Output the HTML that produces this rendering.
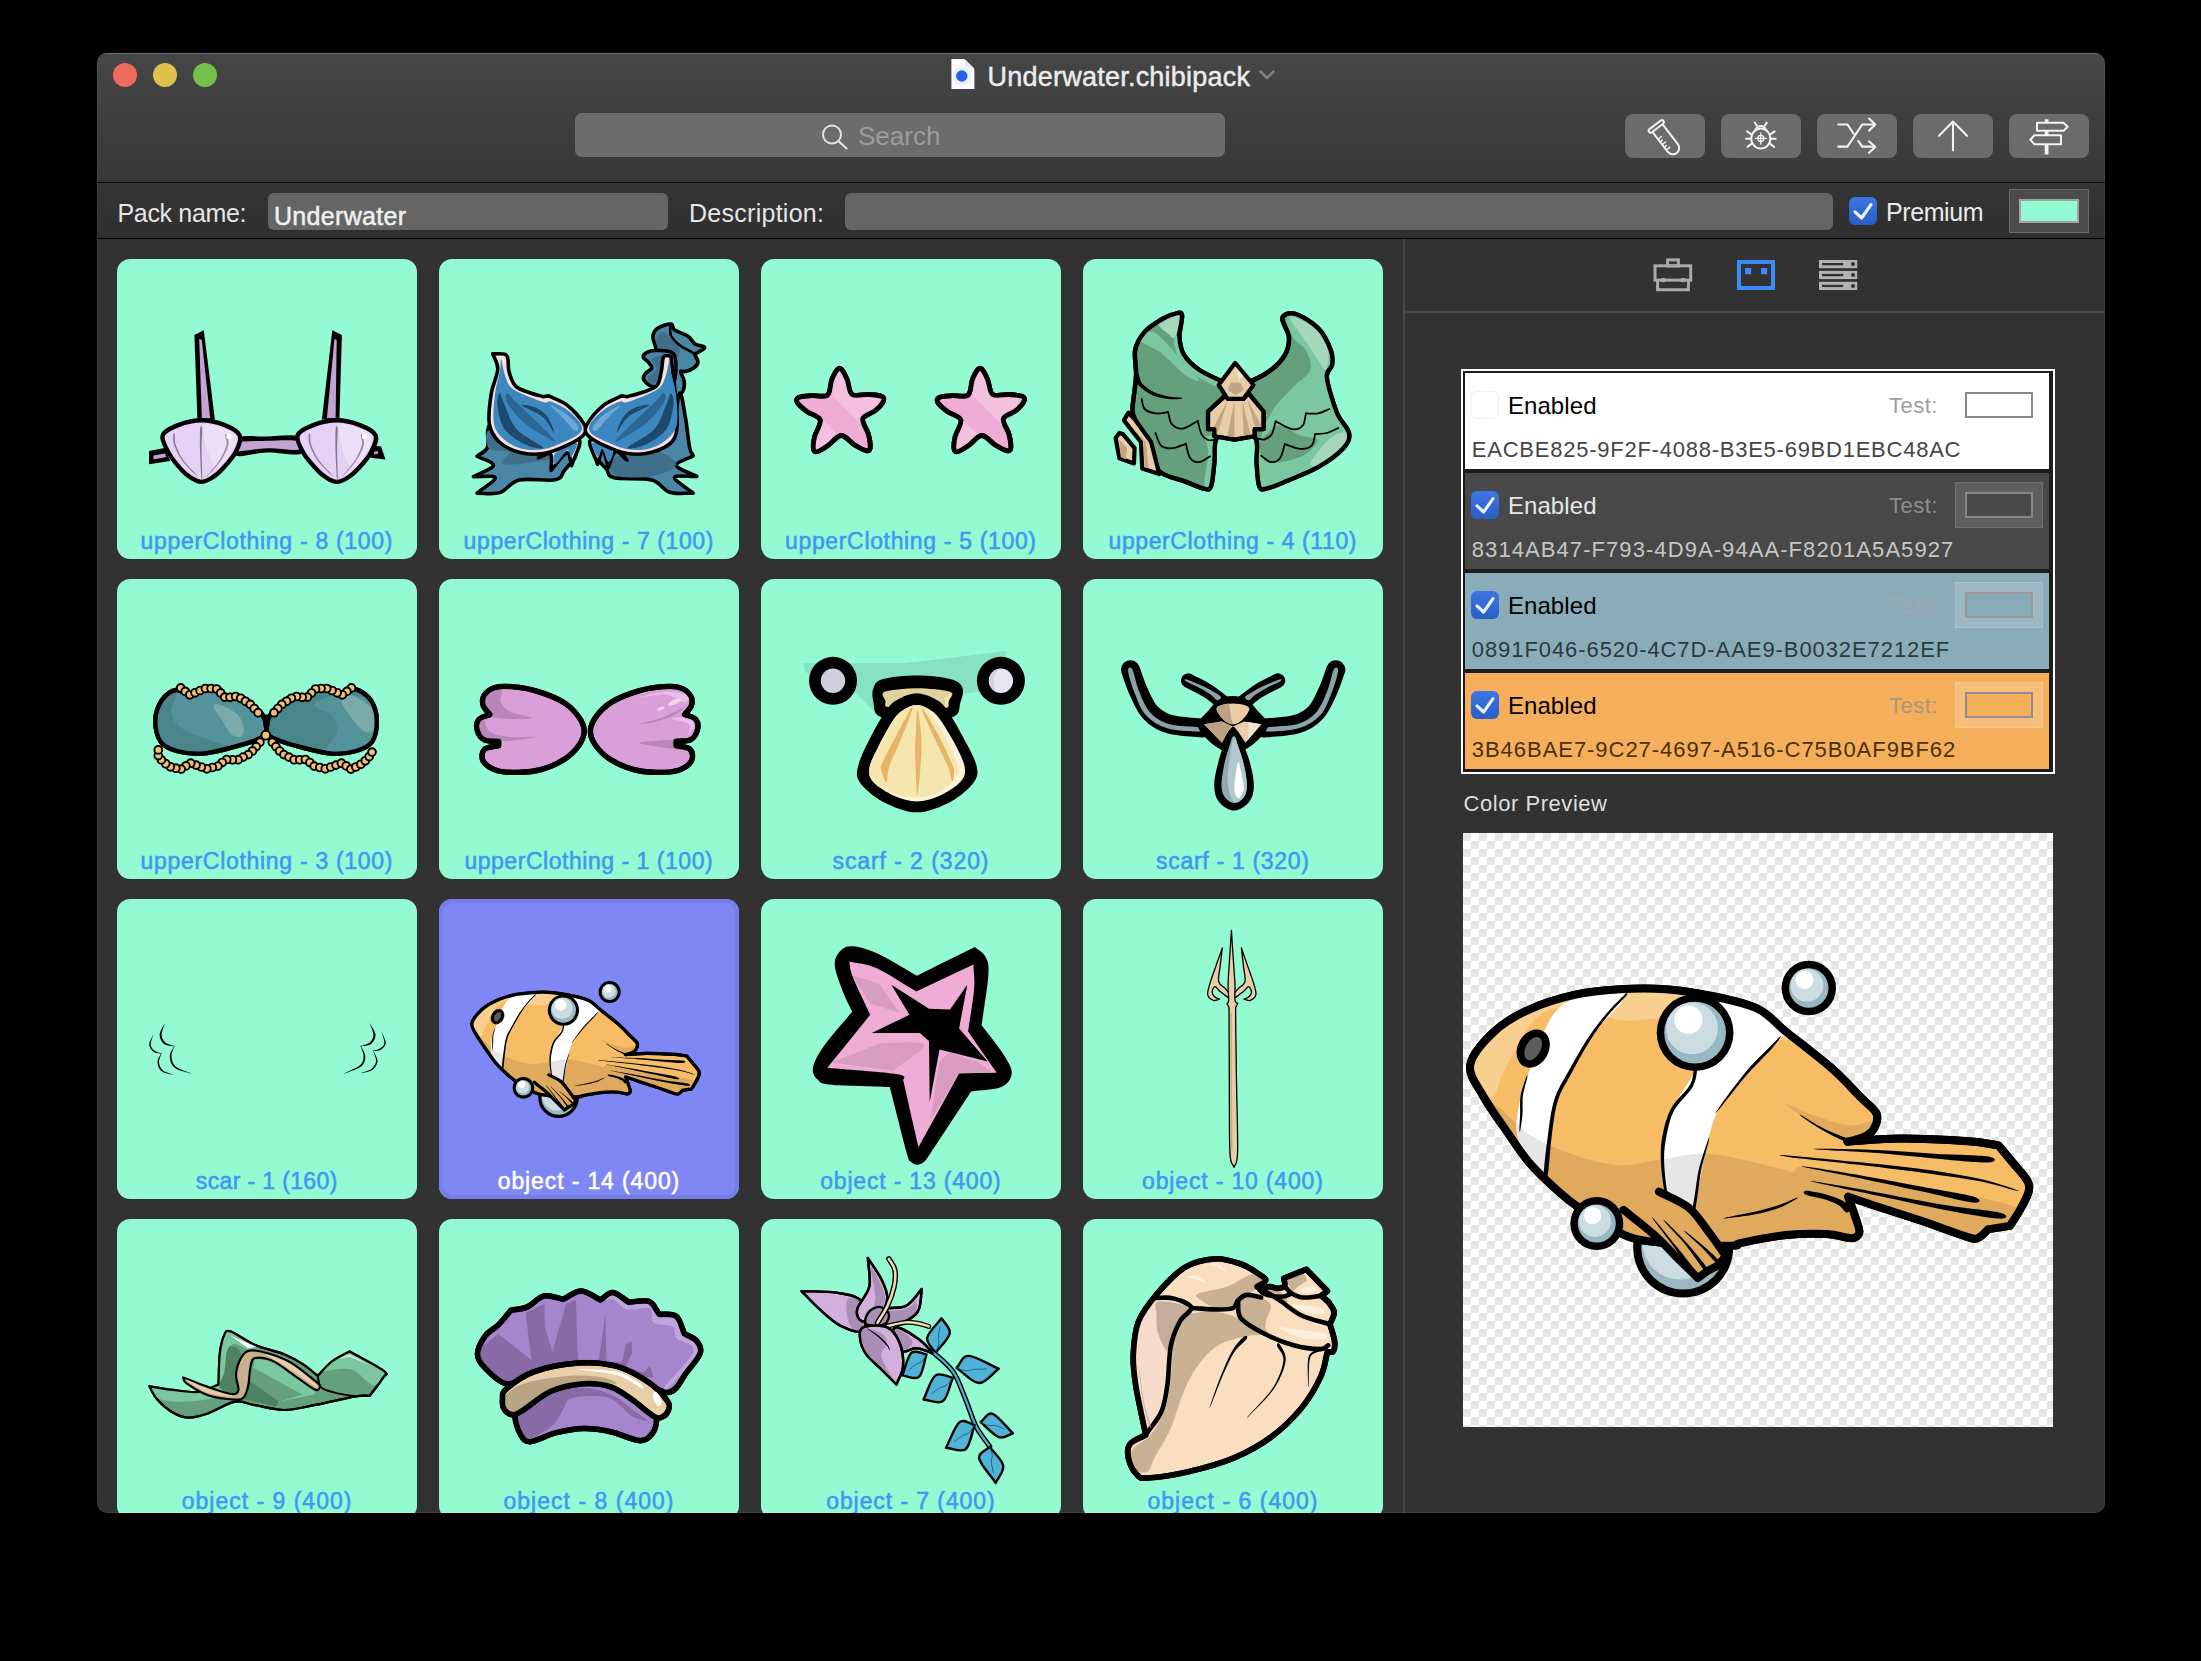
<!DOCTYPE html>
<html><head><meta charset="utf-8"><title>Underwater.chibipack</title>
<style>
html,body{margin:0;padding:0;background:#000;}
body{width:2201px;height:1661px;overflow:hidden;position:relative;font-family:"Liberation Sans",sans-serif;}
#win{position:absolute;left:97px;top:53px;width:2008px;height:1460px;overflow:hidden;border-radius:10px;background:#323232;}
#edge{left:97px;top:53px;width:2008px;height:1460px;border-radius:10px;box-shadow:inset 0 0 0 1px rgba(255,255,255,0.06);pointer-events:none;}
#pg{position:absolute;left:-97px;top:-53px;width:2201px;height:1661px;}
#pg div,#pg svg.abs,#pg>svg,.t{position:absolute;box-sizing:border-box;}
.t{white-space:pre;font-family:"Liberation Sans",sans-serif;}
#tbar{left:97px;top:53px;width:2008px;height:130px;background:linear-gradient(#464646,#373737);box-shadow:inset 0 1px 0 #6a6a6a;border-bottom:1px solid #000;}
.tl{top:63px;width:24px;height:24px;border-radius:12px;}
#search{left:575px;top:113px;width:650px;height:44px;border-radius:7px;background:#6c6c6c;}
.tbtn{top:114px;width:80px;height:44px;border-radius:8px;background:#6b6b6b;}
.tbtn svg{position:absolute;left:0;top:0;}
#prow{left:97px;top:183px;width:2008px;height:56px;background:linear-gradient(#353535,#2e2e2e);border-bottom:1px solid #000;}
.fld{top:193px;height:37px;border-radius:6px;background:#656565;}
.cb{width:28px;height:28px;border-radius:6px;background:linear-gradient(#3b76e4,#2a5dc6);}
.cb svg{position:absolute;left:0;top:0;}
.cb0{width:27px;height:27px;border-radius:6px;background:#fff;border:1px solid #f3f3f3;box-sizing:border-box;width:28px;height:28px;}
.tile{width:300px;height:300px;border-radius:13px;background:#93fad1;overflow:hidden;}
.tile.sel{background:#7f87f5;box-shadow:inset 0 0 0 4px #747de8;}
.tile svg{position:absolute;left:0;top:0;}
#vdiv{left:1403px;top:239px;width:2px;height:1274px;background:#474747;}
#rpanel{left:1405px;top:239px;width:700px;height:1274px;background:#323232;}
#hdiv{left:1405px;top:311px;width:700px;height:2px;background:#474747;}
#list{left:1461px;top:369px;width:594px;height:405px;background:#1c1c1c;box-shadow:inset 0 0 0 2px #fff;}

.row{left:1465px;width:584px;height:96px;}
#prev{left:1463px;top:833px;width:590px;height:594px;overflow:hidden;background:conic-gradient(#fff 25%,#e6e6e6 0 50%,#fff 0 75%,#e6e6e6 0) 0 0/16px 16px;}
#prev svg{position:absolute;left:0;top:0;}

</style></head>
<body>
<div id="win"><div id="pg">
<div id="tbar"></div>
<div class="tl" style="left:113px;background:#ee6a5e"></div>
<div class="tl" style="left:153px;background:#e0c04c"></div>
<div class="tl" style="left:193px;background:#74c04b"></div>
<svg class="abs" style="left:951px;top:58px" width="25" height="32" viewBox="0 0 25 32"><path d="M0.4 1.1 H12 Q13.6 1.1 14.8 2.2 L22.2 9.4 Q23.4 10.6 23.4 12.4 V31.1 H0.4 Z" fill="#fcfcfc"/><path d="M13.6 1.6 Q14.4 1.8 14.8 2.2 L22.2 9.4 Q22.8 10 23 10.8 Q19 9.6 16.2 9.2 Q14.4 9 14.2 7.2 Q14 4 13.6 1.6 Z" fill="#e9e9e9"/><circle cx="10.8" cy="18" r="9.4" fill="#2563f2" opacity="0.07"/><circle cx="10.8" cy="18" r="5.7" fill="#2360ee"/></svg>

<span class="t" style="left:987.6px;top:63.7px;font-size:27px;line-height:27px;color:#ececec;letter-spacing:0.224px;-webkit-text-stroke:0.45px #ececec;">Underwater.chibipack</span>
<svg class="abs" style="left:1258px;top:68px" width="18" height="14" viewBox="0 0 18 14"><path d="M2.5 3.5 L9 10 L15.5 3.5" fill="none" stroke="#7d7d7d" stroke-width="2.6" stroke-linecap="round" stroke-linejoin="round"/></svg>
<div id="search"></div>
<svg class="abs" style="left:818px;top:120px" width="34" height="34" viewBox="0 0 34 34"><circle cx="14" cy="14.5" r="9" fill="none" stroke="#e4e4e4" stroke-width="2"/><path d="M20.5 21 L28.5 28.5" stroke="#e4e4e4" stroke-width="2.2" stroke-linecap="round"/></svg>
<span class="t" style="left:858.0px;top:122.5px;font-size:26px;line-height:26px;color:#9c9c9c;letter-spacing:0.022px;">Search</span>
<div class="tbtn" style="left:1625px"><svg width="80" height="44" viewBox="0 0 80 44"><g transform="translate(31.4,12.6) rotate(-37.5)" fill="none" stroke="#f2f2f2" stroke-width="2" stroke-linecap="round" stroke-linejoin="round"><rect x="-9" y="-2.2" width="18" height="4" rx="2"/><path d="M-6.3 2 V27 a6.3 6.3 0 0 0 12.6 0 V2"/><path d="M-6 11 H-2 M-6 14.4 H-3.5 M-6 17.8 H-2 M-6 21.2 H-3.5 M-6 24.6 H-2" stroke-width="1.4"/></g></svg>
</div>
<div class="tbtn" style="left:1721px"><svg width="80" height="44" viewBox="0 0 80 44"><g fill="none" stroke="#f2f2f2" stroke-width="2" stroke-linecap="round"><ellipse cx="39.8" cy="24.6" rx="9.6" ry="10"/><path d="M34.6 16 A5.4 5.4 0 0 1 45 16"/><path d="M35.6 11.2 L33.8 8.6 M44 11.2 L45.8 8.6"/><path d="M30.6 20.6 L26 17.4 M30.2 24.8 H25 M31 29.4 L26.4 33"/><path d="M49 20.6 L53.6 17.4 M49.4 24.8 H54.6 M48.6 29.4 L53.2 33"/><g stroke-width="1.3"><circle cx="39.8" cy="24.4" r="3"/><path d="M39.8 19 V30 M34.3 24.4 H45.3"/></g></g></svg>
</div>
<div class="tbtn" style="left:1817px"><svg width="80" height="44" viewBox="0 0 80 44"><g fill="none" stroke="#f2f2f2" stroke-width="2.1" stroke-linecap="round" stroke-linejoin="round"><path d="M21.3 32.6 H30.5 L45.2 10.5 H58"/><path d="M21.3 10.5 H30.5 L36.6 19.6 M41.2 26.8 L45.2 32.6 H58"/><path d="M52 4.6 L58.3 10.5 L52 16.7"/><path d="M52 27.3 L58.3 33 L52 38.8"/></g></svg>
</div>
<div class="tbtn" style="left:1913px"><svg width="80" height="44" viewBox="0 0 80 44"><g fill="none" stroke="#f2f2f2" stroke-width="2.1" stroke-linecap="round" stroke-linejoin="round"><path d="M40 7.8 V36.2"/><path d="M26 21.8 L40 7.6 L54 21.8"/></g></svg>
</div>
<div class="tbtn" style="left:2009px"><svg width="80" height="44" viewBox="0 0 80 44"><g fill="none" stroke="#f2f2f2" stroke-width="2" stroke-linejoin="round"><path d="M37.6 5.3 V8.7 M37.6 16.7 V21.2 M37.6 30.3 V40.5" stroke-width="3.8"/><path d="M28 8.7 H54.5 L58.7 12.7 L54.5 16.7 H28 Z"/><path d="M52 21.2 H25.5 L21.3 25.7 L25.5 30.3 H52 Z"/></g></svg>
</div>
<div id="prow"></div>
<span class="t" style="left:117.5px;top:200.8px;font-size:25px;line-height:25px;color:#e6e6e6;letter-spacing:-0.335px;">Pack name:</span>
<div class="fld" style="left:268px;width:400px"></div>
<span class="t" style="left:274.0px;top:203.8px;font-size:25px;line-height:25px;color:#f0f0f0;letter-spacing:0.307px;-webkit-text-stroke:0.5px #f0f0f0;">Underwater</span>
<span class="t" style="left:689.0px;top:200.8px;font-size:25px;line-height:25px;color:#e6e6e6;letter-spacing:0.273px;">Description:</span>
<div class="fld" style="left:845px;width:988px"></div>
<div class="cb" style="left:1849px;top:197px"><svg width="28" height="28" viewBox="0 0 28 28"><path d="M6 14.8 L12.6 21 L22 7.6" fill="none" stroke="#eef2fd" stroke-width="3.1" stroke-linecap="round" stroke-linejoin="round"/></svg>
</div>
<span class="t" style="left:1886.0px;top:199.8px;font-size:25px;line-height:25px;color:#eaeaea;letter-spacing:-0.419px;">Premium</span>
<div class="well" style="left:2009px;top:189px;width:80px;height:44px;background:#4b4b4b;border:1px solid #6b6b6b"><div style="left:9px;top:9px;width:60px;height:24px;border:2px solid #a3a3a3;background:#93fad1"></div></div>
<div class="tile" style="left:117px;top:259px"><svg width="300" height="300" viewBox="0 0 300 300"><path d="M77.4 76.1 L86.8 71.3 L97.9 160.6 L80.4 160.6 Z" fill="#000"/><path d="M82.2 79.8 L84.8 80.9 L93.2 159.3 L84.8 159.3 Z" fill="#c2a3d3"/><path d="M215.3 71.3 L224.9 76.1 L222.4 160.6 L204.9 160.6 Z" fill="#000"/><path d="M219.7 80.9 L217.5 79.8 L209.9 159.3 L218.6 159.3 Z" fill="#c2a3d3"/><path d="M119.9 179 C125.2 175.8 139.7 177.6 149.9 177.4 C160.1 177.2 175.6 174.8 181.3 177.7 C187 180.5 189.2 192.1 184 194.7 C178.8 197.3 160.8 193.2 149.9 193.5 C139 193.8 123.6 198.9 118.6 196.5 C113.6 194.1 114.7 182.2 119.9 179 Z" fill="#000"/><path d="M121.3 183.4 C126.3 181.7 139.9 182 149.9 181.7 C159.9 181.5 175.8 180.5 181.3 182 C186.7 183.5 187.9 189.4 182.6 190.6 C177.4 191.8 160.4 189 149.9 189.2 C139.5 189.5 124.7 192.9 119.9 192 C115.2 191 116.3 185.1 121.3 183.4 Z" fill="#c2a3d3"/><path d="M32 192 L47.7 189 L53.2 201.9 L32 205.2 Z" fill="#000"/><path d="M36.5 196.5 L48 194.4 L49.3 198.1 L36.5 200.4 Z" fill="#c2a3d3"/><path d="M256.2 186.5 L264.1 187.6 L268.5 200.4 L253.5 198.8 Z" fill="#000"/><path d="M257.3 192.7 L260.6 192.1 L261.4 194.6 L256.9 195.4 Z" fill="#c2a3d3"/><path d="M45.7 176.3 C47.2 171.6 54.9 168.6 61.3 166.1 C67.8 163.6 76.8 161.3 84.5 161.3 C92.2 161.3 101.3 163.6 107.7 166.1 C114 168.6 120.8 171.9 122.7 176.3 C124.5 180.7 121.6 187.2 118.8 192.7 C116.1 198.1 110.2 204.7 106.3 209 C102.4 213.3 99.2 216.2 95.4 218.5 C91.7 220.9 87.5 222.9 83.8 222.9 C80.2 222.9 76.9 220.6 73.6 218.5 C70.3 216.5 67.7 214.5 64.1 210.4 C60.4 206.3 54.9 199.7 51.8 194 C48.7 188.3 44.1 181 45.7 176.3 Z" fill="#e6d0f5" stroke="#000" stroke-width="4.4" stroke-linejoin="round" stroke-linecap="round"/><path d="M85.9 168.1 C87.2 161.8 100.9 167.9 106.3 169.5 C111.8 171.1 117.2 173.8 118.6 177.7 C119.9 181.5 117.9 187.7 114.5 192.7 C111.1 197.6 102.9 211.7 98.1 207.6 C93.4 203.6 84.5 174.5 85.9 168.1 Z" fill="#eedff9"/><path d="M83.2 169.5 C82.9 172.9 82.8 181.8 83 189.9 C83.2 198.1 83.9 213.8 84.3 218.6 C84.7 223.3 85.2 223.3 85.3 218.5 C85.3 213.8 84.6 198.1 84.6 189.9 C84.6 181.7 85.5 172.9 85.2 169.5 C85 166.1 83.6 166.1 83.2 169.5 Z" fill="#857a8c"/><path d="M56.3 175.7 C56.2 177.4 55.8 181.8 57.2 186.1 C58.6 190.3 61.3 196.2 64.9 201.2 C68.5 206.2 76.4 213.6 78.8 216 C81.2 218.4 81.4 218.2 79.3 215.6 C77.1 213 69.4 205.5 65.9 200.5 C62.5 195.5 60 189.7 58.7 185.6 C57.3 181.4 58.1 177.2 57.7 175.5 C57.3 173.9 56.4 173.9 56.3 175.7 Z" fill="#857a8c"/><path d="M108.1 176.4 C108.1 178 110.3 181.6 109.5 185.6 C108.6 189.6 106 195.4 102.9 200.4 C99.9 205.4 93 213 91.1 215.6 C89.2 218.2 89.4 218.4 91.6 216 C93.7 213.6 100.9 206.2 104.2 201.2 C107.5 196.2 110.4 190.2 111.3 186 C112.3 181.9 110.5 177.8 109.9 176.2 C109.4 174.6 108.2 174.8 108.1 176.4 Z" fill="#9a909f"/><circle cx="112" cy="177.4" r="2.6" fill="#fff"/><path d="M180.6 176.3 C182.2 171.6 189.7 168.6 196.3 166.1 C202.8 163.6 211.9 161.3 219.7 161.3 C227.5 161.3 236.4 163.6 242.9 166.1 C249.4 168.6 256.6 171.9 258.6 176.3 C260.5 180.7 257.1 187.2 254.3 192.7 C251.6 198.1 245.8 204.7 241.9 209 C238 213.3 234.7 216.2 231 218.5 C227.3 220.9 223.3 222.9 219.7 222.9 C216.1 222.9 212.6 220.6 209.2 218.5 C205.9 216.5 203.5 214.5 199.7 210.4 C195.9 206.3 189.6 199.7 186.5 194 C183.3 188.3 179 181 180.6 176.3 Z" fill="#e6d0f5" stroke="#000" stroke-width="4.4" stroke-linejoin="round" stroke-linecap="round"/><path d="M221.3 168.1 C222.7 161.8 236.3 167.9 241.8 169.5 C247.2 171.1 252.7 173.8 254.1 177.7 C255.4 181.5 253.4 187.7 250 192.7 C246.6 197.6 238.4 211.7 233.6 207.6 C228.8 203.6 220 174.5 221.3 168.1 Z" fill="#eedff9"/><path d="M218.7 169.5 C218.3 172.9 218.3 181.8 218.5 189.9 C218.7 198.1 219.4 213.8 219.8 218.6 C220.1 223.3 220.7 223.3 220.8 218.5 C220.8 213.8 220.1 198.1 220.1 189.9 C220.1 181.7 220.9 172.9 220.7 169.5 C220.5 166.1 219.1 166.1 218.7 169.5 Z" fill="#857a8c"/><path d="M191.8 175.7 C191.7 177.4 191.2 181.8 192.7 186.1 C194.1 190.3 196.8 196.2 200.4 201.2 C204 206.2 211.9 213.6 214.3 216 C216.7 218.4 216.9 218.2 214.8 215.6 C212.6 213 204.9 205.5 201.4 200.5 C198 195.5 195.5 189.7 194.1 185.6 C192.8 181.4 193.5 177.2 193.1 175.5 C192.7 173.9 191.8 173.9 191.8 175.7 Z" fill="#857a8c"/><path d="M243.6 176.4 C243.5 178 245.8 181.6 244.9 185.6 C244.1 189.6 241.5 195.4 238.4 200.4 C235.4 205.4 228.5 213 226.6 215.6 C224.7 218.2 224.8 218.4 227 216 C229.2 213.6 236.4 206.2 239.7 201.2 C243 196.2 245.9 190.2 246.8 186 C247.8 181.9 245.9 177.8 245.4 176.2 C244.9 174.6 243.7 174.8 243.6 176.4 Z" fill="#9a909f"/><circle cx="247.5" cy="177.4" r="2.6" fill="#fff"/></svg></div>
<span class="t" style="left:140.5px;top:529.8px;font-size:23px;line-height:23px;color:#3f97f6;letter-spacing:0.703px;-webkit-text-stroke:0.55px #3f97f6;">upperClothing - 8 (100)</span>
<div class="tile" style="left:439px;top:259px"><svg width="300" height="300" viewBox="0 0 300 300"><path d="M217.5 92.1 C215.7 82.7 213.7 81.5 213.9 77.7 C214.1 73.9 215.7 71.4 218.7 69.3 C221.7 67.2 229.1 64.8 231.9 65.1 C234.8 65.4 232.7 69.1 235.6 71.1 C238.4 73.1 245.4 74.8 248.8 77.1 C252.2 79.4 253.2 83 256 84.9 C258.8 86.8 265.2 87.1 265.7 88.5 C266.2 89.9 260.6 92.1 259 93.4 C257.4 94.6 256 94.2 256 95.8 C256 97.4 259.2 100.8 259 103 C258.8 105.2 256.9 107.4 254.8 109 C252.7 110.6 248.6 112 246.4 112.6 C244.2 113.2 241.8 111 241.6 112.6 C241.4 114.2 244.8 119 245.2 122.3 C245.6 125.5 245.4 129.3 244 131.9 C242.6 134.5 240 137.5 236.8 137.9 C233.6 138.3 227.9 141.9 224.7 134.3 C221.5 126.7 219.3 101.6 217.5 92.1 Z" fill="#4a86a6" stroke="#000" stroke-width="3.6" stroke-linejoin="round" stroke-linecap="round"/><path d="M219.9 90.9 C217.9 88.1 216.7 81.9 217.5 78.9 C218.3 75.9 222.3 72.7 224.7 72.9 C227.1 73.1 229.3 77.3 231.9 80.1 C234.6 82.9 239.6 86.3 240.4 89.7 C241.2 93.2 238.6 99.6 236.8 100.6 C235 101.6 232.3 97.4 229.5 95.8 C226.7 94.2 221.9 93.8 219.9 90.9 Z" fill="#3f6f8b"/><path d="M231.3 66.3 C231.5 69.7 230.4 73.2 231.9 76.5 C233.5 79.8 237.6 83.7 240.4 86.1 C243.2 88.5 246.2 89.5 248.8 90.9 C251.4 92.4 253.6 93.5 256 94.8" fill="none" stroke="#000" stroke-width="2.6" stroke-linejoin="round" stroke-linecap="round"/><path d="M215.1 128.3 C210.6 127.1 206.4 123.3 204.9 121.1 C203.3 118.8 204.8 117 206.1 115 C207.4 113 212.2 111 212.7 109 C213.2 107 210.5 104.8 209.1 103 C207.7 101.2 204.4 99.8 204.2 98.2 C204 96.6 205.7 94.5 207.9 93.4 C210.1 92.2 213.1 91.3 217.5 91.5 C221.9 91.7 231.1 91 234.4 94.6 C237.6 98.1 237.2 107 236.8 112.6 C236.4 118.2 235.6 125.7 231.9 128.3 C228.3 130.9 219.6 129.5 215.1 128.3 Z" fill="#4a86a6" stroke="#000" stroke-width="3.6" stroke-linejoin="round" stroke-linecap="round"/><path d="M212.7 124.7 C210.5 124.9 208.3 121.1 209.1 118.6 C209.9 116.2 216.9 113.2 217.5 110.2 C218.1 107.2 211.5 102.6 212.7 100.6 C213.9 98.6 223.1 95.4 224.7 98.2 C226.3 101 224.3 113 222.3 117.4 C220.3 121.9 214.9 124.5 212.7 124.7 Z" fill="#3f6f8b"/><path d="M56.1 158.4 C54.5 157.4 50.2 165.4 48.9 170.4 C47.6 175.4 50.2 184 48.4 188.5 C46.6 192.9 41.5 194.3 38.1 197.2 C43.5 200.3 54.9 203.1 54.3 206.6 C53.7 210 41.1 213.9 34.5 217.6 C41.7 218 55.5 216.1 56.1 218.8 C56.7 221.6 44.1 229.1 38.1 234.2 C45.7 234 53.9 235.9 60.9 233.6 C68 231.4 71 223.1 80.2 221 C89.4 218.9 108.8 222.4 116.3 220.8 C123.9 219.2 122.2 215.9 125.4 211.4 C128.6 206.8 140.7 197.1 135.6 193.3 C130.5 189.5 107.5 191.3 94.7 188.5 C81.8 185.7 65 181.5 58.5 176.4 C52.1 171.4 57.7 159.4 56.1 158.4 Z" fill="#4a86a6" stroke="#000" stroke-width="3.6" stroke-linejoin="round" stroke-linecap="round"/><path d="M51.6 170.4 C44.5 170.6 46.9 185.9 50.1 189.7 C53.3 193.5 68.4 190.7 70.6 193.3 C72.8 195.9 57.7 203.9 63.4 205.3 C69 206.8 93.9 203.3 104.3 201.7 C114.7 200.1 128 197.9 126 195.7 C124 193.5 104.7 192.7 92.3 188.5 C79.9 184.3 58.6 170.2 51.6 170.4 Z" fill="#3f6f8b"/><path d="M240.4 134.3 C242.8 132.3 244.7 149.3 246.4 158.4 C248.1 167.4 249.3 182.1 250.6 188.5 C251.9 194.9 253 193.9 254.2 196.7 C248.6 200 236.8 203.1 237.4 206.6 C238 210 251 213.8 257.8 217.4 C250.4 217.8 236.2 215.8 235.6 218.6 C235 221.4 248 229 254.2 234.2 C246.4 233.9 237.7 235.5 230.7 233.3 C223.8 231.1 221.9 223.4 212.7 221 C203.4 218.6 182.9 220.6 175.3 218.8 C167.8 217 170.5 214.4 167.5 210.2 C164.5 205.9 151.8 196.9 157.3 193.3 C162.8 189.7 188.2 192.3 200.6 188.5 C213.1 184.7 225.3 179.5 231.9 170.4 C238.6 161.4 238 136.3 240.4 134.3 Z" fill="#4a86a6" stroke="#000" stroke-width="3.6" stroke-linejoin="round" stroke-linecap="round"/><path d="M174.1 200.5 C170.1 204.5 170.1 213.4 176.6 216.2 C183 219 202.6 219 212.7 217.4 C222.7 215.8 234.8 210.4 236.8 206.6 C238.8 202.7 230.7 196.9 224.7 194.5 C218.7 192.1 209.1 191.1 200.6 192.1 C192.2 193.1 178.2 196.5 174.1 200.5 Z" fill="#3f6f8b"/><path d="M99.5 198.7 C103.5 197.5 109.4 193 111.5 195.1 C113.6 197.2 111.9 205.9 112.1 211.4 C117.3 205.5 124.4 194.7 127.8 193.9 C131.2 193.1 131 202.3 132.6 206.6 C135.2 198.1 143.1 184.3 140.4 181.3 C137.7 178.3 123.2 185.6 116.3 188.5 C109.5 191.4 105.1 195.3 99.5 198.7 Z" fill="#f6dfe0" stroke="#000" stroke-width="3.6" stroke-linejoin="round" stroke-linecap="round"/><path d="M115.1 195.7 C113.9 198.3 114.1 206.1 116.3 205.3 C118.5 204.5 125.8 192.1 128.4 190.9 C131 189.7 130.4 199.3 132 198.1 C133.6 196.9 139.4 185.1 138 183.7 C136.6 182.3 127.4 187.7 123.6 189.7 C119.8 191.7 116.3 193.1 115.1 195.7 Z" fill="#3d87c0"/><path d="M188 201.1 C184.2 198.3 179.7 191.5 176.6 192.7 C173.4 193.9 171.7 203.1 169.3 208.4 C167.5 202.7 165.7 192 163.9 191.5 C162.1 191 160.3 200.7 158.5 205.3 C156.1 197.3 148.3 184.1 151.3 181.3 C154.3 178.5 170.4 185.2 176.6 188.5 C182.7 191.8 184.2 196.9 188 201.1 Z" fill="#f6dfe0" stroke="#000" stroke-width="3.6" stroke-linejoin="round" stroke-linecap="round"/><path d="M174.1 194.5 C174.1 196.7 171.1 203.7 169.3 202.9 C167.5 202.1 165 190.5 163.3 189.7 C161.6 188.9 160.8 199.1 159.1 198.1 C157.4 197.1 151.4 185.1 153.1 183.7 C154.8 182.3 165.8 187.9 169.3 189.7 C172.8 191.5 174.1 192.3 174.1 194.5 Z" fill="#3d87c0"/><path d="M53.7 94.8 C58.3 95.3 64.9 93.4 67.6 96.4 C70.3 99.3 68.5 107.5 70 112.6 C71.5 117.7 72.9 123.5 76.6 127.1 C80.3 130.7 87.6 132.5 92.3 134.3 C96.9 136.1 100.3 136.5 104.3 137.7 C106.1 137.4 107.9 137.2 109.7 136.9 C115.9 140.1 122.6 141.8 128.4 146.3 C134.2 150.9 141.8 159.6 144.6 164.4 C147.4 169.2 148 171.6 145.2 175.2 C142.5 178.9 135.2 182.9 128.4 186.1 C121.6 189.3 112.3 193.3 104.3 194.5 C96.3 195.7 87.6 195.3 80.2 193.3 C72.8 191.3 64.7 187.3 59.7 182.5 C54.8 177.6 51.6 172.4 50.3 164.4 C49.1 156.4 50.9 143.3 52.3 134.3 C53.7 125.3 58.5 116.8 58.8 110.2 C59 103.6 55.4 99.9 53.7 94.8 Z" fill="#f6dfe0" stroke="#000" stroke-width="3.6" stroke-linejoin="round" stroke-linecap="round"/><path d="M231.9 97.2 C229.5 97.3 226.3 95 224.7 97.6 C223.1 100.1 223.5 107.7 222.3 112.6 C221.1 117.5 221.1 123.5 217.5 127.1 C213.9 130.7 205.6 132.5 200.6 134.3 C195.7 136.1 192.2 136.5 188 137.7 C186.2 137.4 184.4 137.2 182.6 136.9 C176.6 140.1 170.2 141.8 164.5 146.3 C158.8 150.9 151.4 159.6 148.6 164.4 C145.8 169.2 145.2 171.6 147.9 175.2 C150.5 178.9 157.7 182.9 164.5 186.1 C171.3 189.3 180.6 193.3 188.6 194.5 C196.6 195.7 205.3 195.3 212.7 193.3 C220.1 191.3 228.9 187.3 233.2 182.5 C237.4 177.6 237.7 172.4 238.2 164.4 C238.7 156.4 237 143.3 236.2 134.3 C235.4 125.3 234.1 116.4 233.4 110.2 C232.7 104 232.4 101.5 231.9 97.2 Z" fill="#f6dfe0" stroke="#000" stroke-width="3.6" stroke-linejoin="round" stroke-linecap="round"/><path d="M62.1 100.6 C63.1 101.4 64.3 112.5 66.4 117.4 C68.5 122.4 68.5 126.2 74.8 130.4 C81.1 134.7 98.2 141 104.3 143 C110.4 145 107.5 141.2 111.5 142.5 C115.5 143.8 123.3 147.2 128.4 150.9 C133.4 154.7 139.9 161.1 141.9 165 C143.9 169 143.1 171.7 140.4 174.6 C137.8 177.5 132 179.9 126 182.5 C120 185.1 111.5 189.1 104.3 190.3 C97.1 191.5 89.2 191.4 82.6 189.7 C76 188 69.2 184.3 64.6 180.1 C59.9 175.8 56.3 172 54.9 164.4 C53.5 156.8 55.1 142.9 56.1 134.3 C57.1 125.7 59.9 118.2 60.9 112.6 C61.9 107 61.2 99.8 62.1 100.6 Z" fill="#3d87c0"/><path d="M58.5 146.3 C59.3 152.4 60.9 163.8 65.8 170.4 C70.6 177 81 183.1 87.4 186.1 C93.9 189.1 105.9 191.1 104.3 188.5 C102.7 185.9 84.2 177.4 77.8 170.4 C71.4 163.4 68.6 152.4 65.8 146.3 C63 140.3 62.1 134.3 60.9 134.3 C59.7 134.3 57.7 140.3 58.5 146.3 Z" fill="#1d4a6c"/><path d="M68.2 143.9 C71.4 149.1 79.4 159.2 87.4 165.6 C95.5 172 114.7 183.1 116.3 182.5 C117.9 181.9 103.5 168.4 97.1 162 C90.6 155.6 82.6 148.5 77.8 143.9 C73 139.3 69.8 134.3 68.2 134.3 C66.6 134.3 65 138.7 68.2 143.9 Z" fill="#2a6797"/><path d="M82.6 146.3 C83.8 147.9 98.9 153.8 104.3 158.4 C109.7 163 114.3 174 115.1 174 C115.9 174 112.1 162.6 109.1 158.4 C106.1 154.2 101.5 150.8 97.1 148.7 C92.7 146.7 81.4 144.7 82.6 146.3 Z" fill="#1d4a6c"/><path d="M111.5 146.3 C112.3 145.9 123.8 152.4 128.4 156 C133 159.6 138 165.4 139.2 168 C140.4 170.6 138.2 173.2 135.6 171.6 C133 170 127.6 162.6 123.6 158.4 C119.6 154.2 110.7 146.7 111.5 146.3 Z" fill="#6ca8d6"/><path d="M230.7 100.6 C229.8 101.4 228.6 112.5 226.5 117.4 C224.4 122.4 224.4 126.2 218.1 130.4 C211.8 134.7 194.7 141 188.6 143 C182.5 145 185.4 141.2 181.4 142.5 C177.4 143.8 169.6 147.2 164.5 150.9 C159.5 154.7 153 161.1 151 165 C149 169 149.8 171.7 152.5 174.6 C155.1 177.5 160.9 179.9 166.9 182.5 C172.9 185.1 181.4 189.1 188.6 190.3 C195.8 191.5 203.6 191.4 210.3 189.7 C216.9 188 223.7 184.3 228.3 180.1 C232.9 175.8 236.6 172 238 164.4 C239.4 156.8 237.8 142.9 236.8 134.3 C235.8 125.7 232.9 118.2 231.9 112.6 C230.9 107 231.6 99.8 230.7 100.6 Z" fill="#3d87c0"/><path d="M234.4 146.3 C233.6 152.4 231.9 163.8 227.1 170.4 C222.3 177 211.9 183.1 205.5 186.1 C199 189.1 187 191.1 188.6 188.5 C190.2 185.9 208.7 177.4 215.1 170.4 C221.5 163.4 224.3 152.4 227.1 146.3 C229.9 140.3 230.7 134.3 231.9 134.3 C233.2 134.3 235.2 140.3 234.4 146.3 Z" fill="#1d4a6c"/><path d="M224.7 143.9 C221.5 149.1 213.5 159.2 205.5 165.6 C197.4 172 178.2 183.1 176.6 182.5 C174.9 181.9 189.4 168.4 195.8 162 C202.2 155.6 210.3 148.5 215.1 143.9 C219.9 139.3 223.1 134.3 224.7 134.3 C226.3 134.3 227.9 138.7 224.7 143.9 Z" fill="#2a6797"/><path d="M210.3 146.3 C209.1 147.9 194 153.8 188.6 158.4 C183.2 163 178.6 174 177.8 174 C177 174 180.8 162.6 183.8 158.4 C186.8 154.2 191.4 150.8 195.8 148.7 C200.2 146.7 211.5 144.7 210.3 146.3 Z" fill="#1d4a6c"/><path d="M181.4 146.3 C180.6 145.9 169.1 152.4 164.5 156 C159.9 159.6 154.9 165.4 153.7 168 C152.5 170.6 154.7 173.2 157.3 171.6 C159.9 170 165.3 162.6 169.3 158.4 C173.3 154.2 182.2 146.7 181.4 146.3 Z" fill="#6ca8d6"/></svg></div>
<span class="t" style="left:463.6px;top:529.8px;font-size:23px;line-height:23px;color:#3f97f6;letter-spacing:0.603px;-webkit-text-stroke:0.55px #3f97f6;">upperClothing - 7 (100)</span>
<div class="tile" style="left:761px;top:259px"><svg width="300" height="300" viewBox="0 0 300 300"><path d="M76.5 110.3 C78.1 108.6 78.9 108.6 80.5 110.3 C82.1 112.1 84.4 116.5 86.2 120.7 C87.9 124.9 87.7 133 91.2 135.5 C94.8 137.9 102.6 135.2 107.4 135.5 C112.3 135.8 117.9 136.2 120.4 137.3 C122.9 138.3 123.5 139.6 122.5 142 C121.6 144.3 118 148.5 114.5 151.4 C111 154.4 102.9 155.8 101.7 159.7 C100.6 163.6 106.2 170.1 107.4 175.1 C108.7 180 109.6 186.5 109.2 189.2 C108.8 192 107.7 192.2 105.1 191.6 C102.4 191 97.4 188.2 93.2 185.7 C89.1 183.2 84.6 176.4 80.2 176.5 C75.9 176.6 71.2 183.6 67.3 186.3 C63.3 189 59.1 191.9 56.6 192.5 C54.2 193.2 53 192.9 52.5 190.4 C52 187.9 52.5 182.3 53.7 177.4 C54.8 172.5 60.5 165 59.2 160.9 C57.9 156.7 49.8 155.5 46 152.6 C42.2 149.8 37.7 146.1 36.3 143.8 C34.9 141.4 35.3 139.6 37.7 138.4 C40.1 137.3 45.9 137.1 50.7 136.7 C55.5 136.3 63.1 138.7 66.4 136.1 C69.8 133.4 69.1 125 70.8 120.7 C72.5 116.4 74.9 112.1 76.5 110.3 Z" fill="#efadd6" stroke="#000" stroke-width="4.8" stroke-linejoin="round" stroke-linecap="round"/><clipPath id="st0"><path d="M76.5 110.3 C78.1 108.6 78.9 108.6 80.5 110.3 C82.1 112.1 84.4 116.5 86.2 120.7 C87.9 124.9 87.7 133 91.2 135.5 C94.8 137.9 102.6 135.2 107.4 135.5 C112.3 135.8 117.9 136.2 120.4 137.3 C122.9 138.3 123.5 139.6 122.5 142 C121.6 144.3 118 148.5 114.5 151.4 C111 154.4 102.9 155.8 101.7 159.7 C100.6 163.6 106.2 170.1 107.4 175.1 C108.7 180 109.6 186.5 109.2 189.2 C108.8 192 107.7 192.2 105.1 191.6 C102.4 191 97.4 188.2 93.2 185.7 C89.1 183.2 84.6 176.4 80.2 176.5 C75.9 176.6 71.2 183.6 67.3 186.3 C63.3 189 59.1 191.9 56.6 192.5 C54.2 193.2 53 192.9 52.5 190.4 C52 187.9 52.5 182.3 53.7 177.4 C54.8 172.5 60.5 165 59.2 160.9 C57.9 156.7 49.8 155.5 46 152.6 C42.2 149.8 37.7 146.1 36.3 143.8 C34.9 141.4 35.3 139.6 37.7 138.4 C40.1 137.3 45.9 137.1 50.7 136.7 C55.5 136.3 63.1 138.7 66.4 136.1 C69.8 133.4 69.1 125 70.8 120.7 C72.5 116.4 74.9 112.1 76.5 110.3 Z"/></clipPath><g clip-path="url(#st0)"><path d="M70.8 136.1 L105.1 170.3 L126.3 170.3 L126.3 101.8 L70.8 101.8 Z" fill="#f3c0e0"/><path d="M62.5 162.1 L75.5 175.1 L55.4 196.3 L49.5 172.7 Z" fill="#f3c0e0"/></g><path d="M76.5 110.3 C78.1 108.6 78.9 108.6 80.5 110.3 C82.1 112.1 84.4 116.5 86.2 120.7 C87.9 124.9 87.7 133 91.2 135.5 C94.8 137.9 102.6 135.2 107.4 135.5 C112.3 135.8 117.9 136.2 120.4 137.3 C122.9 138.3 123.5 139.6 122.5 142 C121.6 144.3 118 148.5 114.5 151.4 C111 154.4 102.9 155.8 101.7 159.7 C100.6 163.6 106.2 170.1 107.4 175.1 C108.7 180 109.6 186.5 109.2 189.2 C108.8 192 107.7 192.2 105.1 191.6 C102.4 191 97.4 188.2 93.2 185.7 C89.1 183.2 84.6 176.4 80.2 176.5 C75.9 176.6 71.2 183.6 67.3 186.3 C63.3 189 59.1 191.9 56.6 192.5 C54.2 193.2 53 192.9 52.5 190.4 C52 187.9 52.5 182.3 53.7 177.4 C54.8 172.5 60.5 165 59.2 160.9 C57.9 156.7 49.8 155.5 46 152.6 C42.2 149.8 37.7 146.1 36.3 143.8 C34.9 141.4 35.3 139.6 37.7 138.4 C40.1 137.3 45.9 137.1 50.7 136.7 C55.5 136.3 63.1 138.7 66.4 136.1 C69.8 133.4 69.1 125 70.8 120.7 C72.5 116.4 74.9 112.1 76.5 110.3 Z" fill="none" stroke="#000" stroke-width="4.8" stroke-linejoin="round" stroke-linecap="round"/><path d="M217 110.3 C218.7 108.6 219.4 108.6 221.1 110.3 C222.7 112.1 224.9 116.5 226.7 120.7 C228.5 124.9 228.3 133 231.8 135.5 C235.4 137.9 243.1 135.2 248 135.5 C252.9 135.8 258.5 136.2 261 137.3 C263.5 138.3 264.1 139.6 263.1 142 C262.1 144.3 258.6 148.5 255.1 151.4 C251.6 154.4 243.5 155.8 242.3 159.7 C241.1 163.6 246.8 170.1 248 175.1 C249.2 180 250.2 186.5 249.8 189.2 C249.4 192 248.3 192.2 245.6 191.6 C243 191 238 188.2 233.8 185.7 C229.7 183.2 225.2 176.4 220.8 176.5 C216.5 176.6 211.8 183.6 207.8 186.3 C203.9 189 199.7 191.9 197.2 192.5 C194.7 193.2 193.6 192.9 193.1 190.4 C192.6 187.9 193.1 182.3 194.2 177.4 C195.4 172.5 201.1 165 199.8 160.9 C198.5 156.7 190.4 155.5 186.6 152.6 C182.7 149.8 178.3 146.1 176.9 143.8 C175.5 141.4 175.9 139.6 178.3 138.4 C180.7 137.3 186.5 137.1 191.3 136.7 C196.1 136.3 203.7 138.7 207 136.1 C210.4 133.4 209.7 125 211.4 120.7 C213 116.4 215.4 112.1 217 110.3 Z" fill="#efadd6" stroke="#000" stroke-width="4.8" stroke-linejoin="round" stroke-linecap="round"/><clipPath id="st1"><path d="M217 110.3 C218.7 108.6 219.4 108.6 221.1 110.3 C222.7 112.1 224.9 116.5 226.7 120.7 C228.5 124.9 228.3 133 231.8 135.5 C235.4 137.9 243.1 135.2 248 135.5 C252.9 135.8 258.5 136.2 261 137.3 C263.5 138.3 264.1 139.6 263.1 142 C262.1 144.3 258.6 148.5 255.1 151.4 C251.6 154.4 243.5 155.8 242.3 159.7 C241.1 163.6 246.8 170.1 248 175.1 C249.2 180 250.2 186.5 249.8 189.2 C249.4 192 248.3 192.2 245.6 191.6 C243 191 238 188.2 233.8 185.7 C229.7 183.2 225.2 176.4 220.8 176.5 C216.5 176.6 211.8 183.6 207.8 186.3 C203.9 189 199.7 191.9 197.2 192.5 C194.7 193.2 193.6 192.9 193.1 190.4 C192.6 187.9 193.1 182.3 194.2 177.4 C195.4 172.5 201.1 165 199.8 160.9 C198.5 156.7 190.4 155.5 186.6 152.6 C182.7 149.8 178.3 146.1 176.9 143.8 C175.5 141.4 175.9 139.6 178.3 138.4 C180.7 137.3 186.5 137.1 191.3 136.7 C196.1 136.3 203.7 138.7 207 136.1 C210.4 133.4 209.7 125 211.4 120.7 C213 116.4 215.4 112.1 217 110.3 Z"/></clipPath><g clip-path="url(#st1)"><path d="M211.4 136.1 L245.6 170.3 L266.9 170.3 L266.9 101.8 L211.4 101.8 Z" fill="#f3c0e0"/><path d="M203.1 162.1 L216.1 175.1 L196 196.3 L190.1 172.7 Z" fill="#f3c0e0"/></g><path d="M217 110.3 C218.7 108.6 219.4 108.6 221.1 110.3 C222.7 112.1 224.9 116.5 226.7 120.7 C228.5 124.9 228.3 133 231.8 135.5 C235.4 137.9 243.1 135.2 248 135.5 C252.9 135.8 258.5 136.2 261 137.3 C263.5 138.3 264.1 139.6 263.1 142 C262.1 144.3 258.6 148.5 255.1 151.4 C251.6 154.4 243.5 155.8 242.3 159.7 C241.1 163.6 246.8 170.1 248 175.1 C249.2 180 250.2 186.5 249.8 189.2 C249.4 192 248.3 192.2 245.6 191.6 C243 191 238 188.2 233.8 185.7 C229.7 183.2 225.2 176.4 220.8 176.5 C216.5 176.6 211.8 183.6 207.8 186.3 C203.9 189 199.7 191.9 197.2 192.5 C194.7 193.2 193.6 192.9 193.1 190.4 C192.6 187.9 193.1 182.3 194.2 177.4 C195.4 172.5 201.1 165 199.8 160.9 C198.5 156.7 190.4 155.5 186.6 152.6 C182.7 149.8 178.3 146.1 176.9 143.8 C175.5 141.4 175.9 139.6 178.3 138.4 C180.7 137.3 186.5 137.1 191.3 136.7 C196.1 136.3 203.7 138.7 207 136.1 C210.4 133.4 209.7 125 211.4 120.7 C213 116.4 215.4 112.1 217 110.3 Z" fill="none" stroke="#000" stroke-width="4.8" stroke-linejoin="round" stroke-linecap="round"/></svg></div>
<span class="t" style="left:785.0px;top:529.8px;font-size:23px;line-height:23px;color:#3f97f6;letter-spacing:0.658px;-webkit-text-stroke:0.55px #3f97f6;">upperClothing - 5 (100)</span>
<div class="tile" style="left:1083px;top:259px"><svg width="300" height="300" viewBox="0 0 300 300"><path d="M90.8 55.2 C94.5 54.2 98.1 52 99 55.8 C100 59.6 96.2 71.3 96.5 77.9 C96.8 84.6 97.7 90.2 100.9 95.6 C104.2 101.1 110 106.5 116.1 110.8 C122.2 115.1 131.6 119 137.6 121.6 C143.6 124.1 146.9 126 152.1 126 C157.4 126 163.2 124.1 169.2 121.6 C175.2 119 182.7 115.1 188.2 110.8 C193.7 106.5 199.1 101.1 202.1 95.6 C205 90.2 206.4 84 205.9 77.9 C205.4 71.8 198.3 62.8 199.3 59 C200.4 55.1 206.3 53.2 212.2 54.9 C218.2 56.6 229.1 63.1 235 69.1 C240.9 75 245.3 84.5 247.6 90.6 C250 96.7 249.8 101.1 249.1 105.8 C248.5 110.4 243 110.4 243.8 118.4 C244.6 126.4 250.3 144.5 253.9 153.8 C257.6 163.1 264.9 168.1 266 174 C267 179.9 265.4 183.5 260.3 189.2 C255.1 194.9 244.5 202.7 235 208.2 C225.5 213.7 212 218.5 203.4 222.1 C194.7 225.7 187.7 228.8 183.1 229.7 C178.6 230.5 177.8 231.4 176.2 227.2 C174.6 222.9 174.3 212.4 173.6 204.4 C173 196.4 176 184.2 172.4 179.1 C168.8 174 158.6 174 152.1 174 C145.7 174 137.3 174 133.8 179.1 C130.3 184.2 132.2 196.4 131.3 204.4 C130.3 212.4 129.8 222.9 128.1 227.2 C126.4 231.4 125.7 230.5 121.2 229.7 C116.6 228.8 107.9 224.6 100.9 222.1 C94 219.6 85.8 218.5 79.4 214.5 C73.1 210.5 66.8 205 63 198.1 C59.2 191.1 58.9 180.2 56.7 172.8 C54.5 165.4 50.8 159.1 49.7 153.8 C48.7 148.5 49.8 147.5 50.3 141.2 C50.9 134.8 52.8 124.3 53.1 115.9 C53.4 107.4 50.8 97.7 52.2 90.6 C53.7 83.4 57.6 77.7 61.7 72.9 C65.8 68 72.1 64.4 76.9 61.5 C81.8 58.5 87.1 56.1 90.8 55.2 Z" fill="#64a07c" stroke="#000" stroke-width="4.4" stroke-linejoin="round" stroke-linecap="round"/><clipPath id="gt"><path d="M90.8 55.2 C94.5 54.2 98.1 52 99 55.8 C100 59.6 96.2 71.3 96.5 77.9 C96.8 84.6 97.7 90.2 100.9 95.6 C104.2 101.1 110 106.5 116.1 110.8 C122.2 115.1 131.6 119 137.6 121.6 C143.6 124.1 146.9 126 152.1 126 C157.4 126 163.2 124.1 169.2 121.6 C175.2 119 182.7 115.1 188.2 110.8 C193.7 106.5 199.1 101.1 202.1 95.6 C205 90.2 206.4 84 205.9 77.9 C205.4 71.8 198.3 62.8 199.3 59 C200.4 55.1 206.3 53.2 212.2 54.9 C218.2 56.6 229.1 63.1 235 69.1 C240.9 75 245.3 84.5 247.6 90.6 C250 96.7 249.8 101.1 249.1 105.8 C248.5 110.4 243 110.4 243.8 118.4 C244.6 126.4 250.3 144.5 253.9 153.8 C257.6 163.1 264.9 168.1 266 174 C267 179.9 265.4 183.5 260.3 189.2 C255.1 194.9 244.5 202.7 235 208.2 C225.5 213.7 212 218.5 203.4 222.1 C194.7 225.7 187.7 228.8 183.1 229.7 C178.6 230.5 177.8 231.4 176.2 227.2 C174.6 222.9 174.3 212.4 173.6 204.4 C173 196.4 176 184.2 172.4 179.1 C168.8 174 158.6 174 152.1 174 C145.7 174 137.3 174 133.8 179.1 C130.3 184.2 132.2 196.4 131.3 204.4 C130.3 212.4 129.8 222.9 128.1 227.2 C126.4 231.4 125.7 230.5 121.2 229.7 C116.6 228.8 107.9 224.6 100.9 222.1 C94 219.6 85.8 218.5 79.4 214.5 C73.1 210.5 66.8 205 63 198.1 C59.2 191.1 58.9 180.2 56.7 172.8 C54.5 165.4 50.8 159.1 49.7 153.8 C48.7 148.5 49.8 147.5 50.3 141.2 C50.9 134.8 52.8 124.3 53.1 115.9 C53.4 107.4 50.8 97.7 52.2 90.6 C53.7 83.4 57.6 77.7 61.7 72.9 C65.8 68 72.1 64.4 76.9 61.5 C81.8 58.5 87.1 56.1 90.8 55.2 Z"/></clipPath><g clip-path="url(#gt)"><path d="M207.2 55.2 C215.6 51.4 249.3 34.5 260.3 55.2 C271.2 75.8 277.1 152.1 272.9 179.1 C268.7 206.1 250.8 207.3 235 217 C219.2 226.7 187.8 242.5 178.1 237.3 C168.4 232 175.1 199.3 176.8 185.4 C178.5 171.5 182.7 163.3 188.2 153.8 C193.7 144.3 203.1 135.7 209.7 128.5 C216.2 121.4 225.3 117.1 227.4 110.8 C229.5 104.5 225.3 96.1 222.3 90.6 C219.4 85.1 212.2 83.8 209.7 77.9 C207.2 72 198.7 59 207.2 55.2 Z" fill="#7bc7a0"/><path d="M176.8 185.4 C176.8 180.6 181 177.2 184.4 174 C187.8 170.9 191.6 166 197 166.5 C202.5 166.9 210.9 174 217.3 176.6 C223.6 179.1 235 178 235 181.6 C235 185.2 225.7 194.5 217.3 198.1 C208.8 201.7 191.1 205.2 184.4 203.1 C177.6 201 176.8 190.3 176.8 185.4 Z" fill="#64a07c"/><path d="M207.2 57.7 C209.3 56 228.6 65.7 235 71.6 C241.3 77.5 243.8 86.6 245.1 93.1 C246.4 99.6 244.2 109.5 242.6 110.8 C240.9 112.1 238.3 105.5 235 100.7 C231.6 95.9 227 88.9 222.3 81.7 C217.7 74.6 205 59.4 207.2 57.7 Z" fill="#a5d8ba"/><path d="M227.4 204.4 C228.4 200.2 241.5 184.2 247.6 179.1 C253.7 174 261.9 172.1 264.1 174 C266.2 175.9 264.1 185.4 260.3 190.5 C256.5 195.5 246.8 202.1 241.3 204.4 C235.8 206.7 226.3 208.6 227.4 204.4 Z" fill="#a5d8ba"/><path d="M75.6 64 C77.3 60.9 93.1 54.1 95.9 56.4 C98.6 58.8 93.8 74.8 92.1 77.9 C90.4 81.1 88.5 77.7 85.8 75.4 C83 73.1 74 67.2 75.6 64 Z" fill="#a5d8ba"/><path d="M95.9 77.9 C97.6 80.5 97.6 90.2 100.9 95.6 C104.3 101.1 110 106.5 116.1 110.8 C122.2 115.1 134.7 118.8 137.6 121.6 C140.6 124.3 137.8 128 133.8 127.3 C129.8 126.5 119.9 121.8 113.6 117.1 C107.3 112.5 99.7 105.5 95.9 99.4 C92.1 93.3 90.8 84 90.8 80.5 C90.8 76.9 94.2 75.4 95.9 77.9 Z" fill="#7bc7a0"/><path d="M57.9 81.7 C56.9 78.4 63.8 69.7 70.6 72.9 C77.3 76 90.8 92.7 98.4 100.7 C106 108.7 115.5 118.4 116.1 120.9 C116.7 123.5 108.7 120.5 102.2 115.9 C95.7 111.2 84.3 98.8 76.9 93.1 C69.5 87.4 59 85.1 57.9 81.7 Z" fill="#7bc7a0"/><path d="M116.1 161.4 C115.5 158.9 118.6 173.4 121.2 176.6 C123.7 179.7 129.8 171.9 131.3 180.4 C132.8 188.8 131.7 219.4 130 227.2 C128.3 235 122 233.1 121.2 227.2 C120.3 221.3 125.8 202.7 125 191.7 C124.1 180.8 116.7 163.9 116.1 161.4 Z" fill="#7bc7a0"/></g><path d="M90.8 55.2 C94.5 54.2 98.1 52 99 55.8 C100 59.6 96.2 71.3 96.5 77.9 C96.8 84.6 97.7 90.2 100.9 95.6 C104.2 101.1 110 106.5 116.1 110.8 C122.2 115.1 131.6 119 137.6 121.6 C143.6 124.1 146.9 126 152.1 126 C157.4 126 163.2 124.1 169.2 121.6 C175.2 119 182.7 115.1 188.2 110.8 C193.7 106.5 199.1 101.1 202.1 95.6 C205 90.2 206.4 84 205.9 77.9 C205.4 71.8 198.3 62.8 199.3 59 C200.4 55.1 206.3 53.2 212.2 54.9 C218.2 56.6 229.1 63.1 235 69.1 C240.9 75 245.3 84.5 247.6 90.6 C250 96.7 249.8 101.1 249.1 105.8 C248.5 110.4 243 110.4 243.8 118.4 C244.6 126.4 250.3 144.5 253.9 153.8 C257.6 163.1 264.9 168.1 266 174 C267 179.9 265.4 183.5 260.3 189.2 C255.1 194.9 244.5 202.7 235 208.2 C225.5 213.7 212 218.5 203.4 222.1 C194.7 225.7 187.7 228.8 183.1 229.7 C178.6 230.5 177.8 231.4 176.2 227.2 C174.6 222.9 174.3 212.4 173.6 204.4 C173 196.4 176 184.2 172.4 179.1 C168.8 174 158.6 174 152.1 174 C145.7 174 137.3 174 133.8 179.1 C130.3 184.2 132.2 196.4 131.3 204.4 C130.3 212.4 129.8 222.9 128.1 227.2 C126.4 231.4 125.7 230.5 121.2 229.7 C116.6 228.8 107.9 224.6 100.9 222.1 C94 219.6 85.8 218.5 79.4 214.5 C73.1 210.5 66.8 205 63 198.1 C59.2 191.1 58.9 180.2 56.7 172.8 C54.5 165.4 50.8 159.1 49.7 153.8 C48.7 148.5 49.8 147.5 50.3 141.2 C50.9 134.8 52.8 124.3 53.1 115.9 C53.4 107.4 50.8 97.7 52.2 90.6 C53.7 83.4 57.6 77.7 61.7 72.9 C65.8 68 72.1 64.4 76.9 61.5 C81.8 58.5 87.1 56.1 90.8 55.2 Z" fill="none" stroke="#000" stroke-width="4.4" stroke-linejoin="round" stroke-linecap="round"/><path d="M51.7 116.7 C51.9 118.7 53.5 123.9 56.5 127.2 C59.6 130.5 65 134.3 69.9 136.4 C74.7 138.5 80.9 139.3 85.6 139.9 C90.2 140.5 95.7 140.2 97.7 140 C99.8 139.8 99.8 139 97.8 138.5 C95.8 138.1 90.4 138.3 86 137.4 C81.5 136.5 75.7 135.4 71.3 133.2 C66.9 131.1 62 127.8 59.3 124.7 C56.7 121.7 56.6 116.4 55.3 115.1 C54.1 113.7 51.5 114.6 51.7 116.7 Z" fill="#000"/><path d="M58.6 139.9 C59.6 143.3 59.3 147.6 61.7 150 C64.2 152.4 69.2 153.9 73.1 154.4 C77 155 81.1 153.6 85.1 153.2" fill="none" stroke="#000" stroke-width="1.8" stroke-linejoin="round" stroke-linecap="round"/><path d="M85.1 153.2 C86.4 157.2 86.5 162.4 88.9 165.2 C91.3 167.9 95.3 170.1 99.7 169.6 C104 169.1 109.8 164.6 114.8 162" fill="none" stroke="#000" stroke-width="1.8" stroke-linejoin="round" stroke-linecap="round"/><path d="M114.8 162 C116.1 166.5 116.9 172.1 118.6 175.3 C120.3 178.5 122.7 180 125 181 C127.2 181.9 129.6 181 131.9 181" fill="none" stroke="#000" stroke-width="1.8" stroke-linejoin="round" stroke-linecap="round"/><path d="M72.5 174 C74.4 178.3 75.3 184.2 78.2 186.7 C81 189.2 85.4 189.5 89.5 189.2 C93.7 188.9 98.4 186.3 102.8 184.8" fill="none" stroke="#000" stroke-width="1.8" stroke-linejoin="round" stroke-linecap="round"/><path d="M102.8 184.8 C104.3 189.6 105 196.3 107.3 199.3 C109.5 202.4 112.8 203.4 116.1 203.1 C119.4 202.8 123.3 199.3 126.9 197.4" fill="none" stroke="#000" stroke-width="1.8" stroke-linejoin="round" stroke-linecap="round"/><path d="M246.4 150 C242.6 151.5 238.9 153.7 235 154.4 C231.1 155.2 227 154.4 223 154.4" fill="none" stroke="#000" stroke-width="1.8" stroke-linejoin="round" stroke-linecap="round"/><path d="M223 154.4 C221.9 158.4 222 163.8 219.8 166.5 C217.6 169.1 214.2 170.9 209.7 170.2 C205.2 169.6 198.3 165 192.6 162.4" fill="none" stroke="#000" stroke-width="1.8" stroke-linejoin="round" stroke-linecap="round"/><path d="M192.6 162.4 C191.3 166.7 190.6 172.3 188.8 175.3 C187 178.3 184.2 179.6 181.9 180.4 C179.5 181.1 177.2 179.9 174.9 179.7" fill="none" stroke="#000" stroke-width="1.8" stroke-linejoin="round" stroke-linecap="round"/><path d="M255.2 169 C251.4 170.7 247.7 173 243.8 174 C240 175.1 236.1 174.7 232.2 175.1" fill="none" stroke="#000" stroke-width="1.8" stroke-linejoin="round" stroke-linecap="round"/><path d="M232.2 175.1 C231 178.9 231.1 184.2 228.6 186.7 C226.2 189.2 221.7 190.1 217.3 189.8 C212.8 189.6 207 186.7 201.8 185.2" fill="none" stroke="#000" stroke-width="1.8" stroke-linejoin="round" stroke-linecap="round"/><path d="M201.8 185.2 C200.2 189.9 199.3 196.3 197 199.3 C194.8 202.3 191.3 203.5 188.2 203.1 C185 202.7 181.4 198.9 178.1 196.8" fill="none" stroke="#000" stroke-width="1.8" stroke-linejoin="round" stroke-linecap="round"/><path d="M144.6 138 L141.4 137.4 L125 152.5 L125 170.2 L131.3 170.2 L131.3 177.2 L151.5 180.6 L171.7 177.2 L171.7 170.2 L180.6 170.2 L180.6 152.5 L165.4 134.2 L160.4 139.9 Z" fill="#e8cda6" stroke="#000" stroke-width="4.2" stroke-linejoin="round" stroke-linecap="round"/><path d="M144.6 141.2 L127.7 174 L134.8 174 Z" fill="#bfa684"/><path d="M151.5 141.2 L144.2 177.8 L151.3 177.8 Z" fill="#bfa684"/><path d="M159.1 141.2 L160.6 176.6 L167.7 176.6 Z" fill="#bfa684"/><path d="M164.2 139.9 L172 167.7 L179.1 167.7 Z" fill="#bfa684"/><path d="M144.6 138 L141.4 137.4 L125 152.5 L125 170.2 L131.3 170.2 L131.3 177.2 L151.5 180.6 L171.7 177.2 L171.7 170.2 L180.6 170.2 L180.6 152.5 L165.4 134.2 L160.4 139.9 Z" fill="none" stroke="#000" stroke-width="4.2" stroke-linejoin="round" stroke-linecap="round"/><path d="M152.1 103.9 L170.5 126 L160.4 139.9 L144.6 139.9 L135.7 126 Z" fill="#e8cda6" stroke="#000" stroke-width="4.2" stroke-linejoin="round" stroke-linecap="round"/><path d="M147.7 123.5 L157.2 123.5 L160.4 131 L152.8 136.1 L144.6 131 Z" fill="#bfa684"/><path d="M152.8 108.3 L160.4 117.1 L155.9 120.9 Z" fill="#f3e2c8"/><path d="M45.3 153.8 L40.9 161.4 L57.9 182.9 L59.2 209.4 L76.3 215.1 L68.1 182.9 L51.6 160.1 Z" fill="#e8cda6" stroke="#000" stroke-width="4.2" stroke-linejoin="round" stroke-linecap="round"/><path d="M46.6 165.2 L60.5 182.9 L61.7 208.2 L65.5 209.4 L63 182.9 Z" fill="#bfa684"/><path d="M36.4 174 L32.6 179.1 L36.4 199.3 L51 204.4 L51.6 189.2 L40.2 175.3 Z" fill="#e8cda6" stroke="#000" stroke-width="4.2" stroke-linejoin="round" stroke-linecap="round"/><path d="M36.4 180.4 L44 189.2 L42.8 200.6 L37.7 198.1 Z" fill="#bfa684"/></svg></div>
<span class="t" style="left:1108.5px;top:529.8px;font-size:23px;line-height:23px;color:#3f97f6;letter-spacing:0.599px;-webkit-text-stroke:0.55px #3f97f6;">upperClothing - 4 (110)</span>
<div class="tile" style="left:117px;top:579px"><svg width="300" height="300" viewBox="0 0 300 300"><path d="M59 111 C54.3 111.9 48.3 116.3 44.8 121.3 C41.4 126.4 38.5 134.5 38.3 141.4 C38.1 148.3 40 157.6 43.6 162.7 C47.3 167.8 53.1 170.2 60.2 172.1 C67.3 174.1 77.1 175.1 86.2 174.5 C95.2 173.9 105.8 170.8 114.5 168.6 C123.2 166.4 132.5 163.7 138.1 161.5 C143.7 159.3 146.4 158 148.2 155.6 C150 153.2 149.5 150.7 149 147.3 C148.5 144 149 140.2 145.2 135.5 C141.4 130.8 132.2 121.7 126.3 119 C120.4 116.2 113.7 120.5 109.8 119 C105.8 117.5 106.6 111.8 102.7 110.1 C98.8 108.5 91.1 108.1 86.2 108.9 C81.2 109.8 77.7 115.1 73.2 115.4 C68.6 115.8 63.7 110 59 111 Z" fill="#54939a" stroke="#000" stroke-width="4.5" stroke-linejoin="round" stroke-linecap="round"/><path d="M149.9 147.3 C150.4 144 149.9 140.2 153.5 135.5 C157 130.8 165.3 121.7 171.2 119 C177.1 116.2 184.6 120.5 188.9 119 C193.3 117.5 193.1 111.8 197.2 110.1 C201.3 108.5 208.8 108.1 213.7 108.9 C218.7 109.8 222.6 115.2 226.7 115.4 C230.9 115.6 234 109.1 238.5 110.1 C243.1 111.1 250.4 116.1 253.9 121.3 C257.4 126.6 259.6 134.5 259.8 141.4 C260 148.3 258.6 157.6 255.1 162.7 C251.5 167.8 245.4 170.2 238.5 172.1 C231.7 174.1 222.6 175.1 213.7 174.5 C204.9 173.9 194.1 170.8 185.4 168.6 C176.7 166.4 167.6 163.7 161.8 161.5 C156 159.3 152.5 158 150.5 155.6 C148.6 153.2 149.5 150.7 149.9 147.3 Z" fill="#4a8589" stroke="#000" stroke-width="4.5" stroke-linejoin="round" stroke-linecap="round"/><clipPath id="tb1"><path d="M59 111 C54.3 111.9 48.3 116.3 44.8 121.3 C41.4 126.4 38.5 134.5 38.3 141.4 C38.1 148.3 40 157.6 43.6 162.7 C47.3 167.8 53.1 170.2 60.2 172.1 C67.3 174.1 77.1 175.1 86.2 174.5 C95.2 173.9 105.8 170.8 114.5 168.6 C123.2 166.4 132.5 163.7 138.1 161.5 C143.7 159.3 146.4 158 148.2 155.6 C150 153.2 149.5 150.7 149 147.3 C148.5 144 149 140.2 145.2 135.5 C141.4 130.8 132.2 121.7 126.3 119 C120.4 116.2 113.7 120.5 109.8 119 C105.8 117.5 106.6 111.8 102.7 110.1 C98.8 108.5 91.1 108.1 86.2 108.9 C81.2 109.8 77.7 115.1 73.2 115.4 C68.6 115.8 63.7 110 59 111 Z"/></clipPath><clipPath id="tb2"><path d="M149.9 147.3 C150.4 144 149.9 140.2 153.5 135.5 C157 130.8 165.3 121.7 171.2 119 C177.1 116.2 184.6 120.5 188.9 119 C193.3 117.5 193.1 111.8 197.2 110.1 C201.3 108.5 208.8 108.1 213.7 108.9 C218.7 109.8 222.6 115.2 226.7 115.4 C230.9 115.6 234 109.1 238.5 110.1 C243.1 111.1 250.4 116.1 253.9 121.3 C257.4 126.6 259.6 134.5 259.8 141.4 C260 148.3 258.6 157.6 255.1 162.7 C251.5 167.8 245.4 170.2 238.5 172.1 C231.7 174.1 222.6 175.1 213.7 174.5 C204.9 173.9 194.1 170.8 185.4 168.6 C176.7 166.4 167.6 163.7 161.8 161.5 C156 159.3 152.5 158 150.5 155.6 C148.6 153.2 149.5 150.7 149.9 147.3 Z"/></clipPath><g clip-path="url(#tb1)"><path d="M37.7 115.4 C41.3 104.8 56.2 110.1 59 113.1 C61.7 116 52.9 126.9 54.3 133.2 C55.6 139.5 58.2 145.2 67.3 150.9 C76.3 156.6 102.7 163.1 108.6 167.4 C114.5 171.8 114.5 175.3 102.7 176.9 C90.9 178.4 48.5 187.1 37.7 176.9 C26.9 166.6 34.2 126.1 37.7 115.4 Z" fill="#4a8589"/><path d="M96.2 127.3 C95.8 124.6 98.7 124.1 102.7 125.5 C106.7 126.9 116.4 131.5 120.4 135.5 C124.4 139.6 126.3 146.1 126.9 149.7 C127.5 153.3 126 156.4 124 157.4 C121.9 158.4 117.7 158.3 114.5 155.6 C111.4 152.9 108.1 146.2 105.1 141.4 C102 136.7 96.6 129.9 96.2 127.3 Z" fill="#7aabab"/></g><g clip-path="url(#tb2)"><path d="M197.2 124.9 C199.2 121.3 215.7 115 226.7 115.4 C237.8 115.8 257.3 117.4 263.4 127.3 C269.5 137.1 272.4 166.2 263.4 174.5 C254.3 182.8 216.3 180.4 209 176.9 C201.7 173.3 218.7 159.9 219.6 153.2 C220.6 146.5 218.7 141.4 214.9 136.7 C211.2 132 195.2 128.4 197.2 124.9 Z" fill="#54939a"/><path d="M225 123.7 C224 119 227.6 114.5 232.6 115.4 C237.7 116.4 251 124.1 255.1 129.6 C259.2 135.1 258.4 144.6 257.4 148.5 C256.5 152.5 252.3 154 249.2 153.2 C246 152.5 242.6 148.7 238.5 143.8 C234.5 138.9 225.9 128.4 225 123.7 Z" fill="#7aabab"/></g><path d="M59 111 C54.3 111.9 48.3 116.3 44.8 121.3 C41.4 126.4 38.5 134.5 38.3 141.4 C38.1 148.3 40 157.6 43.6 162.7 C47.3 167.8 53.1 170.2 60.2 172.1 C67.3 174.1 77.1 175.1 86.2 174.5 C95.2 173.9 105.8 170.8 114.5 168.6 C123.2 166.4 132.5 163.7 138.1 161.5 C143.7 159.3 146.4 158 148.2 155.6 C150 153.2 149.5 150.7 149 147.3 C148.5 144 149 140.2 145.2 135.5 C141.4 130.8 132.2 121.7 126.3 119 C120.4 116.2 113.7 120.5 109.8 119 C105.8 117.5 106.6 111.8 102.7 110.1 C98.8 108.5 91.1 108.1 86.2 108.9 C81.2 109.8 77.7 115.1 73.2 115.4 C68.6 115.8 63.7 110 59 111 Z" fill="none" stroke="#000" stroke-width="4.5" stroke-linejoin="round" stroke-linecap="round"/><path d="M149.9 147.3 C150.4 144 149.9 140.2 153.5 135.5 C157 130.8 165.3 121.7 171.2 119 C177.1 116.2 184.6 120.5 188.9 119 C193.3 117.5 193.1 111.8 197.2 110.1 C201.3 108.5 208.8 108.1 213.7 108.9 C218.7 109.8 222.6 115.2 226.7 115.4 C230.9 115.6 234 109.1 238.5 110.1 C243.1 111.1 250.4 116.1 253.9 121.3 C257.4 126.6 259.6 134.5 259.8 141.4 C260 148.3 258.6 157.6 255.1 162.7 C251.5 167.8 245.4 170.2 238.5 172.1 C231.7 174.1 222.6 175.1 213.7 174.5 C204.9 173.9 194.1 170.8 185.4 168.6 C176.7 166.4 167.6 163.7 161.8 161.5 C156 159.3 152.5 158 150.5 155.6 C148.6 153.2 149.5 150.7 149.9 147.3 Z" fill="none" stroke="#000" stroke-width="4.5" stroke-linejoin="round" stroke-linecap="round"/><path d="M144 135.5 L154.7 135.5 L149 148.5 Z" fill="#000"/><circle cx="63.7" cy="108.9" r="3.9" fill="#f0bf73" stroke="#000" stroke-width="1.9"/><circle cx="68.3" cy="112.4" r="3.9" fill="#f0bf73" stroke="#000" stroke-width="1.9"/><circle cx="72.8" cy="115.8" r="3.9" fill="#f0bf73" stroke="#000" stroke-width="1.9"/><circle cx="78" cy="113.8" r="3.9" fill="#f0bf73" stroke="#000" stroke-width="1.9"/><circle cx="83.1" cy="111.5" r="3.9" fill="#f0bf73" stroke="#000" stroke-width="1.9"/><circle cx="88.4" cy="109.5" r="3.9" fill="#f0bf73" stroke="#000" stroke-width="1.9"/><circle cx="94.1" cy="109.5" r="3.9" fill="#f0bf73" stroke="#000" stroke-width="1.9"/><circle cx="99.6" cy="110" r="3.9" fill="#f0bf73" stroke="#000" stroke-width="1.9"/><circle cx="103.7" cy="114" r="3.9" fill="#f0bf73" stroke="#000" stroke-width="1.9"/><circle cx="107.7" cy="118.1" r="3.9" fill="#f0bf73" stroke="#000" stroke-width="1.9"/><circle cx="113" cy="118.3" r="3.9" fill="#f0bf73" stroke="#000" stroke-width="1.9"/><circle cx="118.6" cy="117.5" r="3.9" fill="#f0bf73" stroke="#000" stroke-width="1.9"/><circle cx="123.7" cy="119.3" r="3.9" fill="#f0bf73" stroke="#000" stroke-width="1.9"/><circle cx="128.5" cy="122.3" r="3.9" fill="#f0bf73" stroke="#000" stroke-width="1.9"/><circle cx="133.3" cy="125.4" r="3.9" fill="#f0bf73" stroke="#000" stroke-width="1.9"/><circle cx="137.2" cy="129.5" r="3.9" fill="#f0bf73" stroke="#000" stroke-width="1.9"/><circle cx="141.1" cy="133.7" r="3.9" fill="#f0bf73" stroke="#000" stroke-width="1.9"/><circle cx="234.4" cy="108.9" r="3.9" fill="#f0bf73" stroke="#000" stroke-width="1.9"/><circle cx="229.9" cy="112.4" r="3.9" fill="#f0bf73" stroke="#000" stroke-width="1.9"/><circle cx="225.3" cy="115.8" r="3.9" fill="#f0bf73" stroke="#000" stroke-width="1.9"/><circle cx="220.2" cy="113.8" r="3.9" fill="#f0bf73" stroke="#000" stroke-width="1.9"/><circle cx="215" cy="111.5" r="3.9" fill="#f0bf73" stroke="#000" stroke-width="1.9"/><circle cx="209.7" cy="109.5" r="3.9" fill="#f0bf73" stroke="#000" stroke-width="1.9"/><circle cx="204" cy="109.5" r="3.9" fill="#f0bf73" stroke="#000" stroke-width="1.9"/><circle cx="198.5" cy="110" r="3.9" fill="#f0bf73" stroke="#000" stroke-width="1.9"/><circle cx="194.5" cy="114" r="3.9" fill="#f0bf73" stroke="#000" stroke-width="1.9"/><circle cx="190.4" cy="118.1" r="3.9" fill="#f0bf73" stroke="#000" stroke-width="1.9"/><circle cx="185.2" cy="118.3" r="3.9" fill="#f0bf73" stroke="#000" stroke-width="1.9"/><circle cx="179.5" cy="117.5" r="3.9" fill="#f0bf73" stroke="#000" stroke-width="1.9"/><circle cx="174.4" cy="119.3" r="3.9" fill="#f0bf73" stroke="#000" stroke-width="1.9"/><circle cx="169.6" cy="122.3" r="3.9" fill="#f0bf73" stroke="#000" stroke-width="1.9"/><circle cx="164.8" cy="125.4" r="3.9" fill="#f0bf73" stroke="#000" stroke-width="1.9"/><circle cx="160.9" cy="129.5" r="3.9" fill="#f0bf73" stroke="#000" stroke-width="1.9"/><circle cx="157" cy="133.7" r="3.9" fill="#f0bf73" stroke="#000" stroke-width="1.9"/><circle cx="142.9" cy="163.3" r="3.9" fill="#f0bf73" stroke="#000" stroke-width="1.9"/><circle cx="139.2" cy="167.6" r="3.9" fill="#f0bf73" stroke="#000" stroke-width="1.9"/><circle cx="135.5" cy="172" r="3.9" fill="#f0bf73" stroke="#000" stroke-width="1.9"/><circle cx="131.2" cy="175.6" r="3.9" fill="#f0bf73" stroke="#000" stroke-width="1.9"/><circle cx="126.1" cy="178.1" r="3.9" fill="#f0bf73" stroke="#000" stroke-width="1.9"/><circle cx="121" cy="180.7" r="3.9" fill="#f0bf73" stroke="#000" stroke-width="1.9"/><circle cx="115.4" cy="180.8" r="3.9" fill="#f0bf73" stroke="#000" stroke-width="1.9"/><circle cx="109.7" cy="180.5" r="3.9" fill="#f0bf73" stroke="#000" stroke-width="1.9"/><circle cx="105.2" cy="183.5" r="3.9" fill="#f0bf73" stroke="#000" stroke-width="1.9"/><circle cx="100.9" cy="187.1" r="3.9" fill="#f0bf73" stroke="#000" stroke-width="1.9"/><circle cx="95.3" cy="188.5" r="3.9" fill="#f0bf73" stroke="#000" stroke-width="1.9"/><circle cx="89.8" cy="189.8" r="3.9" fill="#f0bf73" stroke="#000" stroke-width="1.9"/><circle cx="84.4" cy="188" r="3.9" fill="#f0bf73" stroke="#000" stroke-width="1.9"/><circle cx="79.1" cy="186.1" r="3.9" fill="#f0bf73" stroke="#000" stroke-width="1.9"/><circle cx="73.7" cy="184.2" r="3.9" fill="#f0bf73" stroke="#000" stroke-width="1.9"/><circle cx="68.9" cy="186.9" r="3.9" fill="#f0bf73" stroke="#000" stroke-width="1.9"/><circle cx="64.2" cy="190.1" r="3.9" fill="#f0bf73" stroke="#000" stroke-width="1.9"/><circle cx="58.8" cy="189.2" r="3.9" fill="#f0bf73" stroke="#000" stroke-width="1.9"/><circle cx="53.3" cy="187.8" r="3.9" fill="#f0bf73" stroke="#000" stroke-width="1.9"/><circle cx="48.7" cy="184.7" r="3.9" fill="#f0bf73" stroke="#000" stroke-width="1.9"/><circle cx="44.4" cy="180.9" r="3.9" fill="#f0bf73" stroke="#000" stroke-width="1.9"/><circle cx="41.3" cy="176.6" r="3.9" fill="#f0bf73" stroke="#000" stroke-width="1.9"/><circle cx="41.3" cy="170.9" r="3.9" fill="#f0bf73" stroke="#000" stroke-width="1.9"/><circle cx="155.3" cy="163.3" r="3.9" fill="#f0bf73" stroke="#000" stroke-width="1.9"/><circle cx="158.9" cy="167.6" r="3.9" fill="#f0bf73" stroke="#000" stroke-width="1.9"/><circle cx="162.6" cy="172" r="3.9" fill="#f0bf73" stroke="#000" stroke-width="1.9"/><circle cx="166.9" cy="175.6" r="3.9" fill="#f0bf73" stroke="#000" stroke-width="1.9"/><circle cx="172" cy="178.1" r="3.9" fill="#f0bf73" stroke="#000" stroke-width="1.9"/><circle cx="177.1" cy="180.7" r="3.9" fill="#f0bf73" stroke="#000" stroke-width="1.9"/><circle cx="182.7" cy="180.8" r="3.9" fill="#f0bf73" stroke="#000" stroke-width="1.9"/><circle cx="188.4" cy="180.5" r="3.9" fill="#f0bf73" stroke="#000" stroke-width="1.9"/><circle cx="192.9" cy="183.5" r="3.9" fill="#f0bf73" stroke="#000" stroke-width="1.9"/><circle cx="197.2" cy="187.1" r="3.9" fill="#f0bf73" stroke="#000" stroke-width="1.9"/><circle cx="202.8" cy="188.5" r="3.9" fill="#f0bf73" stroke="#000" stroke-width="1.9"/><circle cx="208.3" cy="189.8" r="3.9" fill="#f0bf73" stroke="#000" stroke-width="1.9"/><circle cx="213.7" cy="188" r="3.9" fill="#f0bf73" stroke="#000" stroke-width="1.9"/><circle cx="219" cy="186.1" r="3.9" fill="#f0bf73" stroke="#000" stroke-width="1.9"/><circle cx="224.4" cy="184.2" r="3.9" fill="#f0bf73" stroke="#000" stroke-width="1.9"/><circle cx="229.2" cy="186.9" r="3.9" fill="#f0bf73" stroke="#000" stroke-width="1.9"/><circle cx="233.9" cy="190.1" r="3.9" fill="#f0bf73" stroke="#000" stroke-width="1.9"/><circle cx="238.8" cy="188" r="3.9" fill="#f0bf73" stroke="#000" stroke-width="1.9"/><circle cx="243.8" cy="185.3" r="3.9" fill="#f0bf73" stroke="#000" stroke-width="1.9"/><circle cx="248.3" cy="181.8" r="3.9" fill="#f0bf73" stroke="#000" stroke-width="1.9"/><circle cx="252.2" cy="177.6" r="3.9" fill="#f0bf73" stroke="#000" stroke-width="1.9"/><circle cx="255" cy="173.1" r="3.9" fill="#f0bf73" stroke="#000" stroke-width="1.9"/><circle cx="148.8" cy="156.2" r="4.4" fill="#f0bf73" stroke="#000" stroke-width="1.9"/></svg></div>
<span class="t" style="left:140.5px;top:849.8px;font-size:23px;line-height:23px;color:#3f97f6;letter-spacing:0.703px;-webkit-text-stroke:0.55px #3f97f6;">upperClothing - 3 (100)</span>
<div class="tile" style="left:439px;top:579px"><svg width="300" height="300" viewBox="0 0 300 300"><path d="M96.8 111.9 C88.3 109.3 80.1 108.3 73.2 107.7 C66.3 107.2 60.1 107.2 55.4 108.7 C50.8 110.1 46.9 113.6 45 116.6 C43.2 119.6 43.2 123.5 44.2 126.6 C45.2 129.8 48.7 132.5 51 135.5 C47.1 137.3 41.6 138.1 39.5 140.8 C37.4 143.5 37.3 148.1 38.3 151.4 C39.3 154.8 41.9 159.1 45.4 160.9 C48.9 162.7 54.8 161.8 59.6 162.3 C59.6 163.8 59.6 165.3 59.6 166.8 C54.8 168 48 167.8 45.4 170.3 C42.8 172.9 42.2 178.6 44.2 182.1 C46.3 185.6 52 189.5 57.8 191.4 C63.6 193.2 71.6 193.5 79.1 193.4 C86.5 193.2 94.8 192.7 102.7 190.4 C110.6 188.1 120 183.9 126.3 179.8 C132.6 175.6 137.3 170.3 140.5 165.6 C143.6 160.9 145.4 156.2 145.2 151.4 C145 146.7 142.9 142 139.3 137.3 C135.8 132.5 131 127.3 124 123.1 C116.9 118.8 105.3 114.4 96.8 111.9 Z" fill="#d89fd8" stroke="#000" stroke-width="5.3" stroke-linejoin="round" stroke-linecap="round"/><path d="M199.8 111.9 C208.3 109.3 216.5 108.3 223.4 107.7 C230.3 107.2 236.5 107.2 241.1 108.7 C245.8 110.1 249.7 113.6 251.5 116.6 C253.4 119.6 253.4 123.5 252.4 126.6 C251.4 129.8 247.9 132.5 245.6 135.5 C249.5 137.3 255 138.1 257.1 140.8 C259.2 143.5 259.3 148.1 258.3 151.4 C257.3 154.8 254.7 159.1 251.2 160.9 C247.6 162.7 241.7 161.8 237 162.3 C237 163.8 237 165.3 237 166.8 C241.7 168 248.6 167.8 251.2 170.3 C253.7 172.9 254.4 178.6 252.4 182.1 C250.3 185.6 244.6 189.5 238.8 191.4 C233 193.2 225 193.5 217.5 193.4 C210 193.2 201.8 192.7 193.9 190.4 C186 188.1 176.6 183.9 170.3 179.8 C164 175.6 159.2 170.3 156.1 165.6 C152.9 160.9 151.2 156.2 151.4 151.4 C151.6 146.7 153.7 142 157.3 137.3 C160.8 132.5 165.5 127.3 172.6 123.1 C179.7 118.8 191.3 114.4 199.8 111.9 Z" fill="#d89fd8" stroke="#000" stroke-width="5.3" stroke-linejoin="round" stroke-linecap="round"/><clipPath id="ps1"><path d="M96.8 111.9 C88.3 109.3 80.1 108.3 73.2 107.7 C66.3 107.2 60.1 107.2 55.4 108.7 C50.8 110.1 46.9 113.6 45 116.6 C43.2 119.6 43.2 123.5 44.2 126.6 C45.2 129.8 48.7 132.5 51 135.5 C47.1 137.3 41.6 138.1 39.5 140.8 C37.4 143.5 37.3 148.1 38.3 151.4 C39.3 154.8 41.9 159.1 45.4 160.9 C48.9 162.7 54.8 161.8 59.6 162.3 C59.6 163.8 59.6 165.3 59.6 166.8 C54.8 168 48 167.8 45.4 170.3 C42.8 172.9 42.2 178.6 44.2 182.1 C46.3 185.6 52 189.5 57.8 191.4 C63.6 193.2 71.6 193.5 79.1 193.4 C86.5 193.2 94.8 192.7 102.7 190.4 C110.6 188.1 120 183.9 126.3 179.8 C132.6 175.6 137.3 170.3 140.5 165.6 C143.6 160.9 145.4 156.2 145.2 151.4 C145 146.7 142.9 142 139.3 137.3 C135.8 132.5 131 127.3 124 123.1 C116.9 118.8 105.3 114.4 96.8 111.9 Z"/></clipPath><clipPath id="ps2"><path d="M199.8 111.9 C208.3 109.3 216.5 108.3 223.4 107.7 C230.3 107.2 236.5 107.2 241.1 108.7 C245.8 110.1 249.7 113.6 251.5 116.6 C253.4 119.6 253.4 123.5 252.4 126.6 C251.4 129.8 247.9 132.5 245.6 135.5 C249.5 137.3 255 138.1 257.1 140.8 C259.2 143.5 259.3 148.1 258.3 151.4 C257.3 154.8 254.7 159.1 251.2 160.9 C247.6 162.7 241.7 161.8 237 162.3 C237 163.8 237 165.3 237 166.8 C241.7 168 248.6 167.8 251.2 170.3 C253.7 172.9 254.4 178.6 252.4 182.1 C250.3 185.6 244.6 189.5 238.8 191.4 C233 193.2 225 193.5 217.5 193.4 C210 193.2 201.8 192.7 193.9 190.4 C186 188.1 176.6 183.9 170.3 179.8 C164 175.6 159.2 170.3 156.1 165.6 C152.9 160.9 151.2 156.2 151.4 151.4 C151.6 146.7 153.7 142 157.3 137.3 C160.8 132.5 165.5 127.3 172.6 123.1 C179.7 118.8 191.3 114.4 199.8 111.9 Z"/></clipPath><g clip-path="url(#ps1)"><path d="M43.6 113.6 C46.4 109.7 59.6 109.9 62.5 111.3 C65.5 112.6 60 118.4 61.3 121.9 C62.7 125.4 65.5 129.7 70.8 132.5 C76.1 135.4 93.8 137.8 93.2 139 C92.7 140.2 75.1 140.3 67.3 139.6 C59.4 138.9 49.9 139.2 46 134.9 C42.1 130.6 40.9 117.6 43.6 113.6 Z" fill="#b886b8"/><path d="M40.1 142 C40.4 139 43.6 140.2 45.4 142 C47.2 143.8 46.7 150 50.7 152.6 C54.8 155.3 62.1 157 69.6 157.9 C77.1 158.8 96 157.2 95.6 157.9 C95.2 158.6 75.9 161.8 67.3 162.1 C58.6 162.4 48.2 163 43.6 159.7 C39.1 156.4 39.8 144.9 40.1 142 Z" fill="#b886b8"/></g><g clip-path="url(#ps2)"><path d="M200.7 144.9 C201.7 144.3 213.5 142.3 220.8 139.6 C228.1 137 242.5 129.4 244.5 129 C246.4 128.6 237.6 134.9 232.6 137.3 C227.7 139.6 220.2 141.9 214.9 143.2 C209.6 144.4 199.8 145.5 200.7 144.9 Z" fill="#b886b8"/><path d="M200.7 163.8 C203.3 162.7 230.3 160.4 236.2 160.9 C242.1 161.4 234.2 165 236.2 166.8 C238.2 168.6 250.6 171.3 248 171.5 C245.4 171.7 228.7 169.2 220.8 168 C213 166.7 198.2 165 200.7 163.8 Z" fill="#b886b8"/><path d="M197.2 119.5 C197.2 119 217.9 112.8 226.7 112.4 C235.6 112.1 247.4 115.4 250.4 117.2 C253.3 118.9 248.4 123.4 244.5 123.1 C240.5 122.8 234.6 116 226.7 115.4 C218.9 114.8 197.2 120 197.2 119.5 Z" fill="#e6bfea"/><path d="M232.6 139.6 C232.6 138.4 246.6 137.3 250.4 138.4 C254.1 139.6 255.3 143.8 255.1 146.7 C254.9 149.7 250 156.4 249.2 156.2 C248.4 156 253.1 148.3 250.4 145.5 C247.6 142.8 232.6 140.8 232.6 139.6 Z" fill="#e6bfea"/></g><path d="M96.8 111.9 C88.3 109.3 80.1 108.3 73.2 107.7 C66.3 107.2 60.1 107.2 55.4 108.7 C50.8 110.1 46.9 113.6 45 116.6 C43.2 119.6 43.2 123.5 44.2 126.6 C45.2 129.8 48.7 132.5 51 135.5 C47.1 137.3 41.6 138.1 39.5 140.8 C37.4 143.5 37.3 148.1 38.3 151.4 C39.3 154.8 41.9 159.1 45.4 160.9 C48.9 162.7 54.8 161.8 59.6 162.3 C59.6 163.8 59.6 165.3 59.6 166.8 C54.8 168 48 167.8 45.4 170.3 C42.8 172.9 42.2 178.6 44.2 182.1 C46.3 185.6 52 189.5 57.8 191.4 C63.6 193.2 71.6 193.5 79.1 193.4 C86.5 193.2 94.8 192.7 102.7 190.4 C110.6 188.1 120 183.9 126.3 179.8 C132.6 175.6 137.3 170.3 140.5 165.6 C143.6 160.9 145.4 156.2 145.2 151.4 C145 146.7 142.9 142 139.3 137.3 C135.8 132.5 131 127.3 124 123.1 C116.9 118.8 105.3 114.4 96.8 111.9 Z" fill="none" stroke="#000" stroke-width="5.3" stroke-linejoin="round" stroke-linecap="round"/><path d="M199.8 111.9 C208.3 109.3 216.5 108.3 223.4 107.7 C230.3 107.2 236.5 107.2 241.1 108.7 C245.8 110.1 249.7 113.6 251.5 116.6 C253.4 119.6 253.4 123.5 252.4 126.6 C251.4 129.8 247.9 132.5 245.6 135.5 C249.5 137.3 255 138.1 257.1 140.8 C259.2 143.5 259.3 148.1 258.3 151.4 C257.3 154.8 254.7 159.1 251.2 160.9 C247.6 162.7 241.7 161.8 237 162.3 C237 163.8 237 165.3 237 166.8 C241.7 168 248.6 167.8 251.2 170.3 C253.7 172.9 254.4 178.6 252.4 182.1 C250.3 185.6 244.6 189.5 238.8 191.4 C233 193.2 225 193.5 217.5 193.4 C210 193.2 201.8 192.7 193.9 190.4 C186 188.1 176.6 183.9 170.3 179.8 C164 175.6 159.2 170.3 156.1 165.6 C152.9 160.9 151.2 156.2 151.4 151.4 C151.6 146.7 153.7 142 157.3 137.3 C160.8 132.5 165.5 127.3 172.6 123.1 C179.7 118.8 191.3 114.4 199.8 111.9 Z" fill="none" stroke="#000" stroke-width="5.3" stroke-linejoin="round" stroke-linecap="round"/><ellipse cx="235.6" cy="123.1" rx="7" ry="2.4" fill="#f0d4f2" transform="rotate(-22 235.6 123.1)"/><ellipse cx="221.8" cy="129.6" rx="4" ry="1.5" fill="#f0d4f2" transform="rotate(-22 221.8 129.6)"/></svg></div>
<span class="t" style="left:464.4px;top:849.8px;font-size:23px;line-height:23px;color:#3f97f6;letter-spacing:0.535px;-webkit-text-stroke:0.55px #3f97f6;">upperClothing - 1 (100)</span>
<div class="tile" style="left:761px;top:579px"><svg width="300" height="300" viewBox="0 0 300 300"><path d="M42 84.3 L144.4 84.3 L245.6 72 L243.9 77.2 L217.6 112.6 L201.6 114.9 L114.6 133.2 L96.3 114.9 L44.9 93.2 Z" fill="#85e3bf"/><circle cx="72" cy="101.8" r="24" fill="#000"/><circle cx="72" cy="101.8" r="12.2" fill="#cdd0d9"/><circle cx="239.9" cy="101.8" r="24" fill="#000"/><circle cx="239.9" cy="101.8" r="12.2" fill="#e4e7ef"/><path d="M237.9 89.8 A12.2 12.2 0 0 0 234.9 112.8 A20 20 0 0 1 237.9 89.8 Z" fill="#cfd2db"/><path d="M112.4 109.2 C113.9 105.4 114.3 102.4 121.5 100.3 C128.8 98.2 144.4 96.6 155.8 96.6 C167.3 96.6 182.5 98.2 190.1 100.3 C197.8 102.4 200.1 105.2 201.6 109.2 C203.1 113.2 200.8 119.3 199.3 124.1 C197.8 128.8 199.7 135.1 192.4 137.8 C185.2 140.5 168 140.1 155.8 140.1 C143.6 140.1 126.5 140.6 119.2 137.8 C112 134.9 113.5 127.7 112.4 122.9 C111.2 118.1 110.8 113 112.4 109.2 Z" fill="#000"/><path d="M122.4 113.5 C124.8 111.6 133.1 111.1 138.7 110.3 C144.2 109.6 149.9 109.2 155.8 109.2 C161.7 109.2 168.3 109.6 174.1 110.3 C179.9 111.1 188.4 111.9 190.7 113.8 C193 115.7 188.9 119.2 187.9 121.8 C186.8 124.3 189.8 128.8 184.4 129.2 C179.1 129.6 165.4 124.2 155.8 124.1 C146.3 123.9 132.5 128.4 127.2 128.1 C122 127.7 125.2 124.2 124.4 121.8 C123.6 119.3 120 115.4 122.4 113.5 Z" fill="#e0d29c"/><path d="M183.3 119.5 L190.7 113.8 L184.7 129 Z" fill="#f2e3a6"/><path d="M155.8 114.3 C150.5 114.3 144.6 116.5 139.8 118.9 C135 121.3 132.2 122.2 127.2 128.6 C122.3 135 115 147.7 110.1 157.2 C105.1 166.8 99.4 178.2 97.5 185.8 C95.6 193.5 94.6 196.9 98.6 203 C102.6 209.1 112 217.4 121.5 222.4 C131 227.5 144.4 233.3 155.8 233.3 C167.3 233.3 180.6 227.5 190.1 222.4 C199.7 217.4 208.8 209.1 213 203 C217.2 196.9 217.2 193.5 215.3 185.8 C213.4 178.2 206.7 166.8 201.6 157.2 C196.4 147.7 189.4 135 184.4 128.6 C179.5 122.2 176.6 121.3 171.8 118.9 C167.1 116.5 161.2 114.3 155.8 114.3 Z" fill="#000"/><path d="M155.8 126.1 C152 126.1 148.2 127.5 144.4 129.8 C140.6 132.1 137.5 133.6 133 140.1 C128.4 146.6 121 160.5 116.9 168.7 C112.8 176.9 109.1 183.5 108.4 189.3 C107.6 195 108.3 198.4 112.4 203 C116.5 207.6 125.7 213.5 133 216.7 C140.2 220 148.2 222.4 155.8 222.4 C163.5 222.4 171.5 220 178.7 216.7 C186 213.5 195.1 207.6 199.3 203 C203.5 198.4 204.4 195 203.9 189.3 C203.3 183.5 200.1 176.9 195.9 168.7 C191.7 160.5 183.5 146.6 178.7 140.1 C173.9 133.6 171.1 132.1 167.3 129.8 C163.5 127.5 159.6 126.1 155.8 126.1 Z" fill="#faf1d6"/><clipPath id="sn"><path d="M155.8 126.1 C152 126.1 148.2 127.5 144.4 129.8 C140.6 132.1 137.5 133.6 133 140.1 C128.4 146.6 121 160.5 116.9 168.7 C112.8 176.9 109.1 183.5 108.4 189.3 C107.6 195 108.3 198.4 112.4 203 C116.5 207.6 125.7 213.5 133 216.7 C140.2 220 148.2 222.4 155.8 222.4 C163.5 222.4 171.5 220 178.7 216.7 C186 213.5 195.1 207.6 199.3 203 C203.5 198.4 204.4 195 203.9 189.3 C203.3 183.5 200.1 176.9 195.9 168.7 C191.7 160.5 183.5 146.6 178.7 140.1 C173.9 133.6 171.1 132.1 167.3 129.8 C163.5 127.5 159.6 126.1 155.8 126.1 Z"/></clipPath><g clip-path="url(#sn)"><path d="M155.8 125.2 C149.3 125.4 139.8 131.7 133 138.9 C126.1 146.2 119 160.3 114.6 168.7 C110.3 177.1 107.4 183.5 106.6 189.3 C105.9 195 105.7 198.8 110.1 203 C114.5 207.2 125.3 211.9 133 214.4 C140.6 217 148.2 218.6 155.8 218.4 C163.5 218.2 172.2 216.8 178.7 213.3 C185.2 209.8 191.7 201.5 194.7 197.3 C197.8 193.1 198.2 193.3 197 188.1 C195.9 183 192.1 174.8 187.9 166.4 C183.7 158 177.2 144.6 171.8 137.8 C166.5 130.9 162.3 125 155.8 125.2 Z" fill="#f5e6b0"/><path d="M149 130.9 C151.9 126.3 152.2 127.7 150.7 132.6 C149.2 137.6 143.5 151.6 139.8 160.7 C136.1 169.7 130.8 179.9 128.4 187 C126 194 126.9 202.2 125.5 203 C124.2 203.8 121 194.8 120.4 191.5 C119.7 188.3 119.4 188.7 121.5 183.5 C123.6 178.4 128.4 169.4 133 160.7 C137.5 151.9 146 135.6 149 130.9 Z" fill="#e8b566"/><path d="M156.4 130.9 C157.2 130.9 159.2 144.3 159.8 151.5 C160.5 158.8 161 163.6 160.4 174.4 C159.8 185.2 157.4 216.1 156.4 216.1 C155.4 216.1 154.4 185.2 154.1 174.4 C153.9 163.6 154.5 158.8 154.9 151.5 C155.3 144.3 155.6 130.9 156.4 130.9 Z" fill="#e8b566"/><path d="M162.7 130.9 C165.6 135.2 173.9 149.2 178.7 158.4 C183.5 167.5 188.9 180.1 191.3 185.8 C193.7 191.5 193 189.9 193 192.7 C193 195.5 192.3 203.4 191.3 202.4 C190.2 201.5 189.6 193.9 186.7 187 C183.9 180 178.3 169.7 174.1 160.7 C169.9 151.6 163.5 137.6 161.5 132.6 C159.6 127.7 159.8 126.6 162.7 130.9 Z" fill="#e8b566"/></g></svg></div>
<span class="t" style="left:832.5px;top:849.8px;font-size:23px;line-height:23px;color:#3f97f6;letter-spacing:0.917px;-webkit-text-stroke:0.55px #3f97f6;">scarf - 2 (320)</span>
<div class="tile" style="left:1083px;top:579px"><svg width="300" height="300" viewBox="0 0 300 300"><path d="M47.4 90.7 C50 97.6 51.8 104.3 55.1 111.4 C58.4 118.5 61.8 127.6 67.1 133.2 C72.3 138.9 78 142.6 86.7 145.2 C95.4 147.9 108.5 147.8 119.4 149.1" fill="none" stroke="#000" stroke-width="19" stroke-linejoin="round" stroke-linecap="round"/><path d="M105.2 101.6 C111.4 104.9 118 107.8 123.8 111.4 C129.6 115.1 134.7 119.4 140.1 123.4" fill="none" stroke="#000" stroke-width="14.5" stroke-linejoin="round" stroke-linecap="round"/><path d="M252.8 90.7 C250.2 97.6 248.4 104.3 245.1 111.4 C241.9 118.5 238.4 127.6 233.1 133.2 C227.9 138.9 222.2 142.6 213.5 145.2 C204.8 147.9 191.7 147.8 180.8 149.1" fill="none" stroke="#000" stroke-width="19" stroke-linejoin="round" stroke-linecap="round"/><path d="M195 101.6 C188.8 104.9 182.3 107.8 176.4 111.4 C170.6 115.1 165.5 119.4 160.1 123.4" fill="none" stroke="#000" stroke-width="14.5" stroke-linejoin="round" stroke-linecap="round"/><path d="M45.1 91.9 C45.4 95.6 48.3 105.5 51.2 112.9 C54.2 120.2 57.3 129.9 62.8 136 C68.3 142.1 75.5 146.6 84.4 149.3 C93.2 152.1 110.6 152.6 115.9 152.5 C121.3 152.3 121.4 149.7 116.4 148.5 C111.3 147.2 94 147.7 85.7 145.1 C77.4 142.4 71.6 138.3 66.5 132.7 C61.5 127 58.5 118.1 55.6 111.1 C52.8 104.1 51.1 93.8 49.4 90.6 C47.6 87.4 44.8 88.2 45.1 91.9 Z" fill="#8da2a6"/><path d="M102.9 102.3 C105 103.7 112.5 106.8 116.6 109 C120.6 111.1 124 113.2 127.1 115.3 C130.1 117.4 133 121.2 134.8 121.6 C136.6 122 138.7 119.2 137.8 117.6 C136.9 116 132.5 113.8 129.2 111.9 C125.9 110 122.1 108.2 117.9 106.3 C113.6 104.4 106.2 101.1 103.7 100.5 C101.2 99.8 100.7 100.9 102.9 102.3 Z" fill="#8da2a6"/><path d="M250.8 90.6 C249.1 93.8 247.4 104.1 244.6 111.1 C241.7 118.1 238.7 127 233.7 132.7 C228.7 138.3 222.8 142.4 214.5 145.1 C206.2 147.7 188.9 147.2 183.9 148.5 C178.8 149.7 179 152.3 184.3 152.5 C189.6 152.6 207 152.1 215.8 149.3 C224.7 146.6 231.9 142.1 237.4 136 C242.9 129.9 246 120.2 249 112.9 C251.9 105.5 254.8 95.6 255.1 91.9 C255.5 88.2 252.6 87.4 250.8 90.6 Z" fill="#8da2a6"/><path d="M196.5 100.5 C194 101.1 186.6 104.4 182.3 106.3 C178.1 108.2 174.3 110 171 111.9 C167.7 113.8 163.4 116 162.4 117.6 C161.5 119.2 163.6 122 165.4 121.6 C167.2 121.2 170.1 117.4 173.1 115.3 C176.2 113.2 179.6 111.1 183.6 109 C187.7 106.8 195.2 103.7 197.3 102.3 C199.5 100.9 199 99.8 196.5 100.5 Z" fill="#8da2a6"/><path d="M126 131.1 C129.2 127.2 130.7 123.6 134.7 121.2 C138.7 118.9 144.9 116.9 149.9 116.9 C155 116.9 161.2 118.9 165.2 121.2 C169.2 123.6 170.7 127.2 173.9 131.1 C177.2 134.9 183.7 140.1 184.8 144.1 C185.9 148.1 183.6 151.1 180.5 155.1 C177.4 159 171.4 164.9 166.3 168.1 C161.2 171.4 155.4 174.7 149.9 174.7 C144.5 174.7 138.7 171.4 133.6 168.1 C128.5 164.9 122.5 159 119.4 155.1 C116.3 151.1 114 148.1 115.1 144.1 C116.1 140.1 122.7 134.9 126 131.1 Z" fill="#000"/><path d="M133.6 129.4 C134 126.8 139.6 125.8 143.4 125.1 C147.2 124.3 152.7 124.3 156.5 125.1 C160.3 125.8 165.8 126.8 166.3 129.4 C166.8 132.1 161.9 138.2 159.2 140.9 C156.5 143.5 153 145.2 149.9 145.2 C146.9 145.2 143.4 143.5 140.7 140.9 C137.9 138.2 133.1 132.1 133.6 129.4 Z" fill="#e8cda6"/><path d="M133.6 129.4 C134 126.8 141.3 125.7 143.4 125.1 C145.5 124.4 145.3 123.2 146.1 125.6 C146.9 128.1 147.7 136.5 148.3 139.8 C148.9 143.1 151.2 145.1 149.9 145.2 C148.7 145.4 143.4 143.5 140.7 140.9 C137.9 138.2 133.1 132.1 133.6 129.4 Z" fill="#b9a384"/><path d="M121 145.2 L139 142.5 L149.9 147.6 L160.8 142.5 L178.3 145.2 L162.5 163.8 L155.4 152.9 L149.9 146.9 L144.5 152.9 L139 163.8 Z" fill="#e8cda6"/><path d="M121 145.2 L139 142.5 L148.3 146.9 L144.5 152.9 L139 163.8 Z" fill="#b9a384"/><path d="M165.2 143.1 L178.3 145.2 L165.2 160.5 Z" fill="#f0e2cc"/><path d="M150.5 148 C152.9 148 154.9 153.9 157.6 159.4 C160.2 165 164.1 173.4 166.3 181.2 C168.5 189 170.9 199.4 170.9 206.3 C170.9 213.2 169.6 218.4 166.3 222.7 C163 226.9 156.1 231.6 151 231.6 C145.9 231.6 139.1 226.9 135.8 222.7 C132.5 218.4 131.2 213.2 131.2 206.3 C131.2 199.4 133.7 189 135.8 181.2 C137.8 173.4 140.9 165 143.4 159.4 C145.9 153.9 148.1 148 150.5 148 Z" fill="#000"/><path d="M150.5 157.2 C152 157.2 153.7 163.4 155.4 168.1 C157.1 172.9 159.4 179.2 160.8 185.6 C162.3 191.9 163.9 200.8 163.9 206.3 C163.9 211.8 163 215.3 160.8 218.3 C158.7 221.2 154.2 224 151 224 C147.9 224 143.9 221.2 141.8 218.3 C139.7 215.3 138.6 211.8 138.5 206.3 C138.4 200.8 139.9 191.9 141.2 185.6 C142.5 179.2 144.6 172.9 146.1 168.1 C147.7 163.4 148.9 157.2 150.5 157.2 Z" fill="#8fa9ad"/><path d="M151 157.8 C152.5 156 153.8 163.5 155.4 168.1 C157 172.8 159.4 179.2 160.8 185.6 C162.3 191.9 163.9 200.8 163.9 206.3 C163.9 211.8 162.8 215.4 160.8 218.3 C158.9 221.2 154.4 224.1 152.1 223.7 C149.9 223.4 148.5 219.9 147.2 216.1 C145.9 212.3 144.6 207 144.5 200.8 C144.4 194.7 145.6 186.2 146.7 179 C147.8 171.9 149.6 159.6 151 157.8 Z" fill="#b1c9cc"/><path d="M155.4 182.9 C156.4 182.9 157.8 190.8 158.7 195.4 C159.5 200 161.2 206.7 160.6 210.7 C160.1 214.6 157 219.2 155.4 219.2 C153.8 219.2 151.7 214.6 151.3 210.7 C150.8 206.7 152 200 152.7 195.4 C153.4 190.8 154.4 182.9 155.4 182.9 Z" fill="#fff"/></svg></div>
<span class="t" style="left:1156.0px;top:849.8px;font-size:23px;line-height:23px;color:#3f97f6;letter-spacing:0.703px;-webkit-text-stroke:0.55px #3f97f6;">scarf - 1 (320)</span>
<div class="tile" style="left:117px;top:899px"><svg width="300" height="300" viewBox="0 0 300 300"><path d="M47.3 125.3 C46.4 127.1 42.6 132.7 42.6 136 C42.6 139.3 44.7 143.2 47.1 145.1 C49.5 147 55.5 147.1 57.2 147.4 C58.8 147.7 58.7 147.7 57.3 147 C55.8 146.4 50.5 145.3 48.4 143.5 C46.3 141.6 44.8 139 44.6 136 C44.5 133 47.1 127.2 47.5 125.4 C48 123.6 48.1 123.5 47.3 125.3 Z" fill="#000"/><path d="M57.1 147.2 C56.3 148.8 52.8 153.7 52.8 157.3 C52.8 160.8 54 165.7 57.2 168.5 C60.4 171.3 69.4 173.1 71.9 174 C74.4 174.8 74.3 174.7 72.1 173.6 C69.8 172.5 61.3 170 58.4 167.2 C55.5 164.5 54.7 160.6 54.5 157.2 C54.3 153.9 56.9 148.9 57.4 147.3 C57.8 145.6 57.8 145.5 57.1 147.2 Z" fill="#000"/><path d="M35.8 136.5 C35.2 138 32.2 142.8 32.2 145.5 C32.3 148.1 34.1 151 36.1 152.5 C38 154.1 42.8 154.5 44.2 154.8 C45.5 155.2 45.5 155 44.3 154.5 C43.1 153.9 38.8 152.9 37 151.3 C35.3 149.8 33.9 147.9 33.7 145.4 C33.6 143 35.7 138.1 36.1 136.6 C36.4 135.1 36.4 135.1 35.8 136.5 Z" fill="#000"/><path d="M44.1 154.6 C43.4 156 40.5 160.3 40.5 163.2 C40.6 166.1 41.8 169.9 44.3 172 C46.8 174.1 53.5 175.2 55.4 175.8 C57.2 176.3 57.2 176.2 55.5 175.4 C53.8 174.6 47.6 172.9 45.3 170.9 C43.1 168.8 42.2 165.8 42 163.1 C41.9 160.4 44 156.1 44.4 154.7 C44.7 153.3 44.7 153.2 44.1 154.6 Z" fill="#000"/><path d="M253.2 125.4 C253.7 127.2 256.5 133 256.4 136 C256.3 139 254.8 141.6 252.7 143.5 C250.6 145.3 245.3 146.4 243.8 147 C242.3 147.7 242.2 147.7 243.9 147.4 C245.6 147.1 251.5 147 254 145.1 C256.4 143.2 258.6 139.3 258.5 136 C258.4 132.7 254.3 127.1 253.5 125.3 C252.6 123.5 252.7 123.6 253.2 125.4 Z" fill="#000"/><path d="M243.7 147.3 C244.1 148.9 246.6 154.1 246.6 157.3 C246.5 160.4 246.2 163.3 243.3 166.1 C240.4 168.8 231.4 172.3 229 173.6 C226.7 174.9 226.6 175 229.2 174 C231.8 172.9 241.3 170.1 244.4 167.3 C247.6 164.6 248.3 160.6 248.3 157.3 C248.2 153.9 244.8 148.8 244 147.2 C243.2 145.5 243.3 145.6 243.7 147.3 Z" fill="#000"/><path d="M265 134.3 C265.3 135.9 267.7 141.6 267.3 144.2 C267 146.7 264.8 148.3 262.9 149.5 C261.1 150.8 257.3 151.3 256.2 151.7 C255.1 152.2 255.1 152.3 256.3 152.1 C257.6 152 261.7 152.1 263.8 150.8 C265.9 149.5 268.6 147.1 268.8 144.3 C269.1 141.6 265.9 135.9 265.3 134.2 C264.6 132.5 264.6 132.6 265 134.3 Z" fill="#000"/><path d="M256.1 152 C256.6 153.7 259.3 159 259.1 161.9 C258.8 164.9 256.8 167.7 254.6 169.7 C252.3 171.6 247 172.9 245.6 173.6 C244.1 174.3 244 174.4 245.7 174 C247.4 173.5 253.1 172.8 255.6 170.8 C258.1 168.8 260.4 165.2 260.6 162 C260.7 158.9 257.1 153.6 256.4 151.9 C255.7 150.2 255.7 150.3 256.1 152 Z" fill="#000"/></svg></div>
<span class="t" style="left:195.8px;top:1169.8px;font-size:23px;line-height:23px;color:#3f97f6;letter-spacing:0.364px;-webkit-text-stroke:0.55px #3f97f6;">scar - 1 (160)</span>
<div class="tile sel" style="left:439px;top:899px"><svg width="300" height="300" viewBox="0 0 300 300"><svg x="30" y="30" width="240" height="241.6" viewBox="0 0 590 594"><use href='#fishg'/></svg></svg></div>
<span class="t" style="left:497.8px;top:1169.8px;font-size:23px;line-height:23px;color:#ffffff;letter-spacing:0.870px;-webkit-text-stroke:0.55px #ffffff;">object - 14 (400)</span>
<div class="tile" style="left:761px;top:899px"><svg width="300" height="300" viewBox="0 0 300 300"><path d="M89.7 47.3 C83.4 47.3 80.3 50.7 77.6 54.1 C75 57.5 73.1 61.1 73.9 67.6 C74.6 74.2 79.3 85.7 82.1 93.2 C85 100.8 88.2 106.3 91.2 112.8 C81.6 124.3 69.1 138.1 62.6 147.4 C56.1 156.7 53 163 52 168.5 C51 174 53.5 177.6 56.6 180.5 C59.6 183.4 58.1 184.5 70.1 185.8 C82.1 187.1 109.2 187.3 128.8 188.1 C134.3 209.6 141.9 240.4 145.4 252.8 C148.8 265.2 147.8 260.4 149.6 262.6 C151.3 264.7 153.7 265.7 155.9 265.7 C158.1 265.8 160.4 264.9 162.7 263 C164.9 261.1 161.6 266 169.5 254.3 C177.4 242.6 196.6 213.2 210.1 192.6 C220.1 191.1 233.4 191.1 240.2 188.1 C247 185.1 250.2 179.8 250.7 174.5 C251.2 169.2 248.2 164.5 243.2 156.4 C238.2 148.4 228.2 136.4 220.6 126.3 C222.9 109.3 226.8 86.6 227.4 75.2 C228 63.7 226.7 62.4 224.4 57.8 C222.1 53.3 217.4 51.3 213.9 48.1 C194.5 57.6 175.2 67.1 155.9 76.7 C142.4 69.1 126.3 59 115.3 54.1 C104.2 49.2 95.9 47.3 89.7 47.3 Z" fill="#000"/><path d="M88.2 62.4 C89.4 67.6 88.4 69.3 91.9 78.2 C95.4 87.1 103.5 103.3 109.2 115.8 C94.9 133.5 80.6 151.1 66.3 168.8 C89.7 171 123.7 173.1 136.3 175.3 C149 177.5 140.4 179.8 142.4 182 C147.4 204.1 152.4 226.2 157.4 248.3 C171 223.7 184.5 199.1 198.1 174.5 C210.6 174.3 223.2 174 235.7 173.8 C226.2 160 216.6 146.2 207.1 132.4 C209.1 118.3 212.2 101.4 213.1 90.2 C214 79 212.6 73.7 212.4 65.4 C193.3 74.4 174.2 83.4 155.2 92.5 C141.9 84.7 126.4 74.2 115.3 69.1 C104.1 64.1 97.2 64.6 88.2 62.4 Z" fill="#efadd6"/><path d="M91.2 75.9 L118.3 84.9 L137.8 113.5 L109.2 104.5 Z" fill="#d89cc0"/><path d="M70.9 163.2 C86.7 157 102.5 150.7 118.3 144.4 C131.3 144.2 150.4 142.6 157.4 143.7 C164.4 144.7 164.7 145.8 160.4 150.4 C156.2 155.1 141.4 164.5 131.8 171.5 C111.5 168.7 91.2 166 70.9 163.2 Z" fill="#d89cc0"/><path d="M169.5 221.2 L178.5 162.5 L188.3 153.4 L217.6 163.2 L231.9 173.8 L198.1 173.8 Z" fill="#d89cc0"/><path d="M130.3 85.7 L168 109.8 L189 110.5 L206.3 85.7 L198.1 129.4 L226.7 162.5 L178.5 150.4 L168.7 203.1 L168 142.1 L158.9 133.9 L110.8 133.9 L148.4 115.8 Z" fill="#000"/></svg></div>
<span class="t" style="left:820.2px;top:1169.8px;font-size:23px;line-height:23px;color:#3f97f6;letter-spacing:0.813px;-webkit-text-stroke:0.55px #3f97f6;">object - 13 (400)</span>
<div class="tile" style="left:1083px;top:899px"><svg width="300" height="300" viewBox="0 0 300 300"><path d="M139.3 48.9 C138.6 54.9 137.8 61.3 137.2 66.9 C136.6 72.5 134.8 78.8 135.7 82.6 C136.5 86.4 140.5 87.6 142.4 89.6 C144.3 91.7 145.4 93.1 146.9 94.8 C146.5 96.2 146.1 97.6 145.7 99 C142.8 96.8 139.2 94.2 136.9 92.3 C134.6 90.4 133.2 87.4 131.9 87.6 C130.6 87.7 129.1 91.5 129.1 93.2 C129.1 94.9 130.7 96.8 131.9 97.9 C133.2 99.1 135.1 99.4 136.6 100.1 C134.5 100.5 132.3 102.1 130.4 101.4 C128.4 100.6 125.2 98.5 124.7 95.4 C124.3 92.3 126 87.8 127.5 82.6 C129.1 77.3 132.2 69.4 134.1 63.8 C136.1 58.2 137.6 53.9 139.3 48.9 Z" fill="#e8cda6" stroke="#000" stroke-width="1.3" stroke-linejoin="round" stroke-linecap="round"/><path d="M158.4 48.9 C159 54.9 159.8 61.3 160.4 66.9 C161 72.5 162.8 78.8 162 82.6 C161.1 86.4 157.1 87.6 155.2 89.6 C153.4 91.7 152.2 93.1 150.7 94.8 C151.1 96.2 151.5 97.6 152 99 C154.9 96.8 158.4 94.2 160.7 92.3 C163 90.4 164.4 87.4 165.7 87.6 C167 87.7 168.5 91.5 168.5 93.2 C168.5 94.9 167 96.8 165.7 97.9 C164.5 99.1 162.6 99.4 161 100.1 C163.1 100.5 165.3 102.1 167.3 101.4 C169.3 100.6 172.4 98.5 172.9 95.4 C173.4 92.3 171.7 87.8 170.1 82.6 C168.5 77.3 165.5 69.4 163.5 63.8 C161.6 58.2 160.1 53.9 158.4 48.9 Z" fill="#e8cda6" stroke="#000" stroke-width="1.3" stroke-linejoin="round" stroke-linecap="round"/><path d="M148.4 31.3 C149 40.5 149.6 50 150.2 59.1 C150.8 68.2 151.7 78.7 152 85.7 C152.2 92.7 151.5 98.2 152 101.4 C152.4 104.5 153.8 103.4 154.8 104.5 C154 105.8 153.3 107.1 152.6 108.4 C152.8 131.1 153 152.3 153.4 176.4 C153.7 200.6 155 237.8 154.6 253.1 C154.2 268.4 152.2 263.3 151 268.4 C149.7 263.3 147.7 268.4 146.9 253.1 C146.2 237.8 146.5 200.6 146.3 176.4 C146.2 152.3 146.1 131.1 146 108.4 C145.3 107.1 144.7 105.8 144 104.5 C144.5 103.4 145.5 104.5 145.7 101.4 C145.9 98.2 144.9 92.7 145.1 85.7 C145.2 78.7 146.1 68.2 146.6 59.1 C147.2 50 147.8 40.5 148.4 31.3 Z" fill="#e8cda6" stroke="#000" stroke-width="1.3" stroke-linejoin="round" stroke-linecap="round"/><path d="M147.3 113.9 L148.8 113.9 L149.4 251.5 L147.9 251.5 Z" fill="#c9ae88"/></svg></div>
<span class="t" style="left:1142.1px;top:1169.8px;font-size:23px;line-height:23px;color:#3f97f6;letter-spacing:0.832px;-webkit-text-stroke:0.55px #3f97f6;">object - 10 (400)</span>
<div class="tile" style="left:117px;top:1219px"><svg width="300" height="300" viewBox="0 0 300 300"><path d="M32.4 167.3 C40.1 168.5 47.3 169.9 55.4 170.9 C63.6 171.8 73.8 173.9 81.4 173 C89.1 172.1 94.8 168 101.5 165.6 C101.9 155.5 101.8 143.5 102.7 135.4 C103.6 127.4 105.1 121 106.8 117.1 C108.6 113.3 108.1 110.9 113.3 112.4 C118.5 113.9 129.1 122.2 138.1 126 C147.2 129.8 159.8 132.3 167.7 135.4 C175.5 138.6 179.9 141.3 185.4 144.9 C190.9 148.4 195.6 152.8 200.7 156.7 C205.5 152 209.6 146.6 214.9 142.5 C220.2 138.5 226.7 135.8 232.6 132.5 C244.1 139 261.4 147.5 266.9 152 C272.4 156.4 268.1 154.9 265.7 159.1 C263.4 163.2 257.1 170.9 252.7 176.8 C248 177 247.8 175.8 238.5 177.4 C229.3 179 209 184 197.2 186.2 C185.4 188.5 177.5 191 167.7 191 C157.8 191 146.4 187.6 138.1 186.2 C129.9 184.9 125.9 181.3 118.1 182.7 C110.2 184.1 98.8 191.8 90.9 194.5 C83 197.2 76.7 198.8 70.8 198.6 C64.9 198.4 60.6 196.4 55.4 193.3 C50.3 190.3 43.9 184.7 40.1 180.3 C36.2 176 35 171.7 32.4 167.3 Z" fill="#64a07c" stroke="#000" stroke-width="2.2" stroke-linejoin="round" stroke-linecap="round"/><clipPath id="gh"><path d="M32.4 167.3 C40.1 168.5 47.3 169.9 55.4 170.9 C63.6 171.8 73.8 173.9 81.4 173 C89.1 172.1 94.8 168 101.5 165.6 C101.9 155.5 101.8 143.5 102.7 135.4 C103.6 127.4 105.1 121 106.8 117.1 C108.6 113.3 108.1 110.9 113.3 112.4 C118.5 113.9 129.1 122.2 138.1 126 C147.2 129.8 159.8 132.3 167.7 135.4 C175.5 138.6 179.9 141.3 185.4 144.9 C190.9 148.4 195.6 152.8 200.7 156.7 C205.5 152 209.6 146.6 214.9 142.5 C220.2 138.5 226.7 135.8 232.6 132.5 C244.1 139 261.4 147.5 266.9 152 C272.4 156.4 268.1 154.9 265.7 159.1 C263.4 163.2 257.1 170.9 252.7 176.8 C248 177 247.8 175.8 238.5 177.4 C229.3 179 209 184 197.2 186.2 C185.4 188.5 177.5 191 167.7 191 C157.8 191 146.4 187.6 138.1 186.2 C129.9 184.9 125.9 181.3 118.1 182.7 C110.2 184.1 98.8 191.8 90.9 194.5 C83 197.2 76.7 198.8 70.8 198.6 C64.9 198.4 60.6 196.4 55.4 193.3 C50.3 190.3 43.9 184.7 40.1 180.3 C36.2 176 35 171.7 32.4 167.3 Z"/></clipPath><g clip-path="url(#gh)"><path d="M31.8 166.2 C38.1 165 69.6 173.2 81.4 173.2 C93.2 173.2 96.6 165.8 102.7 166.2 C108.8 166.5 120 173.2 118.1 175.6 C116.1 178 99.3 179.1 90.9 180.3 C82.4 181.5 75.1 182.7 67.3 182.7 C59.4 182.7 49.5 183.1 43.6 180.3 C37.7 177.6 25.5 167.3 31.8 166.2 Z" fill="#7bc7a0"/><path d="M102.7 135.4 C103.9 127 105.4 119.1 107.4 115.4 C109.4 111.6 109.4 111.2 114.5 113 C119.6 114.8 135.2 123 138.1 126 C141.1 128.9 136.2 130.7 132.2 130.7 C128.3 130.7 118.6 122.2 114.5 126 C110.4 129.7 109 146.5 107.4 153.2 C105.8 159.9 106.2 164 105.1 166.2 C103.9 168.3 100.7 171.3 100.3 166.2 C99.9 161 101.5 143.9 102.7 135.4 Z" fill="#7bc7a0"/><path d="M113.3 116.5 L139.3 127.8 L131 128.9 Z" fill="#fff"/><path d="M109.8 133.1 C111 128.7 112.1 127 114.5 127.2 C116.9 127.4 123.4 129.7 124 134.3 C124.5 138.8 118.6 147.5 118.1 154.3 C117.5 161.2 123 173.2 120.4 175.6 C117.9 178 104.9 172.3 102.7 168.5 C100.5 164.8 106.2 159.1 107.4 153.2 C108.6 147.3 108.6 137.4 109.8 133.1 Z" fill="#4f8163"/><path d="M138.1 140.2 L155.9 141.3 L199.6 170.9 L197.2 175.6 L161.8 182.7 L133.4 166.2 Z" fill="#7bc7a0"/><path d="M133.4 147.3 L185.4 175.6 L161.8 182.7 L126.3 178 Z" fill="#64a07c"/><path d="M132.2 161.4 L161.8 182.7 L159.4 187.4 L126.3 180.3 Z" fill="#4f8163"/><path d="M201.9 156.7 C202.9 155.2 209.8 147 214.9 143.1 C220 139.3 224.1 132.1 232.6 133.7 C241.2 135.2 262.4 147.2 266.3 152.6 C270.2 158 261.5 166.5 256.3 166.2 C251 165.9 242.9 153.2 235 150.8 C227.1 148.4 214.5 151 209 152 C203.5 153 200.9 158.2 201.9 156.7 Z" fill="#7bc7a0"/><path d="M219.6 140.2 L232.6 135.4 L255.1 147.3 L232.6 137.8 Z" fill="#d8f0e0"/></g><path d="M32.4 167.3 C40.1 168.5 47.3 169.9 55.4 170.9 C63.6 171.8 73.8 173.9 81.4 173 C89.1 172.1 94.8 168 101.5 165.6 C101.9 155.5 101.8 143.5 102.7 135.4 C103.6 127.4 105.1 121 106.8 117.1 C108.6 113.3 108.1 110.9 113.3 112.4 C118.5 113.9 129.1 122.2 138.1 126 C147.2 129.8 159.8 132.3 167.7 135.4 C175.5 138.6 179.9 141.3 185.4 144.9 C190.9 148.4 195.6 152.8 200.7 156.7 C205.5 152 209.6 146.6 214.9 142.5 C220.2 138.5 226.7 135.8 232.6 132.5 C244.1 139 261.4 147.5 266.9 152 C272.4 156.4 268.1 154.9 265.7 159.1 C263.4 163.2 257.1 170.9 252.7 176.8 C248 177 247.8 175.8 238.5 177.4 C229.3 179 209 184 197.2 186.2 C185.4 188.5 177.5 191 167.7 191 C157.8 191 146.4 187.6 138.1 186.2 C129.9 184.9 125.9 181.3 118.1 182.7 C110.2 184.1 98.8 191.8 90.9 194.5 C83 197.2 76.7 198.8 70.8 198.6 C64.9 198.4 60.6 196.4 55.4 193.3 C50.3 190.3 43.9 184.7 40.1 180.3 C36.2 176 35 171.7 32.4 167.3 Z" fill="none" stroke="#000" stroke-width="2.2" stroke-linejoin="round" stroke-linecap="round"/><path d="M200.7 156.7 C201.9 160.6 200.9 165.6 204.3 168.5 C207.6 171.5 215.1 172.9 220.8 174.4 C226.5 175.9 232.6 176.4 238.5 177.4" fill="none" stroke="#000" stroke-width="2" stroke-linejoin="round" stroke-linecap="round"/><path d="M66.1 158.5 C74.3 161.6 82.8 165.2 90.9 167.9 C99 170.7 109.4 174.5 114.5 175 C119.6 175.5 120.6 174.1 121.4 170.9 C122.1 167.6 118.6 160.8 119 155.5 C119.4 150.2 121.8 143 124 139 C126.2 135 127.9 132.5 132.2 131.7 C136.6 130.8 143.1 132.1 149.9 134 C156.8 136 165.3 138.6 173.6 143.5 C181.8 148.3 194.7 159.2 199.6 163.2 C204.4 167.2 202.9 166.4 202.5 167.6 C202.1 168.8 202 172.6 197.2 170.3 C192.4 168 180.5 158.5 173.6 153.8 C166.7 149 161.8 144.4 155.9 141.9 C149.9 139.5 141.8 138.1 138.1 139 C134.4 139.9 134.8 142.7 133.6 147.3 C132.5 151.8 132.4 161 131.3 166.2 C130.2 171.3 129.1 175.6 126.9 178 C124.7 180.4 124.1 180.9 118.1 180.6 C112 180.3 99 178.9 90.9 176.2 C82.8 173.5 73.8 167.3 69.6 164.4 C65.5 161.4 67.3 160.4 66.1 158.5 Z" fill="#c9b08c" stroke="#000" stroke-width="2.2" stroke-linejoin="round" stroke-linecap="round"/><path d="M149.9 135.4 C152.9 136.2 165.5 140.1 173.6 144.9 C181.6 149.7 194.1 160.5 198.4 164.4 C202.6 168.2 203.1 170.2 199 167.9 C194.8 165.7 180.8 155.4 173.6 150.8 C166.4 146.2 159.8 142.7 155.9 140.2 C151.9 137.6 147 134.7 149.9 135.4 Z" fill="#e8cda6"/><path d="M68.4 160.2 C68.4 159.6 83.2 166.9 90.9 169.7 C98.6 172.5 109.8 175.4 114.5 176.8 C119.2 178.2 123.2 178.5 119.2 178 C115.3 177.5 99.3 176.8 90.9 173.8 C82.4 170.9 68.4 160.9 68.4 160.2 Z" fill="#e8cda6"/></svg></div>
<span class="t" style="left:181.7px;top:1489.8px;font-size:23px;line-height:23px;color:#3f97f6;letter-spacing:1.000px;-webkit-text-stroke:0.55px #3f97f6;">object - 9 (400)</span>
<div class="tile" style="left:439px;top:1219px"><svg width="300" height="300" viewBox="0 0 300 300"><path d="M78 182.1 C72.9 187.4 75.3 190.8 75.8 196.3 C76.3 201.8 78.7 210.4 81.2 214.8 C83.8 219.2 85.1 222.9 91.1 222.7 C97.1 222.5 108.3 216 117.2 213.7 C126.1 211.5 135.4 209.6 144.5 209.4 C153.6 209.2 162.5 210.6 171.8 212.7 C181 214.7 193.2 221.2 200.1 221.6 C207 222 210.2 218.5 213.2 214.8 C216.1 211.2 217.4 205.4 217.8 199.6 C218.1 193.8 221.2 186.3 215.4 179.9 C209.5 173.6 194.5 165.4 182.7 161.4 C170.8 157.4 157.2 155.4 144.5 156 C131.8 156.5 117.4 160.3 106.3 164.7 C95.2 169 83.1 176.9 78 182.1 Z" fill="#a585cc" stroke="#000" stroke-width="5.5" stroke-linejoin="round" stroke-linecap="round"/><clipPath id="ph2"><path d="M78 182.1 C72.9 187.4 75.3 190.8 75.8 196.3 C76.3 201.8 78.7 210.4 81.2 214.8 C83.8 219.2 85.1 222.9 91.1 222.7 C97.1 222.5 108.3 216 117.2 213.7 C126.1 211.5 135.4 209.6 144.5 209.4 C153.6 209.2 162.5 210.6 171.8 212.7 C181 214.7 193.2 221.2 200.1 221.6 C207 222 210.2 218.5 213.2 214.8 C216.1 211.2 217.4 205.4 217.8 199.6 C218.1 193.8 221.2 186.3 215.4 179.9 C209.5 173.6 194.5 165.4 182.7 161.4 C170.8 157.4 157.2 155.4 144.5 156 C131.8 156.5 117.4 160.3 106.3 164.7 C95.2 169 83.1 176.9 78 182.1 Z"/></clipPath><g clip-path="url(#ph2)"><path d="M73.6 179.9 C84.2 172.7 122.7 169.8 139 169 C155.4 168.3 162.7 171.9 171.8 175.6 C180.8 179.2 187.4 186.5 193.6 190.8 C199.7 195.2 208.8 200.7 208.8 201.8 C208.8 202.8 200.1 201.2 193.6 197.4 C187 193.6 179.6 181.9 169.6 178.9 C159.6 175.8 141 177.2 133.6 178.9 C126.1 180.5 128 184.3 124.9 188.7 C121.8 193 120.7 199.9 115.1 205 C109.4 210.1 97.6 217.9 91.1 219.2 C84.5 220.5 78.7 219.2 75.8 212.7 C72.9 206.1 63.1 187.2 73.6 179.9 Z" fill="#876aa6"/></g><path d="M78 182.1 C72.9 187.4 75.3 190.8 75.8 196.3 C76.3 201.8 78.7 210.4 81.2 214.8 C83.8 219.2 85.1 222.9 91.1 222.7 C97.1 222.5 108.3 216 117.2 213.7 C126.1 211.5 135.4 209.6 144.5 209.4 C153.6 209.2 162.5 210.6 171.8 212.7 C181 214.7 193.2 221.2 200.1 221.6 C207 222 210.2 218.5 213.2 214.8 C216.1 211.2 217.4 205.4 217.8 199.6 C218.1 193.8 221.2 186.3 215.4 179.9 C209.5 173.6 194.5 165.4 182.7 161.4 C170.8 157.4 157.2 155.4 144.5 156 C131.8 156.5 117.4 160.3 106.3 164.7 C95.2 169 83.1 176.9 78 182.1 Z" fill="none" stroke="#000" stroke-width="5.5" stroke-linejoin="round" stroke-linecap="round"/><path d="M67.1 164.7 C58.9 163.2 51.1 154.3 46.4 149.4 C41.6 144.5 38.5 140.7 38.5 135.2 C38.5 129.8 42.9 121.6 46.4 116.7 C49.8 111.8 55.2 110.1 59.4 105.8 C63.7 101.5 67.8 96 72 91.1 C77.3 90.1 82.2 90.5 87.8 88.1 C93.3 85.8 99.1 78.2 105.2 76.9 C111.3 75.6 118 79.1 124.3 80.2 C130.3 77.4 136.1 71.9 142.3 72 C148.5 72.1 155 78 161.4 80.9 C165.6 78.5 169.2 73.3 173.9 73.6 C178.7 74 184.5 80 189.7 83.1 C196.5 82.9 204.8 80.4 209.9 82.4 C215 84.4 216.8 90.9 220.3 95.1 C225.9 95.8 233 93.8 237.2 97.1 C241.4 100.3 242.6 108.8 245.4 114.7 C249.5 117.2 255.3 118.9 257.9 122.2 C260.5 125.4 262.8 129.1 261.2 134.1 C259.5 139.2 253.3 146.1 248.1 152.7 C242.8 159.2 238.6 172.5 229.5 173.4 C220.5 174.3 207.7 162.1 193.6 158.1 C179.4 154.1 160.8 149.4 144.5 149.4 C128.1 149.4 108.3 155.6 95.4 158.1 C82.5 160.7 75.3 166.1 67.1 164.7 Z" fill="#a585cc" stroke="#000" stroke-width="5.5" stroke-linejoin="round" stroke-linecap="round"/><clipPath id="ph1"><path d="M67.1 164.7 C58.9 163.2 51.1 154.3 46.4 149.4 C41.6 144.5 38.5 140.7 38.5 135.2 C38.5 129.8 42.9 121.6 46.4 116.7 C49.8 111.8 55.2 110.1 59.4 105.8 C63.7 101.5 67.8 96 72 91.1 C77.3 90.1 82.2 90.5 87.8 88.1 C93.3 85.8 99.1 78.2 105.2 76.9 C111.3 75.6 118 79.1 124.3 80.2 C130.3 77.4 136.1 71.9 142.3 72 C148.5 72.1 155 78 161.4 80.9 C165.6 78.5 169.2 73.3 173.9 73.6 C178.7 74 184.5 80 189.7 83.1 C196.5 82.9 204.8 80.4 209.9 82.4 C215 84.4 216.8 90.9 220.3 95.1 C225.9 95.8 233 93.8 237.2 97.1 C241.4 100.3 242.6 108.8 245.4 114.7 C249.5 117.2 255.3 118.9 257.9 122.2 C260.5 125.4 262.8 129.1 261.2 134.1 C259.5 139.2 253.3 146.1 248.1 152.7 C242.8 159.2 238.6 172.5 229.5 173.4 C220.5 174.3 207.7 162.1 193.6 158.1 C179.4 154.1 160.8 149.4 144.5 149.4 C128.1 149.4 108.3 155.6 95.4 158.1 C82.5 160.7 75.3 166.1 67.1 164.7 Z"/></clipPath><g clip-path="url(#ph1)"><path d="M40.9 129.8 L59.4 115.1 L92.2 140.7 L86.7 93.8 L105.2 85.1 L106.3 109.1 L113.4 133.1 L127 85.1 L136.9 80.7 L139 140.7 L159.8 140.7 L166.3 96 L167.4 142.9 L182.7 142.9 L187 125.4 L192.5 122.2 L193 134.1 L187 147.2 L204.5 153.8 L211 146.1 L214.3 158.1 L67.1 169 L40.9 147.2 Z" fill="#876aa6"/><path d="M164.1 81.8 C163.9 81.1 169.8 75.6 173.9 76.4 C178.1 77.1 183.2 84.7 189.2 86.2 C195.2 87.6 205 83.1 209.9 85.1 C214.8 87.1 214.3 95.6 218.6 98.2 C223 100.7 231.9 97.3 236.1 100.3 C240.3 103.4 240.4 112.7 243.7 116.7 C247 120.7 253.2 121.2 255.7 124.3 C258.3 127.4 263.9 127.2 259 135.2 C254.1 143.2 231.7 167 226.3 172.3 C220.8 177.6 221.5 173.6 226.3 166.9 C231 160.1 252.8 140 254.6 132 C256.4 124 240.6 122.9 237.2 118.9 C233.7 114.9 237.7 110.5 233.9 108 C230.1 105.4 218.1 106.7 214.3 103.6 C210.5 100.5 215.4 91.6 211 89.4 C206.6 87.3 194.1 92 188.1 90.5 C182.1 89.1 179 82.2 175 80.7 C171 79.3 164.3 82.5 164.1 81.8 Z" fill="#bfa5dc"/></g><path d="M67.1 164.7 C58.9 163.2 51.1 154.3 46.4 149.4 C41.6 144.5 38.5 140.7 38.5 135.2 C38.5 129.8 42.9 121.6 46.4 116.7 C49.8 111.8 55.2 110.1 59.4 105.8 C63.7 101.5 67.8 96 72 91.1 C77.3 90.1 82.2 90.5 87.8 88.1 C93.3 85.8 99.1 78.2 105.2 76.9 C111.3 75.6 118 79.1 124.3 80.2 C130.3 77.4 136.1 71.9 142.3 72 C148.5 72.1 155 78 161.4 80.9 C165.6 78.5 169.2 73.3 173.9 73.6 C178.7 74 184.5 80 189.7 83.1 C196.5 82.9 204.8 80.4 209.9 82.4 C215 84.4 216.8 90.9 220.3 95.1 C225.9 95.8 233 93.8 237.2 97.1 C241.4 100.3 242.6 108.8 245.4 114.7 C249.5 117.2 255.3 118.9 257.9 122.2 C260.5 125.4 262.8 129.1 261.2 134.1 C259.5 139.2 253.3 146.1 248.1 152.7 C242.8 159.2 238.6 172.5 229.5 173.4 C220.5 174.3 207.7 162.1 193.6 158.1 C179.4 154.1 160.8 149.4 144.5 149.4 C128.1 149.4 108.3 155.6 95.4 158.1 C82.5 160.7 75.3 166.1 67.1 164.7 Z" fill="none" stroke="#000" stroke-width="5.5" stroke-linejoin="round" stroke-linecap="round"/><path d="M67.1 170.1 C72.4 165.6 83.4 157 95.4 152.7 C107.4 148.3 125.4 144.9 139 144 C152.7 143.1 165.4 144 177.2 147.2 C189 150.5 201.4 157.8 209.9 163.6 C218.5 169.4 225.2 177.6 228.5 182.1 C231.7 186.7 230.3 188.3 229.5 190.8 C228.8 193.4 226.5 196.5 224.1 197.6 C221.7 198.7 220.5 200.4 215.4 197.6 C210.3 194.8 200.8 186 193.6 181 C186.3 176.1 179.9 170.7 171.8 167.9 C163.6 165.2 154.5 164 144.5 164.7 C134.5 165.4 121.8 167.9 111.8 172.3 C101.8 176.7 90.9 186.9 84.5 190.8 C78.2 194.8 76.9 195.9 73.6 195.8 C70.3 195.6 66.6 192.4 64.9 189.8 C63.2 187.1 63.2 183.2 63.6 179.9 C63.9 176.7 61.8 174.7 67.1 170.1 Z" fill="#e8cfa8" stroke="#000" stroke-width="5.5" stroke-linejoin="round" stroke-linecap="round"/><clipPath id="ph3"><path d="M67.1 170.1 C72.4 165.6 83.4 157 95.4 152.7 C107.4 148.3 125.4 144.9 139 144 C152.7 143.1 165.4 144 177.2 147.2 C189 150.5 201.4 157.8 209.9 163.6 C218.5 169.4 225.2 177.6 228.5 182.1 C231.7 186.7 230.3 188.3 229.5 190.8 C228.8 193.4 226.5 196.5 224.1 197.6 C221.7 198.7 220.5 200.4 215.4 197.6 C210.3 194.8 200.8 186 193.6 181 C186.3 176.1 179.9 170.7 171.8 167.9 C163.6 165.2 154.5 164 144.5 164.7 C134.5 165.4 121.8 167.9 111.8 172.3 C101.8 176.7 90.9 186.9 84.5 190.8 C78.2 194.8 76.9 195.9 73.6 195.8 C70.3 195.6 66.6 192.4 64.9 189.8 C63.2 187.1 63.2 183.2 63.6 179.9 C63.9 176.7 61.8 174.7 67.1 170.1 Z"/></clipPath><g clip-path="url(#ph3)"><path d="M62.7 179.9 C66.3 175.6 73.6 168.5 84.5 164.7 C95.4 160.9 115.4 158.1 128.1 157 C140.9 156 152.7 156.9 160.8 158.1 C169 159.4 179.9 163.8 177.2 164.7 C174.5 165.6 155.4 162.5 144.5 163.6 C133.6 164.7 121.8 166.9 111.8 171.2 C101.8 175.6 90.9 185.8 84.5 189.8 C78.2 193.8 77.3 195 73.6 195.2 C70 195.4 64.5 193.4 62.7 190.8 C60.9 188.3 59.1 184.3 62.7 179.9 Z" fill="#b9a583"/><path d="M139 150.5 C139 150 166.8 150.3 177.2 152.7 C187.6 155 196.9 162 201.2 164.7 C205.5 167.4 206.8 170.5 202.8 169 C198.8 167.6 187.8 159 177.2 156 C166.6 152.9 139 151 139 150.5 Z" fill="#fff"/></g><path d="M67.1 170.1 C72.4 165.6 83.4 157 95.4 152.7 C107.4 148.3 125.4 144.9 139 144 C152.7 143.1 165.4 144 177.2 147.2 C189 150.5 201.4 157.8 209.9 163.6 C218.5 169.4 225.2 177.6 228.5 182.1 C231.7 186.7 230.3 188.3 229.5 190.8 C228.8 193.4 226.5 196.5 224.1 197.6 C221.7 198.7 220.5 200.4 215.4 197.6 C210.3 194.8 200.8 186 193.6 181 C186.3 176.1 179.9 170.7 171.8 167.9 C163.6 165.2 154.5 164 144.5 164.7 C134.5 165.4 121.8 167.9 111.8 172.3 C101.8 176.7 90.9 186.9 84.5 190.8 C78.2 194.8 76.9 195.9 73.6 195.8 C70.3 195.6 66.6 192.4 64.9 189.8 C63.2 187.1 63.2 183.2 63.6 179.9 C63.9 176.7 61.8 174.7 67.1 170.1 Z" fill="none" stroke="#000" stroke-width="5.5" stroke-linejoin="round" stroke-linecap="round"/><ellipse cx="218.1" cy="179.9" rx="3.4" ry="7.5" fill="#fff" transform="rotate(-22 218.1 179.9)"/></svg></div>
<span class="t" style="left:503.5px;top:1489.8px;font-size:23px;line-height:23px;color:#3f97f6;letter-spacing:1.020px;-webkit-text-stroke:0.55px #3f97f6;">object - 8 (400)</span>
<div class="tile" style="left:761px;top:1219px"><svg width="300" height="300" viewBox="0 0 300 300"><path d="M174.5 133.9 C171.7 128.8 165.2 124.6 166.2 118.8 C167.2 113 175.7 105.8 180.5 99.2 C183.3 104.3 189.8 108.5 188.8 114.3 C187.8 120.1 179.3 127.3 174.5 133.9 Z" fill="#4fb2d6" stroke="#000" stroke-width="2.4" stroke-linejoin="round" stroke-linecap="round"/><path d="M174.5 133.9 C175.6 130.8 177.3 127.7 177.8 124.8 C178.3 122 177.3 119.4 177.5 116.5 C177.7 113.7 178.5 110.8 179 107.9" fill="none" stroke="#1d5f7a" stroke-width="0.9" stroke-linejoin="round" stroke-linecap="round"/><path d="M165.5 135.4 C160.4 134.9 154.4 130.3 150.4 133.9 C146.4 137.4 144.4 148.9 141.4 156.4 C146.9 156.9 153.9 161.4 157.9 157.9 C161.9 154.4 163 142.9 165.5 135.4 Z" fill="#4fb2d6" stroke="#000" stroke-width="2.4" stroke-linejoin="round" stroke-linecap="round"/><path d="M165.5 135.4 C163.8 137.8 162.3 140.8 160.4 142.6 C158.5 144.3 156.3 144.5 154.2 145.9 C152.1 147.3 149.9 149.4 147.8 151.2" fill="none" stroke="#1d5f7a" stroke-width="0.9" stroke-linejoin="round" stroke-linecap="round"/><path d="M165.5 130.1 C168.5 131.8 170 131.5 174.5 135.4 C179 139.2 187.5 145.9 192.6 153.4 C197.6 160.9 200.8 171.5 204.6 180.5 C208.4 189.5 211.1 199.8 215.1 207.6 C219.1 215.4 224.2 220.8 228.7 227.5" fill="none" stroke="#000" stroke-width="5.2" stroke-linejoin="round" stroke-linecap="round"/><path d="M165.5 130.1 C168.5 131.8 170 131.5 174.5 135.4 C179 139.2 187.5 145.9 192.6 153.4 C197.6 160.9 200.8 171.5 204.6 180.5 C208.4 189.5 211.1 199.8 215.1 207.6 C219.1 215.4 224.2 220.8 228.7 227.5" fill="none" stroke="#4fb2d6" stroke-width="2.2" stroke-linejoin="round" stroke-linecap="round"/><path d="M195.6 148.9 C199.6 144.9 200.6 136.7 207.6 136.9 C214.6 137 227.7 145.4 237.7 149.7 C231.2 154.4 225.2 164.1 218.1 164 C211.1 163.8 203.1 153.9 195.6 148.9 Z" fill="#4fb2d6" stroke="#000" stroke-width="2.4" stroke-linejoin="round" stroke-linecap="round"/><path d="M195.6 148.9 C198.7 149.9 202.2 151.6 205.1 151.8 C207.9 152.1 209.5 150.7 212.9 150.4 C216.2 150.1 221.1 150.2 225.3 150" fill="none" stroke="#1d5f7a" stroke-width="0.9" stroke-linejoin="round" stroke-linecap="round"/><path d="M191.8 158.7 C186 157.9 179.4 152.8 174.5 156.4 C169.6 160.1 166.5 172.5 162.5 180.5 C169 181 177.1 185.7 182 182 C186.9 178.4 188.5 166.5 191.8 158.7 Z" fill="#4fb2d6" stroke="#000" stroke-width="2.4" stroke-linejoin="round" stroke-linecap="round"/><path d="M191.8 158.7 C189.7 161.1 187.9 164.2 185.6 166 C183.4 167.8 180.8 167.7 178.3 169.2 C175.7 170.7 173 173 170.4 174.9" fill="none" stroke="#1d5f7a" stroke-width="0.9" stroke-linejoin="round" stroke-linecap="round"/><path d="M219.6 203.1 C223.7 200.3 226.3 192.9 231.7 194.8 C237.1 196.7 245.2 207.9 252 214.4 C247.2 215.6 243.1 220 237.7 218.1 C232.3 216.3 225.7 208.1 219.6 203.1 Z" fill="#4fb2d6" stroke="#000" stroke-width="2.4" stroke-linejoin="round" stroke-linecap="round"/><path d="M219.6 203.1 C222.3 204.3 225.1 206.1 227.7 206.6 C230.2 207.2 232.1 205.8 234.7 206.5 C237.3 207.1 240.5 209.1 243.4 210.4" fill="none" stroke="#1d5f7a" stroke-width="0.9" stroke-linejoin="round" stroke-linecap="round"/><path d="M213.6 206.1 C208.6 205.1 203.3 199.3 198.6 203.1 C193.8 206.9 189.5 220.1 185 228.7 C191.5 229.2 199.8 233.9 204.6 230.2 C209.4 226.4 210.6 214.1 213.6 206.1 Z" fill="#4fb2d6" stroke="#000" stroke-width="2.4" stroke-linejoin="round" stroke-linecap="round"/><path d="M213.6 206.1 C211.8 208.6 210.1 211.8 208.1 213.5 C206.1 215.3 204 215.1 201.6 216.6 C199.1 218.2 196.1 220.6 193.3 222.7" fill="none" stroke="#1d5f7a" stroke-width="0.9" stroke-linejoin="round" stroke-linecap="round"/><path d="M228.7 227.9 C225.2 231.7 217.1 233.2 218.1 239.2 C219.1 245.2 229.2 255.8 234.7 264 C237.2 258.3 243.2 252.8 242.2 246.7 C241.2 240.7 233.2 234.2 228.7 227.9 Z" fill="#4fb2d6" stroke="#000" stroke-width="2.4" stroke-linejoin="round" stroke-linecap="round"/><path d="M228.7 227.9 C229.6 230.6 231.1 233.5 231.4 236.1 C231.6 238.6 230 240.1 230.2 243 C230.4 245.9 231.7 250 232.4 253.5" fill="none" stroke="#1d5f7a" stroke-width="0.9" stroke-linejoin="round" stroke-linecap="round"/><path d="M160.9 69.9 C159.4 77.7 160.7 87.3 156.4 93.2 C152.2 99.1 142.4 103.8 135.4 105.3 C128.3 106.8 117 104.8 114.3 102.2 C111.5 99.7 113.8 92.7 118.8 90.2 C123.8 87.7 137.4 90.6 144.4 87.2 C151.4 83.8 155.4 75.7 160.9 69.9 Z" fill="#d3b0dc" stroke="#000" stroke-width="2.4" stroke-linejoin="round" stroke-linecap="round"/><path d="M120.3 93.2 C124.8 91.5 138.6 92 144.4 90.2 C150.2 88.4 153.4 81.9 154.9 82.7 C156.4 83.4 156.7 91.2 153.4 94.7 C150.2 98.2 141.4 102.7 135.4 103.8 C129.3 104.8 119.8 102.5 117.3 100.7 C114.8 99 115.8 95 120.3 93.2 Z" fill="#a98fb5"/><path d="M160.9 69.9 C159.4 77.7 160.7 87.3 156.4 93.2 C152.2 99.1 142.4 103.8 135.4 105.3 C128.3 106.8 117 104.8 114.3 102.2 C111.5 99.7 113.8 92.7 118.8 90.2 C123.8 87.7 137.4 90.6 144.4 87.2 C151.4 83.8 155.4 75.7 160.9 69.9 Z" fill="none" stroke="#000" stroke-width="2.4" stroke-linejoin="round" stroke-linecap="round"/><path d="M135.4 108.3 C139.6 108.3 151.9 116 157.9 120.3 C164 124.6 167 129.3 171.5 133.9 C166 132.3 159.9 129.6 154.9 129.3 C149.9 129.1 145.1 133.9 141.4 132.3 C137.6 130.8 133.4 124.3 132.3 120.3 C131.3 116.3 131.1 108.3 135.4 108.3 Z" fill="#d3b0dc" stroke="#000" stroke-width="2.4" stroke-linejoin="round" stroke-linecap="round"/><path d="M135.4 109.8 C138.1 109.8 148.2 117.3 150.4 120.3 C152.7 123.3 150.7 126.1 148.9 127.8 C147.1 129.6 142.4 132.1 139.9 130.8 C137.4 129.6 134.6 123.8 133.9 120.3 C133.1 116.8 132.6 109.8 135.4 109.8 Z" fill="#a98fb5"/><path d="M135.4 108.3 C139.6 108.3 151.9 116 157.9 120.3 C164 124.6 167 129.3 171.5 133.9 C166 132.3 159.9 129.6 154.9 129.3 C149.9 129.1 145.1 133.9 141.4 132.3 C137.6 130.8 133.4 124.3 132.3 120.3 C131.3 116.3 131.1 108.3 135.4 108.3 Z" fill="none" stroke="#000" stroke-width="2.4" stroke-linejoin="round" stroke-linecap="round"/><path d="M40.5 72.1 C52.1 72.6 65.1 71.9 75.2 73.6 C85.2 75.4 96.2 76.4 100.7 82.7 C105.3 89 105.8 107.3 102.2 111.3 C98.7 115.3 86.9 110.3 79.7 106.8 C72.4 103.2 65.1 96 58.6 90.2 C52.1 84.4 46.6 78.2 40.5 72.1 Z" fill="#d3b0dc" stroke="#000" stroke-width="2.4" stroke-linejoin="round" stroke-linecap="round"/><path d="M87.2 79.7 C89.7 78 98.3 78.3 100.7 83.4 C103.2 88.6 103.7 106.4 101.9 110.5 C100.2 114.7 92.9 111.2 90.2 108.3 C87.5 105.4 86.2 98 85.7 93.2 C85.2 88.4 84.7 81.3 87.2 79.7 Z" fill="#a98fb5"/><path d="M40.5 72.1 C52.1 72.6 65.1 71.9 75.2 73.6 C85.2 75.4 96.2 76.4 100.7 82.7 C105.3 89 105.8 107.3 102.2 111.3 C98.7 115.3 86.9 110.3 79.7 106.8 C72.4 103.2 65.1 96 58.6 90.2 C52.1 84.4 46.6 78.2 40.5 72.1 Z" fill="none" stroke="#000" stroke-width="2.4" stroke-linejoin="round" stroke-linecap="round"/><path d="M106.8 39 C111.3 46.1 117 53.3 120.3 60.1 C123.6 66.9 126.8 73.1 126.3 79.7 C125.8 86.2 121.6 95.5 117.3 99.2 C113 103 104.3 103.8 100.7 102.2 C97.2 100.7 95 96 96.2 90.2 C97.5 84.4 106.5 76.2 108.3 67.6 C110 59.1 107.3 48.6 106.8 39 Z" fill="#d3b0dc" stroke="#000" stroke-width="2.4" stroke-linejoin="round" stroke-linecap="round"/><path d="M109.8 48.1 C110.5 45.3 116.4 57.8 118.8 63.1 C121.2 68.4 124.4 73.9 124.1 79.7 C123.7 85.4 119.2 94.5 116.5 97.7 C113.9 101 108.6 102.2 108.3 99.2 C107.9 96.2 114 88.2 114.3 79.7 C114.5 71.1 109 50.8 109.8 48.1 Z" fill="#a98fb5"/><path d="M106.8 39 C111.3 46.1 117 53.3 120.3 60.1 C123.6 66.9 126.8 73.1 126.3 79.7 C125.8 86.2 121.6 95.5 117.3 99.2 C113 103 104.3 103.8 100.7 102.2 C97.2 100.7 95 96 96.2 90.2 C97.5 84.4 106.5 76.2 108.3 67.6 C110 59.1 107.3 48.6 106.8 39 Z" fill="none" stroke="#000" stroke-width="2.4" stroke-linejoin="round" stroke-linecap="round"/><path d="M105.3 105.3 C102.6 103.2 105.3 96.1 107.5 93.2 C109.8 90.3 115.4 87.7 118.8 87.9 C122.2 88.2 127.1 91.8 127.8 94.7 C128.6 97.6 127.1 103.5 123.3 105.3 C119.6 107 107.9 107.3 105.3 105.3 Z" fill="#a98fb5" stroke="#000" stroke-width="2.4" stroke-linejoin="round" stroke-linecap="round"/><path d="M116.5 103.8 C119.8 98.2 123.6 93.2 126.3 87.2 C129.1 81.2 131.8 73.6 133.1 67.6 C134.4 61.6 134.7 55.7 133.9 51.1 C133 46.4 129.8 43.5 127.8 39.8" fill="none" stroke="#000" stroke-width="5.4" stroke-linejoin="round" stroke-linecap="round"/><path d="M116.5 103.8 C119.8 98.2 123.6 93.2 126.3 87.2 C129.1 81.2 131.8 73.6 133.1 67.6 C134.4 61.6 134.7 55.7 133.9 51.1 C133 46.4 129.8 43.5 127.8 39.8" fill="none" stroke="#f0dcae" stroke-width="2.6" stroke-linejoin="round" stroke-linecap="round"/><path d="M126.3 107.1 C132.3 105.9 139.1 103.9 144.4 103.4 C149.7 103 154 103.8 157.9 104.5 C161.8 105.2 164.5 106.5 167.7 107.5" fill="none" stroke="#000" stroke-width="5.0" stroke-linejoin="round" stroke-linecap="round"/><path d="M126.3 107.1 C132.3 105.9 139.1 103.9 144.4 103.4 C149.7 103 154 103.8 157.9 104.5 C161.8 105.2 164.5 106.5 167.7 107.5" fill="none" stroke="#f0dcae" stroke-width="2.4" stroke-linejoin="round" stroke-linecap="round"/><path d="M102.2 108.3 C106.8 106.3 120.3 105.8 126.3 108.3 C132.3 110.8 135.7 116.8 138.4 123.3 C141 129.8 142.6 140.4 142.1 147.4 C141.6 154.4 137.6 159.4 135.4 165.5 C130.3 160.4 125.3 155.4 120.3 150.4 C115.3 145.4 108.8 140.4 105.3 135.4 C101.7 130.3 99.7 124.8 99.2 120.3 C98.7 115.8 97.7 110.3 102.2 108.3 Z" fill="#d3b0dc" stroke="#000" stroke-width="2.4" stroke-linejoin="round" stroke-linecap="round"/><path d="M102.2 109.8 C105.6 108.8 116.3 112 120.3 114.3 C124.3 116.5 126.3 119.8 126.3 123.3 C126.3 126.8 120.3 130.8 120.3 135.4 C120.3 139.9 124.1 145.9 126.3 150.4 C128.6 154.9 134.9 162.7 133.9 162.5 C132.8 162.2 125.1 153.7 120.3 148.9 C115.5 144.1 108.6 138.6 105.3 133.9 C101.9 129.1 100.5 124.3 100 120.3 C99.5 116.3 98.9 110.8 102.2 109.8 Z" fill="#a98fb5"/><path d="M102.2 108.3 C106.8 106.3 120.3 105.8 126.3 108.3 C132.3 110.8 135.7 116.8 138.4 123.3 C141 129.8 142.6 140.4 142.1 147.4 C141.6 154.4 137.6 159.4 135.4 165.5 C130.3 160.4 125.3 155.4 120.3 150.4 C115.3 145.4 108.8 140.4 105.3 135.4 C101.7 130.3 99.7 124.8 99.2 120.3 C98.7 115.8 97.7 110.3 102.2 108.3 Z" fill="none" stroke="#000" stroke-width="2.4" stroke-linejoin="round" stroke-linecap="round"/><path d="M106.6 110 C108.3 111.3 113.7 115 116.9 117.8 C120.1 120.6 123.9 124.5 125.9 126.7 C127.8 128.9 127.9 130.3 128.4 131 C128.9 131.6 129.1 131.6 128.8 130.7 C128.5 129.9 128.7 128.3 126.8 125.9 C124.9 123.6 121 119.6 117.7 116.8 C114.4 114.1 108.8 110.7 106.9 109.6 C105.1 108.4 105 108.6 106.6 110 Z" fill="#000"/></svg></div>
<span class="t" style="left:826.2px;top:1489.8px;font-size:23px;line-height:23px;color:#3f97f6;letter-spacing:0.920px;-webkit-text-stroke:0.55px #3f97f6;">object - 7 (400)</span>
<div class="tile" style="left:1083px;top:1219px"><svg width="300" height="300" viewBox="0 0 300 300"><path d="M132.3 39.8 C123 40.3 111.8 42.4 102.2 48.1 C92.7 53.7 82.9 64.6 75.1 73.6 C67.4 82.7 59.7 91.9 55.6 102.2 C51.4 112.5 50.8 124.8 50.3 135.3 C49.8 145.9 50.9 154.1 52.6 165.4 C54.2 176.7 58.4 194.6 60.1 203 C61.8 211.4 61.9 211.6 62.8 215.8 C57.4 219.1 49.4 221.5 46.6 225.6 C43.7 229.7 44.5 235.6 45.8 240.7 C47.1 245.7 50.9 252.6 54.1 255.7 C57.2 258.8 56.1 259.5 64.6 259 C73.1 258.5 90.9 256 105.2 252.7 C119.5 249.4 136.6 244.9 150.4 239.1 C164.2 233.4 176.7 226.4 188 218.1 C199.3 209.8 209.8 199.5 218.1 189.5 C226.4 179.5 233.3 167.3 237.6 157.9 C242 148.5 242.2 141.3 244.4 133.1 C246.4 132.8 249.3 134.2 250.4 132.3 C251.6 130.4 252.1 126.3 251.5 121.8 C250.9 117.3 248.5 110.8 247 105.2 C248.4 101.2 251.4 96.9 251.2 93.2 C250.9 89.5 247.4 86.4 245.5 83 C243.1 80.9 240.8 78.8 238.4 76.6 C240.4 75.1 242.4 73.6 244.4 72.1 C237.4 64.9 230.4 57.6 223.3 50.3 C215.8 53.3 208.3 56.3 200.8 59.3 C201 61.8 202.7 65.2 201.5 66.9 C200.4 68.5 196.5 69.3 194 69.4 C191.5 69.5 188.9 67.5 186.5 67.6 C184.1 67.8 182 69.4 179.7 70.3 C177.9 69.4 176 68.5 174.1 67.6 C177 65.5 182.7 63.6 182.7 61.3 C182.8 59 178.6 56.8 174.4 54.1 C170.3 51.4 164.9 47.4 157.9 45 C150.9 42.7 141.6 39.3 132.3 39.8 Z" fill="#f9dfc0" stroke="#000" stroke-width="5.7" stroke-linejoin="round" stroke-linecap="round"/><clipPath id="cn"><path d="M132.3 39.8 C123 40.3 111.8 42.4 102.2 48.1 C92.7 53.7 82.9 64.6 75.1 73.6 C67.4 82.7 59.7 91.9 55.6 102.2 C51.4 112.5 50.8 124.8 50.3 135.3 C49.8 145.9 50.9 154.1 52.6 165.4 C54.2 176.7 58.4 194.6 60.1 203 C61.8 211.4 61.9 211.6 62.8 215.8 C57.4 219.1 49.4 221.5 46.6 225.6 C43.7 229.7 44.5 235.6 45.8 240.7 C47.1 245.7 50.9 252.6 54.1 255.7 C57.2 258.8 56.1 259.5 64.6 259 C73.1 258.5 90.9 256 105.2 252.7 C119.5 249.4 136.6 244.9 150.4 239.1 C164.2 233.4 176.7 226.4 188 218.1 C199.3 209.8 209.8 199.5 218.1 189.5 C226.4 179.5 233.3 167.3 237.6 157.9 C242 148.5 242.2 141.3 244.4 133.1 C246.4 132.8 249.3 134.2 250.4 132.3 C251.6 130.4 252.1 126.3 251.5 121.8 C250.9 117.3 248.5 110.8 247 105.2 C248.4 101.2 251.4 96.9 251.2 93.2 C250.9 89.5 247.4 86.4 245.5 83 C243.1 80.9 240.8 78.8 238.4 76.6 C240.4 75.1 242.4 73.6 244.4 72.1 C237.4 64.9 230.4 57.6 223.3 50.3 C215.8 53.3 208.3 56.3 200.8 59.3 C201 61.8 202.7 65.2 201.5 66.9 C200.4 68.5 196.5 69.3 194 69.4 C191.5 69.5 188.9 67.5 186.5 67.6 C184.1 67.8 182 69.4 179.7 70.3 C177.9 69.4 176 68.5 174.1 67.6 C177 65.5 182.7 63.6 182.7 61.3 C182.8 59 178.6 56.8 174.4 54.1 C170.3 51.4 164.9 47.4 157.9 45 C150.9 42.7 141.6 39.3 132.3 39.8 Z"/></clipPath><g clip-path="url(#cn)"><path d="M45 75.1 C50.1 52.1 64.6 77.4 75.1 79.7 C85.7 81.9 104.7 84.9 108.2 88.7 C111.8 92.4 99.7 96 96.2 102.2 C92.7 108.5 89.2 115.8 87.2 126.3 C85.2 136.8 85.7 154.4 84.2 165.4 C82.7 176.5 81.4 184.6 78.1 192.5 C74.9 200.4 70.1 208.6 64.6 212.8 C59.1 217.1 48.3 241 45 218.1 C41.8 195.1 40 98.2 45 75.1 Z" fill="#f7dccb"/><path d="M75.1 82.7 C80.7 81.7 103.7 85.2 106.7 89 C109.7 92.7 96.7 98 93.2 105.2 C89.7 112.5 88.7 130.8 85.7 132.3 C82.7 133.8 77.1 120.5 75.1 114.3 C73.1 108 73.6 100 73.6 94.7 C73.6 89.4 69.6 83.6 75.1 82.7 Z" fill="#c5ad9d"/><path d="M114.3 75.1 C118.3 72.6 135.3 70.9 144.4 67.6 C153.4 64.4 162.2 56.6 168.4 55.6 C174.7 54.6 181 59.3 182 61.6 C183 63.9 177.5 66.7 174.4 69.1 C171.4 71.5 167.2 73.9 163.9 75.9 C160.7 77.9 157.1 79 154.9 81.2 C152.6 83.3 153.6 87.5 150.4 89 C147.1 90.5 140.3 91.2 135.3 90.2 C130.3 89.1 123.8 85.2 120.3 82.7 C116.8 80.2 110.2 77.6 114.3 75.1 Z" fill="#c9b293"/><path d="M102.2 57.8 C102.7 57.3 110.8 56.1 114.3 57.1 C117.8 58.1 123.8 63.4 123.3 63.9 C122.8 64.4 114.8 61.1 111.3 60.1 C107.7 59.1 101.7 58.3 102.2 57.8 Z" fill="#fcefdf"/><path d="M124.8 45.8 C125 45.3 132.3 43.9 135.3 45 C138.3 46.2 143.1 52.1 142.8 52.6 C142.6 53.1 136.8 49.2 133.8 48.1 C130.8 46.9 124.5 46.3 124.8 45.8 Z" fill="#fcefdf"/><path d="M96.2 102.2 C99.2 98 101.7 96.2 108.2 94.7 C114.8 93.2 127.1 92.2 135.3 93.2 C143.6 94.2 150.4 97.2 157.9 100.7 C165.4 104.2 179.7 111.5 180.5 114.3 C181.2 117 169.9 115.3 162.4 117.3 C154.9 119.3 143.4 121.3 135.3 126.3 C127.3 131.3 120 139.6 114.3 147.4 C108.5 155.1 105.2 162.4 100.7 172.9 C96.2 183.5 91.9 199.8 87.2 210.6 C82.4 221.3 75.9 230.6 72.1 237.6 C68.4 244.7 67.9 250.7 64.6 252.7 C61.3 254.7 55.2 253.2 52.6 249.7 C49.9 246.2 46.3 237.3 48.8 231.6 C51.3 226 62 223.1 67.6 215.8 C73.3 208.6 79.2 198.9 82.7 188 C86.2 177.1 87.4 161.7 88.7 150.4 C89.9 139.1 88.9 128.3 90.2 120.3 C91.4 112.3 93.2 106.5 96.2 102.2 Z" fill="#c9b293"/><path d="M154.9 81.9 C155.9 78.1 161.2 78.5 165.4 78.1 C169.7 77.8 176.7 78.1 180.5 79.7 C184.2 81.2 187.5 83.7 188 87.2 C188.5 90.7 184.2 96.7 183.5 100.7 C182.7 104.7 181.5 108 183.5 111.3 C185.5 114.5 197 120.3 195.5 120.3 C194 120.3 180.5 114.5 174.4 111.3 C168.4 108 162.7 105.6 159.4 100.7 C156.1 95.8 153.9 85.7 154.9 81.9 Z" fill="#c9b293"/><path d="M179 69.9 C179 67.9 186 66.7 189.5 67.6 C193 68.5 197.5 72.9 200 75.1 C202.5 77.4 204.5 79.4 204.5 81.2 C204.5 82.9 202.5 85.9 200 85.7 C197.5 85.4 193 82.3 189.5 79.7 C186 77 179 71.9 179 69.9 Z" fill="#c9b293"/><path d="M203 60.8 L221.1 54.8 L224.1 61.6 L215.1 67.6 L209.1 73.6 Z" fill="#c9b293"/><path d="M195.5 108.2 C195.5 107 210.6 110.2 218.1 111.3 C225.6 112.3 236.6 112.8 240.7 114.3 C244.7 115.8 245.9 119.5 242.2 120.3 C238.4 121 225.9 120.8 218.1 118.8 C210.3 116.8 195.5 109.5 195.5 108.2 Z" fill="#fcefdf"/><path d="M209.1 85.7 C210.1 84.7 223.3 86.4 228.6 87.2 C233.9 87.9 238.9 88.9 240.7 90.2 C242.4 91.4 242.2 94.2 239.1 94.7 C236.1 95.2 227.6 94.7 222.6 93.2 C217.6 91.7 208.1 86.7 209.1 85.7 Z" fill="#fcefdf"/><path d="M218.1 70.6 C219.1 69.5 227.6 67.4 230.1 67.6 C232.6 67.9 234.1 71 233.1 72.1 C232.1 73.3 226.6 74.6 224.1 74.4 C221.6 74.1 217.1 71.8 218.1 70.6 Z" fill="#fcefdf"/></g><path d="M132.3 39.8 C123 40.3 111.8 42.4 102.2 48.1 C92.7 53.7 82.9 64.6 75.1 73.6 C67.4 82.7 59.7 91.9 55.6 102.2 C51.4 112.5 50.8 124.8 50.3 135.3 C49.8 145.9 50.9 154.1 52.6 165.4 C54.2 176.7 58.4 194.6 60.1 203 C61.8 211.4 61.9 211.6 62.8 215.8 C57.4 219.1 49.4 221.5 46.6 225.6 C43.7 229.7 44.5 235.6 45.8 240.7 C47.1 245.7 50.9 252.6 54.1 255.7 C57.2 258.8 56.1 259.5 64.6 259 C73.1 258.5 90.9 256 105.2 252.7 C119.5 249.4 136.6 244.9 150.4 239.1 C164.2 233.4 176.7 226.4 188 218.1 C199.3 209.8 209.8 199.5 218.1 189.5 C226.4 179.5 233.3 167.3 237.6 157.9 C242 148.5 242.2 141.3 244.4 133.1 C246.4 132.8 249.3 134.2 250.4 132.3 C251.6 130.4 252.1 126.3 251.5 121.8 C250.9 117.3 248.5 110.8 247 105.2 C248.4 101.2 251.4 96.9 251.2 93.2 C250.9 89.5 247.4 86.4 245.5 83 C243.1 80.9 240.8 78.8 238.4 76.6 C240.4 75.1 242.4 73.6 244.4 72.1 C237.4 64.9 230.4 57.6 223.3 50.3 C215.8 53.3 208.3 56.3 200.8 59.3 C201 61.8 202.7 65.2 201.5 66.9 C200.4 68.5 196.5 69.3 194 69.4 C191.5 69.5 188.9 67.5 186.5 67.6 C184.1 67.8 182 69.4 179.7 70.3 C177.9 69.4 176 68.5 174.1 67.6 C177 65.5 182.7 63.6 182.7 61.3 C182.8 59 178.6 56.8 174.4 54.1 C170.3 51.4 164.9 47.4 157.9 45 C150.9 42.7 141.6 39.3 132.3 39.8 Z" fill="none" stroke="#000" stroke-width="5.7" stroke-linejoin="round" stroke-linecap="round"/><path d="M72.1 78.9 C78.1 79.1 84.2 77.8 90.2 79.4 C96.2 80.9 107.1 84.6 108.2 88.4 C109.4 92.2 100.3 95.9 97 102.2 C93.6 108.5 90 115.8 87.9 126.3 C85.8 136.8 86 154.4 84.5 165.4 C82.9 176.5 81.9 184.4 78.5 192.5 C75 200.7 68.7 207 63.9 214.3" fill="none" stroke="#000" stroke-width="4.6" stroke-linejoin="round" stroke-linecap="round"/><path d="M108.2 89 C117.3 89.5 128.3 90.5 135.3 90.5 C142.3 90.5 147.1 90.5 150.4 89 C153.6 87.5 152.6 83.6 154.9 81.5 C157.1 79.3 160 76.4 163.9 75.9 C167.8 75.4 173.4 77.6 178.2 78.5" fill="none" stroke="#000" stroke-width="4.6" stroke-linejoin="round" stroke-linecap="round"/><path d="M154.9 81.9 C155.9 87.7 153.6 93.8 157.9 99.2 C162.2 104.6 171.7 109.7 180.5 114.3 C189.2 118.8 201 123.7 210.6 126.3 C220.1 128.9 231.9 130.1 237.6 130.1 C243.4 130.1 242.7 127.6 245.2 126.3" fill="none" stroke="#000" stroke-width="4.6" stroke-linejoin="round" stroke-linecap="round"/><path d="M174.4 68.8 C177 70.9 178 73.6 182 75.1 C186 76.6 194.3 77.8 198.5 77.8 C202.8 77.8 204.5 76 207.6 75.1" fill="none" stroke="#000" stroke-width="4.6" stroke-linejoin="round" stroke-linecap="round"/><path d="M180.5 71.4 C185.5 74.4 189.2 76.3 195.5 80.4 C201.8 84.5 209.6 92.1 218.1 96.2 C226.6 100.3 237.1 102.2 246.7 105.2" fill="none" stroke="#000" stroke-width="4.6" stroke-linejoin="round" stroke-linecap="round"/><path d="M201.5 66.9 C203.5 69.1 204.5 71.7 207.6 73.6 C210.6 75.6 214.4 77.9 219.6 78.5 C224.7 79 232.1 77.4 238.4 76.9" fill="none" stroke="#000" stroke-width="4.6" stroke-linejoin="round" stroke-linecap="round"/><path d="M161.1 117.6 C158.7 119.6 153.2 125 149.3 131.7 C145.4 138.3 141.3 148.6 137.6 157.6 C134 166.6 129.1 180.9 127.5 185.6 C125.9 190.3 126.2 190.4 128.1 185.8 C130 181.3 135.2 167 139 158.2 C142.9 149.4 147.3 139.3 151.4 133 C155.5 126.6 162.1 122.5 163.7 119.9 C165.3 117.4 163.5 115.7 161.1 117.6 Z" fill="#000"/><path d="M194 126.9 C194.6 129.5 201 134.4 200.4 141.2 C199.8 148.1 196 159 190.4 168.1 C184.8 177.1 170.6 190.7 166.7 195.3 C162.9 200 163 200.1 167.1 195.7 C171.3 191.3 185.7 177.8 191.6 168.8 C197.5 159.8 201.8 148.7 202.7 141.5 C203.6 134.3 198.4 128.1 197 125.7 C195.6 123.3 193.5 124.3 194 126.9 Z" fill="#000"/><path d="M237.8 128.9 C235.7 129.6 228.8 132 226.6 135.6 C224.4 139.1 224.9 145.2 224.7 150.3 C224.5 155.4 225.2 163.5 225.4 166.2 C225.5 168.8 225.8 168.8 225.9 166.2 C225.9 163.5 225.5 155.3 225.9 150.4 C226.3 145.5 226 139.8 228.2 136.6 C230.4 133.4 237.4 132.5 239 131.2 C240.6 129.9 239.8 128.2 237.8 128.9 Z" fill="#000"/><path d="M56.1 150.4 C56.7 155.4 58 171.2 59.7 180.5 C61.4 189.8 65 202 66.3 206.2 C67.6 210.4 68.4 210.2 67.4 205.9 C66.5 201.6 62.3 189.6 60.5 180.4 C58.7 171.1 57.3 155.3 56.5 150.3 C55.8 145.3 55.6 145.4 56.1 150.4 Z" fill="#c5ad9d"/></svg></div>
<span class="t" style="left:1147.5px;top:1489.8px;font-size:23px;line-height:23px;color:#3f97f6;letter-spacing:1.020px;-webkit-text-stroke:0.55px #3f97f6;">object - 6 (400)</span>
<div id="vdiv"></div><div id="rpanel"></div><div id="hdiv"></div>
<svg class="abs" style="left:1640px;top:250px" width="230" height="50" viewBox="1640 250 230 50"><g fill="none" stroke="#a9a9a9" stroke-width="3"><rect x="1667.6" y="259.9" width="10.8" height="6"/><rect x="1655" y="265.8" width="35.7" height="14.3"/><path d="M1657.6 280 V289.8 H1688.4 V280"/></g><rect x="1660.6" y="278" width="5.4" height="4.2" rx="2" fill="#a9a9a9"/><rect x="1680.2" y="278" width="5.4" height="4.2" rx="2" fill="#a9a9a9"/><rect x="1739" y="262" width="34" height="26" fill="none" stroke="#3b8af7" stroke-width="4"/><rect x="1745" y="268" width="6.2" height="6.2" fill="#3b8af7"/><rect x="1761" y="268" width="6.2" height="6.2" fill="#3b8af7"/><g fill="#b2b2b2"><rect x="1819" y="260" width="38.2" height="8.2"/><rect x="1819" y="270.9" width="38.2" height="8.2"/><rect x="1819" y="281.8" width="38.2" height="8.2"/></g><g fill="#323232"><rect x="1822" y="263" width="21.2" height="2.3"/><rect x="1822" y="273.9" width="21.2" height="2.3"/><rect x="1822" y="284.8" width="21.2" height="2.3"/><circle cx="1853" cy="264.1" r="2"/><circle cx="1853" cy="275" r="2"/><circle cx="1853" cy="285.9" r="2"/></g></svg>

<div id="list"></div>
<div class="row" style="top:373px;background:#ffffff"></div>
<div class="cb0" style="left:1471px;top:391px"></div>
<span class="t" style="left:1507.9px;top:394.0px;font-size:24px;line-height:24px;color:#000000;letter-spacing:0.087px;">Enabled</span>
<span class="t" style="left:1888.9px;top:394.7px;font-size:22px;line-height:22px;color:#a0a0a0;letter-spacing:0.533px;">Test:</span>
<span class="t" style="left:1471.8px;top:438.9px;font-size:22px;line-height:22px;color:#454545;letter-spacing:0.756px;">EACBE825-9F2F-4088-B3E5-69BD1EBC48AC</span>
<div class="abs" style="left:1965px;top:392px;width:68px;height:26px;border:2px solid #8a8a8a"></div>
<div class="row" style="top:473px;background:#484848"></div>
<div class="cb" style="left:1471px;top:491px"><svg width="28" height="28" viewBox="0 0 28 28"><path d="M6 14.8 L12.6 21 L22 7.6" fill="none" stroke="#eef2fd" stroke-width="3.1" stroke-linecap="round" stroke-linejoin="round"/></svg>
</div>
<span class="t" style="left:1507.9px;top:494.0px;font-size:24px;line-height:24px;color:#e6e6e6;letter-spacing:0.087px;">Enabled</span>
<span class="t" style="left:1888.9px;top:494.7px;font-size:22px;line-height:22px;color:#8c8c8c;letter-spacing:0.533px;">Test:</span>
<span class="t" style="left:1471.8px;top:538.9px;font-size:22px;line-height:22px;color:#c6c6c6;letter-spacing:1.072px;">8314AB47-F793-4D9A-94AA-F8201A5A5927</span>
<div class="abs" style="left:1955px;top:482px;width:88px;height:46px;background:rgba(255,255,255,0.13);border:1px solid rgba(255,255,255,0.1)"><div class="abs" style="left:9px;top:9px;width:68px;height:26px;border:2px solid #878787;background:#484848"></div></div>
<div class="row" style="top:573px;background:#8aacb8"></div>
<div class="cb" style="left:1471px;top:591px"><svg width="28" height="28" viewBox="0 0 28 28"><path d="M6 14.8 L12.6 21 L22 7.6" fill="none" stroke="#eef2fd" stroke-width="3.1" stroke-linecap="round" stroke-linejoin="round"/></svg>
</div>
<span class="t" style="left:1507.9px;top:594.0px;font-size:24px;line-height:24px;color:#000000;letter-spacing:0.087px;">Enabled</span>
<span class="t" style="left:1888.9px;top:594.7px;font-size:22px;line-height:22px;color:#9cabb0;letter-spacing:0.533px;">Test:</span>
<span class="t" style="left:1471.8px;top:638.9px;font-size:22px;line-height:22px;color:#2a3a42;letter-spacing:0.923px;">0891F046-6520-4C7D-AAE9-B0032E7212EF</span>
<div class="abs" style="left:1955px;top:582px;width:88px;height:46px;background:rgba(255,255,255,0.16);border:1px solid rgba(255,255,255,0.12)"><div class="abs" style="left:9px;top:9px;width:68px;height:26px;border:2px solid #9d9795;background:#8aacb8"></div></div>
<div class="row" style="top:673px;background:#f5af5b"></div>
<div class="cb" style="left:1471px;top:691px"><svg width="28" height="28" viewBox="0 0 28 28"><path d="M6 14.8 L12.6 21 L22 7.6" fill="none" stroke="#eef2fd" stroke-width="3.1" stroke-linecap="round" stroke-linejoin="round"/></svg>
</div>
<span class="t" style="left:1507.9px;top:694.0px;font-size:24px;line-height:24px;color:#000000;letter-spacing:0.087px;">Enabled</span>
<span class="t" style="left:1888.9px;top:694.7px;font-size:22px;line-height:22px;color:#a9987e;letter-spacing:0.533px;">Test:</span>
<span class="t" style="left:1471.8px;top:738.9px;font-size:22px;line-height:22px;color:#4a3010;letter-spacing:0.955px;">3B46BAE7-9C27-4697-A516-C75B0AF9BF62</span>
<div class="abs" style="left:1955px;top:682px;width:88px;height:46px;background:rgba(255,255,255,0.2);border:1px solid rgba(255,255,255,0.15)"><div class="abs" style="left:9px;top:9px;width:68px;height:26px;border:2px solid #8f8b96;background:#f5af5b"></div></div>
<span class="t" style="left:1463.6px;top:792.9px;font-size:22px;line-height:22px;color:#dedede;letter-spacing:0.539px;">Color Preview</span>
<div id="prev"><svg width="590" height="594" viewBox="0 0 590 594"><g id="fishg"><circle cx="220.2" cy="414.6" r="50" fill="#000"/><circle cx="220.2" cy="414.6" r="42" fill="#9ab8c3"/><circle cx="217.2" cy="408.6" r="38" fill="#cbdde2"/><path d="M7.3 231.7 C9.2 221 21.6 207.6 31.3 198.5 C41 189.3 52.3 182.9 65.6 176.8 C79 170.7 96.1 165.3 111.4 161.9 C126.6 158.5 141.9 157.1 157.1 156.2 C172.4 155.2 187.6 155 202.9 156.2 C218.1 157.3 233.4 159.8 248.6 163 C263.8 166.3 282 169.7 294.3 175.6 C306.7 181.5 310.4 188.6 322.7 198.5 C335.1 208.4 355.9 224 368.5 235.1 C381.1 246.1 390.7 257.2 398.2 264.8 C405.7 272.4 411.5 275.7 413.6 280.8 C415.6 286 413 291.8 410.8 295.7 C408.6 299.6 404.9 302 400.5 304.2 C396.1 306.3 389.8 307.2 384.5 308.7 C402 307.7 416.9 305.6 437.1 305.5 C457.3 305.5 489.3 307.1 505.7 308.3 C522.1 309.4 525.6 311 535.5 312.4 C540 317.9 544.4 323.1 549.2 328.9 C554 334.7 561.3 342.2 564.1 347.2 C566.8 352.1 566.6 354 565.7 358.6 C564.7 363.2 561.5 368.9 558.3 374.6 C555.2 380.3 550.7 386.8 546.9 392.9 C539.7 394.1 532.4 395.2 525.2 396.3 C522.1 399 519.3 403 516 404.3 C512.8 405.7 515.1 407 505.7 404.3 C496.4 401.7 475.2 393.5 460 388.3 C444.7 383.2 426.7 377.6 414.2 373.5 C401.7 369.4 394.7 366.9 385 363.6 C387.1 369.6 389.5 375.6 391.4 381.5 C393.3 387.3 396.4 394.7 396.4 398.6 C396.4 402.5 393.7 403.9 391.4 404.8 C389 405.8 386.8 405 382.2 404.3 C377.6 403.7 373.8 401.3 363.9 400.9 C354 400.5 337.2 400.5 322.7 402.1 C308.3 403.6 285.5 408.3 277 410.1 C268.5 411.8 280 412 271.5 412.4 C262.9 412.7 239.1 412.9 225.7 412.4 C212.4 411.8 202.1 410.6 191.4 408.9 C180.7 407.2 174.3 407.8 161.7 402.1 C149.1 396.3 127.4 382.2 115.9 374.6 C104.5 367 101.5 363.9 93.1 356.3 C84.7 348.7 74 338.8 65.6 328.9 C57.2 319 50.4 307.9 42.7 296.8 C35.1 285.8 25.8 273.4 19.9 262.5 C14 251.7 5.4 242.3 7.3 231.7 Z" fill="#f7bc66" stroke="#000" stroke-width="8" stroke-linejoin="round" stroke-linecap="round"/><clipPath id="fb"><path d="M7.3 231.7 C9.2 221 21.6 207.6 31.3 198.5 C41 189.3 52.3 182.9 65.6 176.8 C79 170.7 96.1 165.3 111.4 161.9 C126.6 158.5 141.9 157.1 157.1 156.2 C172.4 155.2 187.6 155 202.9 156.2 C218.1 157.3 233.4 159.8 248.6 163 C263.8 166.3 282 169.7 294.3 175.6 C306.7 181.5 310.4 188.6 322.7 198.5 C335.1 208.4 355.9 224 368.5 235.1 C381.1 246.1 390.7 257.2 398.2 264.8 C405.7 272.4 411.5 275.7 413.6 280.8 C415.6 286 413 291.8 410.8 295.7 C408.6 299.6 404.9 302 400.5 304.2 C396.1 306.3 389.8 307.2 384.5 308.7 C402 307.7 416.9 305.6 437.1 305.5 C457.3 305.5 489.3 307.1 505.7 308.3 C522.1 309.4 525.6 311 535.5 312.4 C540 317.9 544.4 323.1 549.2 328.9 C554 334.7 561.3 342.2 564.1 347.2 C566.8 352.1 566.6 354 565.7 358.6 C564.7 363.2 561.5 368.9 558.3 374.6 C555.2 380.3 550.7 386.8 546.9 392.9 C539.7 394.1 532.4 395.2 525.2 396.3 C522.1 399 519.3 403 516 404.3 C512.8 405.7 515.1 407 505.7 404.3 C496.4 401.7 475.2 393.5 460 388.3 C444.7 383.2 426.7 377.6 414.2 373.5 C401.7 369.4 394.7 366.9 385 363.6 C387.1 369.6 389.5 375.6 391.4 381.5 C393.3 387.3 396.4 394.7 396.4 398.6 C396.4 402.5 393.7 403.9 391.4 404.8 C389 405.8 386.8 405 382.2 404.3 C377.6 403.7 373.8 401.3 363.9 400.9 C354 400.5 337.2 400.5 322.7 402.1 C308.3 403.6 285.5 408.3 277 410.1 C268.5 411.8 280 412 271.5 412.4 C262.9 412.7 239.1 412.9 225.7 412.4 C212.4 411.8 202.1 410.6 191.4 408.9 C180.7 407.2 174.3 407.8 161.7 402.1 C149.1 396.3 127.4 382.2 115.9 374.6 C104.5 367 101.5 363.9 93.1 356.3 C84.7 348.7 74 338.8 65.6 328.9 C57.2 319 50.4 307.9 42.7 296.8 C35.1 285.8 25.8 273.4 19.9 262.5 C14 251.7 5.4 242.3 7.3 231.7 Z"/></clipPath><g clip-path="url(#fb)"><path d="M-3 235.1 C0.4 227.5 19.9 208.2 31.3 198.5 C42.7 188.8 52.3 182.9 65.6 176.8 C79 170.7 96.1 165.3 111.4 161.9 C126.6 158.5 141.9 157.1 157.1 156.2 C172.4 155.2 187.6 155 202.9 156.2 C218.1 157.3 233.4 159.8 248.6 163 C263.8 166.3 282 169.7 294.3 175.6 C306.7 181.5 318.4 193.2 322.7 198.5 C327.1 203.8 325.8 209.5 320.5 207.6 C315.1 205.7 295.5 190.5 290.7 187.1 C286 183.6 299.1 187.6 292.1 187.1 C285 186.5 263.5 184 248.6 183.6 C233.7 183.2 218.1 184.2 202.9 184.8 C187.6 185.3 172.4 189 157.1 187.1 C141.9 185.1 125.5 173.5 111.4 173.3 C97.3 173.1 83.9 175.6 72.5 185.9 C61 196.2 50 221.9 42.7 235.1 C35.5 248.2 34.4 263.3 29 264.8 C23.7 266.3 16.1 249.2 10.7 244.2 C5.4 239.3 -6.4 242.7 -3 235.1 Z" fill="#f9cf90"/><path d="M31.3 276.3 C31.3 262.9 52.3 293.8 65.6 301.4 C79 309 96.1 316.9 111.4 322 C126.6 327.2 142.6 331.5 157.1 332.3 C171.6 333.1 183 328.5 198.3 326.6 C213.5 324.7 228.8 319.3 248.6 320.9 C268.4 322.4 303.5 332.7 317 335.7 C330.5 338.8 325.2 339.5 329.6 339.2 C334 338.8 329.2 332.5 343.3 333.4 C357.4 334.4 391 340.7 414.2 344.9 C437.5 349.1 458.5 352.9 482.9 358.6 C507.3 364.3 547.7 367.8 560.6 379.2 C573.6 390.6 607.9 419.2 560.6 427.2 C513.4 435.2 332.8 425.3 277 427.2 C221.2 429.1 261 446.3 225.7 438.7 C190.5 431 98 408.5 65.6 381.5 C33.2 354.4 31.3 289.6 31.3 276.3 Z" fill="#e0aa5e"/><path d="M322.7 270.5 C325 270.5 341.8 279.5 352.5 283.1 C363.2 286.7 376.9 291.5 386.8 292.3 C396.7 293 408.3 286.9 411.9 287.7 C415.6 288.5 412.7 293.9 408.5 296.8 C404.3 299.8 394.2 305.5 386.8 305.5 C379.4 305.5 371.9 300.6 363.9 296.8 C355.9 293.1 345.6 287.5 338.8 283.1 C331.9 278.7 320.5 270.5 322.7 270.5 Z" fill="#e0aa5e"/><path d="M97.6 173.3 C113.7 160.2 157.1 155 161.7 160.8 C166.3 166.5 136.5 189.9 125.1 207.6 C113.7 225.4 99.7 249.6 93.1 267.1 C86.4 284.6 86.9 299.9 85.1 312.9 C83.2 325.8 87 346 82.1 344.9 C77.1 343.7 59.5 319 55.3 306 C51.1 293 55.2 278.2 56.9 267.1 C58.6 256.1 58.8 255.3 65.6 239.7 C72.4 224 81.6 186.5 97.6 173.3 Z" fill="#fff"/><path d="M260 168.8 C271.4 165.3 306.5 177.7 317 182.5 C327.4 187.2 324.5 191.6 322.7 197.3 C321 203.1 313.4 209.5 306.7 216.8 C300.1 224 291.5 230.9 282.9 240.8 C274.4 250.7 262.3 262.7 255.5 276.3 C248.6 289.8 245.9 304.5 241.7 322 C237.5 339.5 233 371.6 230.3 381.5 C227.6 391.4 230.3 385.3 225.7 381.5 C221.2 377.7 207.2 368.9 202.9 358.6 C198.5 348.3 198.3 333.4 199.4 319.7 C200.6 306 204.2 290 209.7 276.3 C215.2 262.5 226.1 249.6 232.6 237.4 C239.1 225.2 244 214.5 248.6 203.1 C253.2 191.6 248.6 172.2 260 168.8 Z" fill="#fff"/><clipPath id="fs"><path d="M97.6 173.3 C113.7 160.2 157.1 155 161.7 160.8 C166.3 166.5 136.5 189.9 125.1 207.6 C113.7 225.4 99.7 249.6 93.1 267.1 C86.4 284.6 86.9 299.9 85.1 312.9 C83.2 325.8 87 346 82.1 344.9 C77.1 343.7 59.5 319 55.3 306 C51.1 293 55.2 278.2 56.9 267.1 C58.6 256.1 58.8 255.3 65.6 239.7 C72.4 224 81.6 186.5 97.6 173.3 Z"/><path d="M260 168.8 C271.4 165.3 306.5 177.7 317 182.5 C327.4 187.2 324.5 191.6 322.7 197.3 C321 203.1 313.4 209.5 306.7 216.8 C300.1 224 291.5 230.9 282.9 240.8 C274.4 250.7 262.3 262.7 255.5 276.3 C248.6 289.8 245.9 304.5 241.7 322 C237.5 339.5 233 371.6 230.3 381.5 C227.6 391.4 230.3 385.3 225.7 381.5 C221.2 377.7 207.2 368.9 202.9 358.6 C198.5 348.3 198.3 333.4 199.4 319.7 C200.6 306 204.2 290 209.7 276.3 C215.2 262.5 226.1 249.6 232.6 237.4 C239.1 225.2 244 214.5 248.6 203.1 C253.2 191.6 248.6 172.2 260 168.8 Z"/></clipPath><g clip-path="url(#fs)"><path d="M31.3 276.3 C38.9 255.3 52.3 293.8 65.6 301.4 C79 309 96.1 316.9 111.4 322 C126.6 327.2 142.6 331.5 157.1 332.3 C171.6 333.1 183 328.5 198.3 326.6 C213.5 324.7 228.8 319.3 248.6 320.9 C268.4 322.4 305.6 318 317 335.7 C328.4 353.5 366.5 412 317 427.2 C267.5 442.5 67.5 452.4 19.9 427.2 C-27.7 402.1 23.7 297.2 31.3 276.3 Z" fill="#e6e6e6"/></g></g><path d="M7.3 231.7 C9.2 221 21.6 207.6 31.3 198.5 C41 189.3 52.3 182.9 65.6 176.8 C79 170.7 96.1 165.3 111.4 161.9 C126.6 158.5 141.9 157.1 157.1 156.2 C172.4 155.2 187.6 155 202.9 156.2 C218.1 157.3 233.4 159.8 248.6 163 C263.8 166.3 282 169.7 294.3 175.6 C306.7 181.5 310.4 188.6 322.7 198.5 C335.1 208.4 355.9 224 368.5 235.1 C381.1 246.1 390.7 257.2 398.2 264.8 C405.7 272.4 411.5 275.7 413.6 280.8 C415.6 286 413 291.8 410.8 295.7 C408.6 299.6 404.9 302 400.5 304.2 C396.1 306.3 389.8 307.2 384.5 308.7 C402 307.7 416.9 305.6 437.1 305.5 C457.3 305.5 489.3 307.1 505.7 308.3 C522.1 309.4 525.6 311 535.5 312.4 C540 317.9 544.4 323.1 549.2 328.9 C554 334.7 561.3 342.2 564.1 347.2 C566.8 352.1 566.6 354 565.7 358.6 C564.7 363.2 561.5 368.9 558.3 374.6 C555.2 380.3 550.7 386.8 546.9 392.9 C539.7 394.1 532.4 395.2 525.2 396.3 C522.1 399 519.3 403 516 404.3 C512.8 405.7 515.1 407 505.7 404.3 C496.4 401.7 475.2 393.5 460 388.3 C444.7 383.2 426.7 377.6 414.2 373.5 C401.7 369.4 394.7 366.9 385 363.6 C387.1 369.6 389.5 375.6 391.4 381.5 C393.3 387.3 396.4 394.7 396.4 398.6 C396.4 402.5 393.7 403.9 391.4 404.8 C389 405.8 386.8 405 382.2 404.3 C377.6 403.7 373.8 401.3 363.9 400.9 C354 400.5 337.2 400.5 322.7 402.1 C308.3 403.6 285.5 408.3 277 410.1 C268.5 411.8 280 412 271.5 412.4 C262.9 412.7 239.1 412.9 225.7 412.4 C212.4 411.8 202.1 410.6 191.4 408.9 C180.7 407.2 174.3 407.8 161.7 402.1 C149.1 396.3 127.4 382.2 115.9 374.6 C104.5 367 101.5 363.9 93.1 356.3 C84.7 348.7 74 338.8 65.6 328.9 C57.2 319 50.4 307.9 42.7 296.8 C35.1 285.8 25.8 273.4 19.9 262.5 C14 251.7 5.4 242.3 7.3 231.7 Z" fill="none" stroke="#000" stroke-width="8" stroke-linejoin="round" stroke-linecap="round"/><path d="M161.4 161.9 C158 165 148.7 174.2 142.4 181.7 C136.2 189.2 130 197.3 123.8 206.8 C117.6 216.4 110.7 228.9 105.2 238.8 C99.8 248.8 94.7 255.8 91.3 266.6 C87.9 277.3 86.5 291 84.8 303.4 C83 315.9 80.8 334.9 80.8 341.2 C80.8 347.6 83.5 347.9 84.8 341.7 C86.1 335.4 86.9 316.3 88.6 304 C90.2 291.6 91.5 278.2 94.8 267.7 C98.1 257.1 103.1 250.4 108.3 240.5 C113.6 230.6 120.3 218 126.4 208.4 C132.4 198.9 138.3 190.8 144.4 183.3 C150.4 175.7 160 166.8 162.9 163.3 C165.7 159.7 164.8 158.8 161.4 161.9 Z" fill="#000"/><path d="M63.3 244.1 C62.2 247.1 58.6 256.3 57.6 262.4 C56.6 268.5 57.3 275 57.1 280.8 C56.9 286.5 56.4 294.1 56.4 296.8 C56.5 299.5 56.9 299.5 57.4 296.9 C57.9 294.2 59 286.6 59.5 280.9 C59.9 275.2 59.1 268.8 59.9 262.7 C60.7 256.6 63.7 247.5 64.3 244.4 C64.8 241.3 64.4 241.1 63.3 244.1 Z" fill="#000"/><path d="M231.1 237 C229.9 239.4 230.4 246.1 226.6 252.5 C222.7 258.9 212.6 267.3 208.1 275.4 C203.6 283.5 201.5 292.5 199.8 301 C198 309.6 197.5 317 197.8 326.6 C198.1 336.3 199.9 351.6 201.6 358.9 C203.2 366.2 206.4 368.7 207.7 370.5 C209 372.3 210.1 371.6 209.5 369.6 C208.9 367.6 205.6 365.5 204.2 358.3 C202.8 351.2 201.2 336 201.1 326.5 C201 317.1 202 310.1 203.7 301.8 C205.4 293.6 207 285.1 211.3 277.1 C215.6 269.2 225.7 260.8 229.5 254.2 C233.2 247.7 233.7 240.7 234 237.8 C234.3 234.9 232.4 234.5 231.1 237 Z" fill="#000"/><path d="M316.6 203.9 C314.9 205.4 312.9 207.6 307.1 213.6 C301.3 219.6 290.6 229.5 281.9 239.9 C273.2 250.3 259.4 269.8 255.1 276 C250.7 282.1 251 282.3 255.9 276.6 C260.7 270.9 275.1 251.9 283.9 241.7 C292.8 231.5 303.5 221.6 309 215.4 C314.6 209.2 316.1 206.5 317.4 204.5 C318.6 202.6 318.3 202.4 316.6 203.9 Z" fill="#000"/><path d="M244.7 308.1 C243.1 312.6 238.1 327.1 236 335.5 C234 343.8 233.5 350.9 232.3 358.4 C231.2 365.8 229.2 376.4 229.1 380.1 C228.9 383.8 230.5 384.1 231.5 380.5 C232.5 377 234 366.2 235.1 358.8 C236.3 351.4 236.5 344.4 238.3 336 C240.1 327.6 244.6 313.1 245.7 308.4 C246.7 303.8 246.3 303.6 244.7 308.1 Z" fill="#000"/><path d="M357 316.8 C366.5 317.5 395.1 318.6 414.1 320.1 C433.2 321.5 452.8 323.9 471.3 325.5 C489.7 327.1 516 329.9 525 329.6 C534 329.3 534.3 325 525.4 323.6 C516.5 322.1 490.1 321.9 471.6 320.8 C453.1 319.7 433.4 317.9 414.3 317.1 C395.2 316.2 366.6 315.8 357.1 315.8 C347.5 315.7 347.5 316.1 357 316.8 Z" fill="#000"/><path d="M325 323.9 C336 325.4 368.8 328.6 391.2 331.3 C413.7 333.9 438.8 336.9 459.7 339.7 C480.7 342.6 501.7 345.3 516.9 348.3 C532.2 351.2 545.6 355.9 551.3 357.3 C557.1 358.6 557.3 358.2 551.6 356.3 C546 354.4 532.6 349.4 517.4 346.1 C502.2 342.7 481.2 339.2 460.2 336.3 C439.2 333.4 414 331.1 391.5 328.8 C369 326.5 336.2 323.2 325.1 322.4 C314 321.6 313.9 322.4 325 323.9 Z" fill="#000"/><path d="M345.5 335.1 C355 337.1 383.5 342.4 402.5 346.4 C421.5 350.3 441.7 354.7 459.5 358.6 C477.4 362.5 501.1 368.7 509.7 369.5 C518.3 370.4 519.1 366.3 510.9 363.7 C502.7 361.1 478.4 357.4 460.4 354 C442.5 350.6 422.2 346.7 403.1 343.4 C384 340.1 355.3 335.5 345.7 334.1 C336.1 332.7 336.1 333 345.5 335.1 Z" fill="#000"/><path d="M354.7 349.9 C364.5 352.2 392.7 357.9 413.9 362.4 C435.2 366.9 462.1 373 482.4 376.9 C502.8 380.8 527.1 385.1 536.2 385.6 C545.3 386 545.9 381.9 537 379.7 C528.2 377.4 503.7 375.7 483.3 372.3 C462.8 368.9 435.9 363.3 414.5 359.4 C393.1 355.5 364.8 350.5 354.9 349 C344.9 347.4 344.8 347.7 354.7 349.9 Z" fill="#000"/><path d="M338.5 283.5 C341.4 285.7 350.5 291.8 356.6 295.4 C362.6 299 369.8 302.6 374.7 305.1 C379.6 307.5 383.9 309.9 386 310.1 C388.2 310.4 389.2 307.7 387.5 306.4 C385.9 305.1 381 304.5 376 302.3 C371 300.2 363.7 297 357.5 293.7 C351.4 290.4 342.2 284.4 339 282.7 C335.8 281 335.6 281.4 338.5 283.5 Z" fill="#000"/><path d="M342.9 361.7 C346.1 363.2 357.7 364.9 363.2 366.7 C368.7 368.5 372.8 370.5 376.1 372.6 C379.5 374.8 381.4 379.3 383.4 379.6 C385.3 379.8 388.6 376.3 387.9 374.2 C387.2 372.2 383 369.5 379.1 367.4 C375.3 365.4 370.5 363.5 364.6 361.9 C358.7 360.3 347.4 357.8 343.8 357.8 C340.1 357.8 339.7 360.2 342.9 361.7 Z" fill="#000"/><path d="M263.4 385.4 C268 384.9 282.2 383.4 291 381.6 C299.8 379.9 309.3 377.3 316.3 374.7 C323.4 372.1 330.5 367.5 333.2 365.9 C336 364.3 335.8 364 332.8 365 C329.9 366.1 322.5 369.9 315.4 372.2 C308.4 374.5 299.1 377 290.4 379 C281.7 381.1 267.7 383.3 263.2 384.4 C258.7 385.5 258.7 385.9 263.4 385.4 Z" fill="#000"/><g transform="translate(70.2,215.6) rotate(28)"><ellipse rx="15.5" ry="20" fill="#000"/><ellipse rx="7.5" ry="12.5" fill="#5c5c5c"/></g><path d="M196 358.6 C205.1 360.5 217.3 367.8 225.7 374.6 C234.1 381.5 240.1 391.7 246.3 399.8 C252.5 407.9 257.3 415.3 262.8 423.1 C260 426.4 257.1 429.7 254.3 432.9 C251.3 434.5 248.2 436 245.2 437.5 C241.7 440 238.3 442.5 234.9 445.1 C227.3 437.6 219.2 429.8 212 422.6 C204.8 415.5 200 409.7 191.4 402.1 C182.8 394.4 164 383.4 160.5 376.9 C157.1 370.4 164.9 366.2 170.8 363.2 C176.7 360.1 186.8 356.7 196 358.6 Z" fill="#e0aa5e"/><path d="M196 358.6 C205.9 363.9 217.3 367.8 225.7 374.6 C234.1 381.5 240.1 391.7 246.3 399.8 C252.5 407.9 257.3 415.3 262.8 423.1 C260 426.4 257.1 429.7 254.3 432.9 C251.3 434.5 248.2 436 245.2 437.5 C241.7 440 238.3 442.5 234.9 445.1 C227.3 437.6 219.2 429.8 212 422.6 C204.8 415.5 200 409.7 191.4 402.1 C182.8 394.4 170.8 385.3 160.5 376.9" fill="none" stroke="#000" stroke-width="8" stroke-linejoin="round" stroke-linecap="round"/><path d="M191 387.5 C194.2 392 204.4 405.1 211.1 414.2 C217.8 423.3 227.4 437.7 231.2 442 C235 446.3 237 444.8 234 439.9 C230.9 435 219.9 421.6 212.9 412.8 C205.9 404 195.5 391.1 191.8 386.9 C188.2 382.7 187.8 383 191 387.5 Z" fill="#000"/><path d="M202.5 389.8 C205.7 393.6 216.1 404 222.6 411.9 C229.1 419.9 237.9 433.5 241.5 437.4 C245.1 441.3 247.1 439.8 244.3 435.3 C241.4 430.8 231.1 418.2 224.3 410.5 C217.5 402.8 206.9 392.6 203.2 389.1 C199.6 385.7 199.3 386 202.5 389.8 Z" fill="#000"/><path d="M223.1 400.2 C225.6 402.6 233.9 409.6 238.7 414.3 C243.5 419 249.3 426.5 251.9 428.5 C254.6 430.4 256.4 428.6 254.4 426 C252.5 423.4 245.3 417.1 240.2 412.7 C235.1 408.2 226.6 401.5 223.8 399.4 C220.9 397.3 220.6 397.7 223.1 400.2 Z" fill="#000"/><circle cx="232.1" cy="199.6" r="38.4" fill="#000"/><circle cx="232.1" cy="199.6" r="30.9" fill="#9ab8c3"/><circle cx="229" cy="195.3" r="26" fill="#cbdde2"/><circle cx="225.3" cy="186.7" r="14.2" fill="#fff"/><circle cx="133.8" cy="390.6" r="26.5" fill="#000"/><circle cx="133.8" cy="390.6" r="19" fill="#9ab8c3"/><circle cx="131.9" cy="388" r="16" fill="#cbdde2"/><circle cx="129.6" cy="382.6" r="8.7" fill="#fff"/><circle cx="345.8" cy="155" r="27.2" fill="#000"/><circle cx="345.8" cy="155" r="19.7" fill="#9ab8c3"/><circle cx="343.9" cy="152.3" r="16.5" fill="#cbdde2"/><circle cx="341.5" cy="146.8" r="9.1" fill="#fff"/></g></svg></div>
<div id="edge"></div>
</div></div>
</body></html>
